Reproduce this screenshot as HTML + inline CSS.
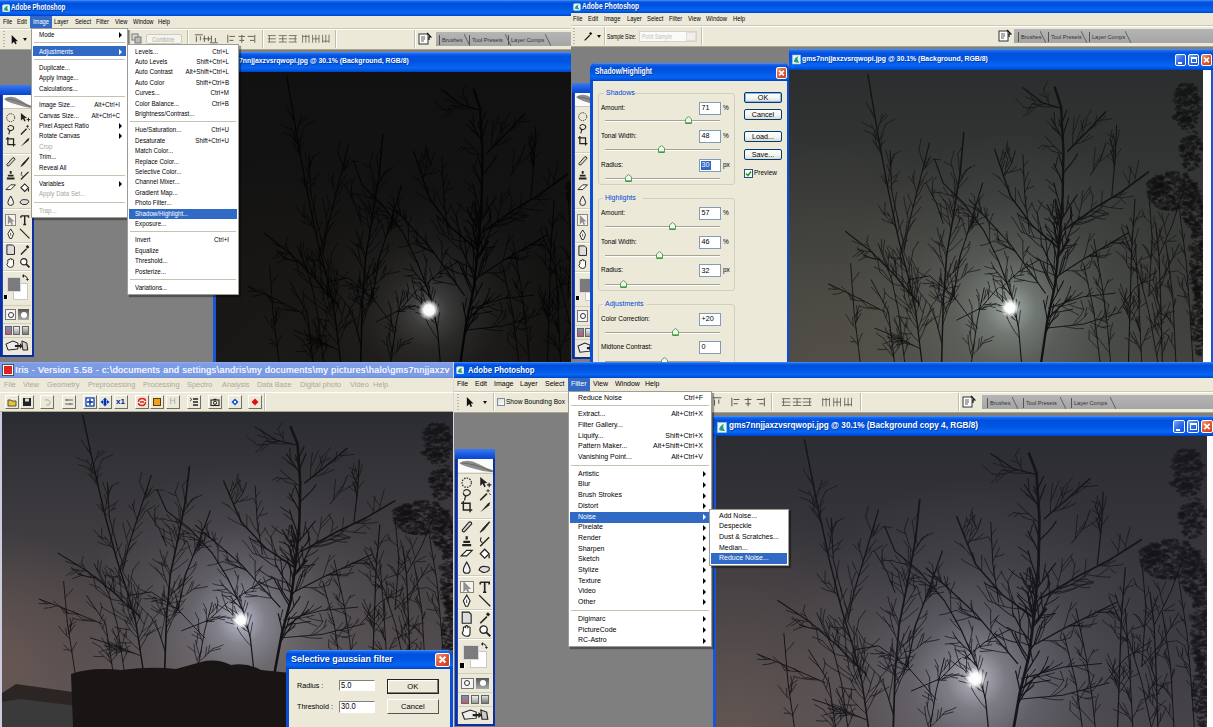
<!DOCTYPE html><html><head><meta charset="utf-8"><style>
html,body{margin:0;padding:0;width:1213px;height:727px;overflow:hidden;background:#7f7f7f}
body{position:relative;font-family:"Liberation Sans",sans-serif}
div{position:absolute;box-sizing:border-box}
.t{white-space:nowrap;line-height:1.15;font-size:7px;color:#000}
svg{position:absolute}
</style></head><body>
<svg width="0" height="0" style="position:absolute;left:0;top:0"><defs><g id="tree"><g fill="none" stroke-linecap="round"><path d="M35.0 69.9 38.7 48.1 44.4 15.2 53.9 -23.0 59.6 -68.7 63.3 -114.4 64.2 -160.0 61.3 -205.7 53.9 -225.0" stroke-width="2.75"/><path d="M53.4 -33.4 49.8 -34.8 46.3 -36.4M59.7 -94.9 55.8 -97.6 52.0 -100.4M58.3 -98.9 55.1 -101.4 51.8 -103.6 48.4 -105.9M55.7 -85.8 52.9 -89.6 50.1 -93.5 47.8 -97.6M54.7 -89.8 56.9 -94.3 59.2 -98.6 61.3 -103.0 63.1 -107.5M61.4 -184.4 59.6 -186.1 57.7 -187.9M56.4 -115.6 53.1 -118.4 49.7 -121.2 46.5 -124.1M54.0 -123.9 50.3 -126.5 46.7 -129.1 43.1 -131.9M57.4 -16.5 56.7 -21.3 55.8 -25.9 55.2 -30.7 55.0 -35.5M53.0 -40.2 53.0 -44.7 53.4 -49.3 53.7 -53.8 53.7 -58.4 53.5 -63.0M50.3 -43.4 45.6 -45.1 40.9 -46.8 36.3 -48.9 32.1 -51.5M45.5 -50.3 44.9 -54.8 44.2 -59.4 43.9 -63.9 43.2 -68.5 42.2 -72.9M43.6 -54.0 45.4 -58.6 47.6 -63.1 49.7 -67.6M39.7 -61.4 35.6 -63.5 31.8 -66.0 28.3 -68.9 24.8 -71.8 21.2 -74.7M37.6 -65.1 37.2 -69.4 37.1 -73.9 36.9 -78.3 36.7 -82.7M64.4 -94.4 64.0 -99.3 63.9 -104.2 63.4 -109.1 62.7 -114.0M67.3 -97.8 68.1 -102.0 69.0 -106.2 69.6 -110.5 70.2 -114.8M72.4 -91.2 72.9 -95.3 73.3 -99.4 73.5 -103.6M74.7 -94.7 73.3 -99.4 71.7 -104.2 69.9 -108.8M52.7 -83.3 54.0 -88.2 55.3 -93.1M51.6 -87.3 46.7 -89.6 41.7 -91.6M41.9 -36.1 38.0 -37.0 34.0 -38.0 30.2 -39.4 26.5 -41.2 23.0 -43.2 19.4 -45.2M36.3 -48.1 32.7 -49.8 29.2 -51.7 26.0 -54.1 22.6 -56.4 19.6 -59.0M63.6 -61.5 63.3 -65.7 62.8 -69.8 62.3 -74.0 61.4 -78.1 60.3 -82.2M68.0 -68.9 67.0 -73.2 66.5 -77.6 66.1 -82.0 65.9 -86.4M69.5 -72.9 73.0 -75.1 76.6 -77.1 80.1 -79.3 83.3 -81.8M73.0 -80.7 75.9 -83.7 78.5 -86.9 81.2 -90.0 83.5 -93.5M74.8 -84.6 74.3 -88.8 73.6 -92.9 73.3 -97.1 73.2 -101.3M52.7 4.4 57.3 4.1 61.8 3.6 66.3 2.8 70.8 2.1 75.3 1.3M63.3 -3.6 65.8 -7.0 68.0 -10.6 70.1 -14.2 71.7 -18.1 72.9 -22.1M66.8 -6.4 71.1 -7.9 75.3 -9.6 79.4 -11.6 83.4 -13.6 87.2 -16.1M58.5 -136.8 54.4 -140.3 50.6 -144.1M54.5 -143.8 55.9 -148.8 57.2 -153.8M56.1 -66.4 54.8 -70.9 53.9 -75.6 53.1 -80.2M53.1 -69.7 48.4 -72.6 43.6 -75.6M51.4 -67.1 47.8 -69.5 44.2 -72.0 40.6 -74.6 37.5 -77.7M63.6 -60.2 68.6 -61.4 73.6 -62.6M66.3 -63.4 71.0 -63.8 75.7 -64.2 80.4 -65.3M44.5 -34.6 44.8 -39.6 44.9 -44.7 44.6 -49.7M42.3 0.8 43.5 -3.6 44.3 -8.0 45.4 -12.4M60.1 -87.5 63.0 -91.3 65.7 -95.2M59.5 -91.5 61.6 -95.7 63.3 -100.0M59.1 -95.5 61.7 -98.5 64.3 -101.4M58.0 -85.4 58.1 -89.6 57.9 -93.8 57.6 -97.9 57.3 -102.1M50.7 -95.0 51.1 -100.2 51.9 -105.3 52.5 -110.5M48.7 -98.5 44.6 -100.9 40.7 -103.5 37.0 -106.5 33.7 -109.8M61.3 -175.7 57.7 -178.6 54.1 -181.6 50.5 -184.4M58.9 -179.3 55.4 -182.0 51.7 -184.5 48.3 -187.2 44.9 -190.1M54.1 -186.5 53.6 -191.1 53.1 -195.6 52.9 -200.2M49.7 14.0 52.8 10.9 56.1 8.0 59.0 4.8M59.1 -34.4 59.9 -38.3 60.9 -42.2 62.0 -46.1 63.3 -49.8 64.9 -53.6M65.2 -49.4 68.3 -52.2 71.2 -55.1 74.0 -58.2 76.5 -61.6 78.7 -65.0M67.3 -57.3 71.2 -59.8 74.7 -62.7 77.8 -66.0 80.8 -69.4 83.8 -72.9M57.7 -62.7 54.5 -65.0 51.3 -67.4 48.0 -69.8M55.9 -70.7 58.3 -74.8 60.5 -78.9 62.9 -83.0M55.0 -74.7 51.4 -77.1 48.0 -79.7 44.9 -82.6 42.1 -85.9M54.4 -78.8 56.1 -83.6 58.0 -88.3M53.7 -82.8 49.9 -87.3 46.7 -92.3M45.5 17.5 48.8 14.8 52.1 12.3 55.5 9.8 58.7 7.1M48.9 9.1 53.2 5.4 57.3 1.5M51.4 0.4 54.3 -2.8 57.4 -6.0 60.2 -9.3M63.5 -58.6 63.3 -62.7 63.1 -66.8 62.6 -70.8M63.3 -156.3 50.2 -167.8 42.4 -175.2M46.1 0.0 88.0 -11.5 126.3 -15.2M43.2 20.6 88.0 16.5 133.7 4.1M15.6 -156.3 17.7 -114.4 23.4 -76.5M96.7 -135.7 109.0 -152.2 115.2 -168.7M-6.2 -135.7 2.1 -148.1 6.2 -160.4M35.0 -49.4 10.3 -37.0 -10.3 -20.6M-144.0 -160.4 -141.9 -119.3 -133.7 -86.4M-191.3 -45.2 -187.2 4.1 -178.9 61.7M-218.0 -24.7 -187.2 -12.3 -150.1 4.1M-158.4 -65.8 -141.9 -28.8 -133.7 4.1 -125.5 61.7M-121.3 -28.8 -96.7 -32.9 -67.9 -12.3 -39.1 20.6M-63.8 12.3 -35.0 0.0 -14.4 -20.6M-162.5 20.6 -137.8 28.8 -109.0 41.1M-100.8 -127.5 -88.4 -107.0 -80.2 -86.4M178.9 -53.5 195.4 -86.4 207.7 -119.3M133.7 -82.3 154.3 -37.0 166.6 4.1 178.9 61.7M203.6 -98.7 211.8 -45.2 216.0 4.1 220.1 61.7M100.8 -69.9 111.1 -20.6 117.2 20.6 121.3 61.7M166.6 -119.3 170.7 -69.9 166.6 -12.3M158.4 61.7 154.3 -12.3 150.1 -69.9M199.5 61.7 195.4 -12.3 187.2 -65.8M109.0 61.7 100.8 4.1 88.4 -45.2M166.6 -12.3 187.2 -37.0 203.6 -65.8M129.6 4.1 150.1 -20.6 174.8 -37.0M-137.8 61.7 -146.0 4.1 -166.6 -28.8M-47.3 61.7 -39.1 12.3 -30.9 -20.6" stroke-width="1.00"/><path d="M54.7 -29.4 53.4 -33.4 52.0 -37.3 50.4 -41.2 49.1 -45.2M61.5 -91.0 59.7 -94.9 58.3 -98.9 57.1 -103.1 55.9 -107.2 54.6 -111.3M63.8 -141.4 62.5 -145.5 61.3 -149.5 59.8 -153.4 58.1 -157.3M63.3 -174.6 64.5 -178.6 65.9 -182.6 67.4 -186.5 68.9 -190.4 70.5 -194.3M59.2 -65.0 58.5 -69.2 58.1 -73.4 57.6 -77.6 56.8 -81.7 55.7 -85.8 54.7 -89.8 53.7 -93.9M62.9 -180.5 61.4 -184.4 60.1 -188.4 59.0 -192.4M62.1 -99.2 60.6 -103.3 59.2 -107.4 57.8 -111.5 56.4 -115.6 55.1 -119.7 54.0 -123.9 52.6 -128.0M62.3 -188.9 64.3 -193.4 66.3 -197.8 68.4 -202.2M48.6 -1.7 50.7 -5.5 53.0 -9.2 55.3 -12.8 57.4 -16.5 59.7 -20.2 62.1 -23.8 64.1 -27.6M55.6 -36.9 53.0 -40.2 50.3 -43.4 47.8 -46.8 45.5 -50.3 43.6 -54.0 41.8 -57.8 39.7 -61.4 37.6 -65.1M61.5 -91.1 64.4 -94.4 67.3 -97.8 69.9 -101.4 72.5 -105.0 75.1 -108.6 77.8 -112.1 80.5 -115.6M60.1 -74.1 62.4 -77.6 64.8 -81.1 67.3 -84.4 69.8 -87.8 72.4 -91.2 74.7 -94.7M59.0 -63.5 57.9 -67.5 56.5 -71.5 55.3 -75.4 53.8 -79.3 52.7 -83.3 51.6 -87.3M63.8 -137.8 66.8 -140.9 70.0 -144.0 73.0 -147.1 75.9 -150.3 78.6 -153.8 80.9 -157.5M52.3 -16.5 50.3 -20.5 48.1 -24.3 46.0 -28.2 44.0 -32.2 41.9 -36.1 40.0 -40.0 37.9 -44.0 36.3 -48.1M57.9 -55.1 60.9 -58.2 63.6 -61.5 65.9 -65.1 68.0 -68.9 69.5 -72.9 71.4 -76.8 73.0 -80.7 74.8 -84.6M45.7 9.9 49.3 7.2 52.7 4.4 56.2 1.7 59.8 -1.0 63.3 -3.6 66.8 -6.4 70.2 -9.2 73.3 -12.4M63.6 -125.9 62.0 -129.6 60.3 -133.2 58.5 -136.8 56.6 -140.4 54.5 -143.8 52.7 -147.4M58.9 -63.1 56.1 -66.4 53.1 -69.7 50.3 -73.0 47.6 -76.5 44.8 -79.8 42.2 -83.3M56.8 -46.1 56.0 -50.3 55.0 -54.6 53.9 -58.8 52.5 -62.9 51.4 -67.1 50.4 -71.4M57.8 -54.1 60.7 -57.1 63.6 -60.2 66.3 -63.4 69.0 -66.6 71.7 -69.8M53.3 -20.5 50.9 -24.0 48.6 -27.4 46.5 -31.0 44.5 -34.6 42.8 -38.4 41.1 -42.2 39.8 -46.1M44.9 13.5 44.1 9.2 43.3 5.0 42.3 0.8 41.4 -3.5 40.4 -7.7M60.4 -78.2 59.3 -82.1 58.2 -86.0 57.4 -90.0 56.4 -93.9 55.6 -97.9 55.2 -102.0 54.5 -106.0 54.2 -110.0M59.0 -63.6 60.9 -67.4 62.8 -71.1 64.8 -74.8 66.8 -78.4M60.8 -83.5 60.1 -87.5 59.5 -91.5 59.1 -95.5 58.5 -99.6M60.8 -82.4 58.0 -85.4 55.4 -88.4 53.0 -91.7 50.7 -95.0 48.7 -98.5 46.8 -102.0 44.7 -105.5M63.4 -171.9 61.3 -175.7 58.9 -179.3 56.6 -183.0 54.1 -186.5 51.7 -190.2 49.3 -193.7M42.6 25.7 44.9 21.8 47.3 17.9 49.7 14.0 52.2 10.2 54.4 6.2 56.8 2.3 59.0 -1.7M54.5 -27.7 56.7 -31.1 59.1 -34.4 61.1 -37.9 62.7 -41.7 64.1 -45.5 65.2 -49.4 66.3 -53.4 67.3 -57.3M58.4 -58.6 57.7 -62.7 56.9 -66.7 55.9 -70.7 55.0 -74.7 54.4 -78.8 53.7 -82.8M43.3 21.4 45.5 17.5 47.4 13.4 48.9 9.1 50.4 4.8 51.4 0.4 52.4 -4.0M57.5 -51.4 60.6 -54.9 63.5 -58.6 65.9 -62.6 68.3 -66.7 70.3 -70.9M61.3 -204.0 38.7 -209.8 15.6 -225.0M122.2 -114.4 126.3 -152.6 127.9 -186.8M42.4 -15.2 0.4 -65.0 -49.0 -110.7M53.9 -30.9 88.0 -49.8 141.5 -76.5M-96.7 -168.7 -109.0 -127.5 -121.3 -86.4 -127.5 -57.6M-197.4 -78.2 -166.6 -57.6 -137.8 -32.9 -109.0 -4.1M-90.5 -152.2 -80.2 -127.5 -55.5 -107.0 -30.9 -78.2 -14.4 -49.4 2.1 -12.3 10.3 20.6 14.4 61.7M-32.9 -127.5 -47.3 -86.4 -59.6 -53.5 -67.9 -12.3M150.1 -111.1 146.0 -57.6 144.0 4.1 141.9 61.7M183.1 61.7 181.0 -4.1 178.9 -53.5 174.8 -86.4" stroke-width="1.25"/><path d="M26.5 -208.4 23.7 -205.0 20.5 -201.9M42.7 -208.8 38.6 -208.5 34.6 -208.1 30.5 -208.3 26.5 -208.4M29.7 -205.1 25.9 -201.0 21.7 -197.2M25.4 -204.6 22.5 -201.5 19.4 -198.5 16.0 -195.9M16.8 -204.7 13.5 -207.9 10.0 -210.9 6.7 -214.2M42.0 -208.9 37.9 -207.6 33.9 -206.2 29.7 -205.1 25.4 -204.6 21.1 -204.6 16.8 -204.7M38.1 -210.2 34.0 -210.8 30.1 -212.0 26.1 -213.0 22.2 -214.1 18.3 -215.5M31.7 -207.5 28.8 -211.1 26.2 -214.8 23.9 -218.8 21.5 -222.7M55.7 -205.4 51.7 -205.5 47.6 -205.5 43.6 -205.6 39.5 -205.6 35.5 -206.3 31.7 -207.5 27.9 -209.1M45.5 -211.5 45.6 -215.6 45.6 -219.7M43.5 -215.2 39.6 -216.8 35.8 -218.5M40.3 -223.2 42.5 -227.2 44.8 -231.2M47.4 -207.6 45.5 -211.5 43.5 -215.2 41.7 -219.1 40.3 -223.2M105.6 -192.0 109.9 -191.9 114.1 -192.2 118.4 -192.8 122.6 -193.3M85.9 -183.6 89.7 -185.5 93.6 -187.3 97.2 -189.6M88.5 -191.2 91.6 -194.5 94.6 -197.9 97.2 -201.6M79.4 -168.8 80.7 -172.6 82.3 -176.3 84.0 -180.0 85.9 -183.6 87.4 -187.3 88.5 -191.2M87.0 -169.8 91.1 -173.2 94.8 -177.0M77.8 -167.4 82.5 -168.3 87.0 -169.8 91.6 -171.2 96.0 -173.3 100.3 -175.2M101.8 -185.6 102.9 -191.0 104.2 -196.4M94.2 -181.6 98.0 -183.4 101.8 -185.6 105.3 -188.1 108.6 -190.8 111.9 -193.5 115.2 -196.3M75.5 -178.1 77.3 -182.0 79.1 -185.8 80.5 -189.7 82.1 -193.6 84.0 -197.4M75.2 -165.2 75.2 -169.5 75.2 -173.8 75.5 -178.1 76.1 -182.4 76.3 -186.7 76.7 -191.0 77.4 -195.3M87.7 -180.7 86.5 -186.3 85.3 -191.8M83.8 -172.5 85.6 -176.7 87.7 -180.7 89.4 -184.9 91.2 -189.1 93.0 -193.3M43.8 -165.4 41.0 -163.4 38.4 -161.4M38.9 -166.2 36.3 -164.5 33.7 -163.0M53.7 -164.8 48.7 -165.1 43.8 -165.4 38.9 -166.2M48.9 -161.1 46.8 -163.0 44.6 -164.8M60.9 -158.4 56.8 -158.8 52.8 -159.7 48.9 -161.1M143.1 -127.9 140.9 -131.3 138.6 -134.6 136.3 -138.0M142.3 -123.9 143.1 -127.9 143.8 -132.0 144.0 -136.1 144.6 -140.1 145.2 -144.1M98.0 -103.8 101.4 -106.5 105.0 -109.0M99.6 -114.1 97.4 -118.5 95.3 -122.9M96.5 -98.8 98.0 -103.8 98.9 -108.9 99.6 -114.1M83.5 -98.1 80.7 -102.1 78.3 -106.3 76.3 -110.8M85.8 -106.7 88.5 -109.7 91.3 -112.6 93.8 -115.8 96.4 -118.9M86.4 -111.1 89.0 -114.6 91.8 -118.0 94.6 -121.4 97.5 -124.7M81.1 -89.6 82.3 -93.9 83.5 -98.1 84.6 -102.4 85.8 -106.7 86.4 -111.1 86.7 -115.5 87.2 -120.0M76.1 -86.6 80.5 -86.7 84.8 -87.2 89.1 -87.8 93.3 -88.9 97.4 -90.1 101.5 -91.5 105.6 -93.0 109.6 -94.5 113.7 -96.0M131.5 -114.7 134.4 -117.6 137.1 -120.7M122.4 -112.7 127.0 -113.6 131.5 -114.7 135.9 -116.1 140.1 -118.1M111.1 -99.7 114.6 -97.9 118.1 -95.9M95.9 -98.5 101.0 -98.3 106.1 -98.8 111.1 -99.7M121.6 -102.5 125.5 -104.7 129.2 -107.4 132.7 -110.3M108.1 -105.3 112.5 -104.1 117.0 -103.1 121.6 -102.5 126.1 -102.0 130.7 -101.6 135.3 -101.6M132.1 -112.8 135.8 -109.1 139.9 -105.8M124.0 -113.5 128.0 -113.0 132.1 -112.8 136.2 -112.8 140.2 -113.2 144.3 -113.6 148.3 -114.5M79.3 -85.4 82.8 -87.9 86.5 -90.2 90.0 -92.8 93.1 -95.9M74.7 -85.8 79.3 -85.4 83.9 -85.5 88.4 -86.4 92.9 -87.6 97.2 -89.1 101.3 -91.1M150.3 -133.3 147.6 -137.1 145.0 -141.0 142.3 -144.9M149.6 -128.5 150.3 -133.3 151.3 -137.9 152.5 -142.5 153.8 -147.1 154.9 -151.8M95.3 -94.2 99.7 -93.8 104.1 -93.8 108.5 -93.9 112.8 -94.6 117.2 -95.2M102.3 -98.3 106.3 -97.5 110.3 -96.7 114.4 -96.6 118.5 -97.1M109.2 -102.8 109.6 -107.0 110.3 -111.2 110.6 -115.4 110.9 -119.6M83.5 -91.0 87.5 -91.6 91.5 -92.7 95.3 -94.2 98.9 -96.1 102.3 -98.3 105.9 -100.4 109.2 -102.8 112.4 -105.4 115.6 -108.0M96.7 -94.1 101.2 -92.8 105.6 -91.7 110.1 -91.0 114.7 -91.0M80.7 -89.3 84.8 -90.1 88.9 -91.2 92.9 -92.4 96.7 -94.1 100.5 -95.9 104.1 -98.1 107.6 -100.4 111.0 -103.0M124.2 -149.8 119.8 -152.8 115.9 -156.5M122.2 -160.0 124.4 -163.3 126.4 -166.7M125.4 -144.7 124.2 -149.8 123.0 -154.9 122.2 -160.0M123.9 -152.2 124.4 -157.0 124.9 -161.8M125.7 -147.6 123.9 -152.2 122.0 -156.8 120.6 -161.5M126.9 -166.0 128.4 -169.9 129.5 -173.9 130.4 -177.9 131.2 -182.0M125.3 -143.2 124.8 -147.6 124.5 -152.0 124.5 -156.4M123.1 -164.2 120.1 -166.7 117.0 -169.1M121.6 -168.5 122.8 -172.6 123.9 -176.8M126.4 -155.8 124.9 -160.0 123.1 -164.2 121.6 -168.5 120.1 -172.7M119.9 -171.7 121.4 -177.0 122.5 -182.4M126.5 -157.2 124.3 -162.0 122.1 -166.9 119.9 -171.7M125.0 -173.8 120.9 -175.8 116.7 -177.8M126.9 -164.7 125.9 -169.2 125.0 -173.8 124.0 -178.3M126.3 -153.0 129.8 -157.9 133.3 -162.7M-11.6 -131.6 -16.0 -134.7 -20.6 -137.5M-2.4 -121.5 -5.7 -124.7 -8.5 -128.2 -11.6 -131.6 -14.6 -135.0M33.9 -85.7 31.4 -88.9 28.9 -92.1 26.5 -95.3M32.7 -97.9 35.0 -101.3 37.0 -105.0 39.2 -108.6M35.4 -77.8 34.6 -81.7 33.9 -85.7 33.4 -89.8 33.1 -93.8 32.7 -97.9M5.3 -108.8 1.2 -110.6 -2.6 -112.9 -6.5 -114.9 -10.3 -117.1 -13.9 -119.7M29.1 -72.1 26.7 -76.7 24.8 -81.5 22.8 -86.2M21.1 -74.8 18.8 -78.7 16.6 -82.6 14.6 -86.6M17.2 -76.3 15.4 -80.4 13.6 -84.6 12.0 -88.8 10.5 -93.0 8.8 -97.2M13.3 -77.8 10.5 -81.7 7.8 -85.7 4.9 -89.5 1.9 -93.2M45.7 -70.1 41.5 -70.0 37.3 -70.4 33.2 -71.2 29.1 -72.1 25.1 -73.3 21.1 -74.8 17.2 -76.3 13.3 -77.8M-11.1 -151.2 -8.5 -152.9 -6.1 -155.0M-12.7 -147.3 -11.1 -151.2 -10.1 -155.3 -8.8 -159.3M6.5 -107.5 6.5 -112.7 6.6 -117.9 6.4 -123.1M22.1 -89.7 17.9 -91.0 13.9 -92.7 10.1 -94.9M-4.8 -143.2 -2.4 -146.5 -0.2 -149.9 1.9 -153.3M-2.8 -152.3 -4.6 -155.7 -6.1 -159.2M-7.5 -134.4 -6.0 -138.8 -4.8 -143.2 -4.0 -147.8 -2.8 -152.3M1.0 -113.7 -0.3 -117.7 -1.4 -121.8 -2.4 -125.9M33.0 -95.2 30.5 -98.8 28.3 -102.6 26.4 -106.5M40.5 -74.0 38.6 -78.1 36.8 -82.2 35.4 -86.5 34.1 -90.8 33.0 -95.2M-6.6 -154.8 -7.9 -158.3 -8.8 -161.8M-5.2 -158.6 -2.4 -161.0 0.3 -163.3M-11.2 -143.5 -9.8 -147.3 -8.2 -151.1 -6.6 -154.8 -5.2 -158.6M22.4 -89.3 18.0 -91.5 13.6 -93.5 9.3 -95.9M-9.9 -140.4 -7.9 -145.0 -6.1 -149.7M25.0 -84.2 21.4 -88.5 18.0 -93.0M29.4 -82.3 25.0 -84.2 20.8 -86.4 16.8 -89.0 12.9 -91.7M31.4 -30.5 26.3 -33.1 21.1 -35.6M28.9 -38.5 23.9 -41.5 19.3 -45.0M32.8 -26.6 31.4 -30.5 30.2 -34.6 28.9 -38.5 27.6 -42.5 26.0 -46.4 24.4 -50.2M-28.5 -94.2 -27.8 -98.0 -27.5 -101.8M-26.8 -90.1 -28.5 -94.2 -30.0 -98.4 -31.1 -102.8M-32.0 -95.0 -35.6 -96.9 -39.1 -98.9 -42.6 -101.0 -46.2 -103.0M-34.5 -100.5 -36.2 -101.3 -37.9 -102.2M-33.7 -96.6 -34.5 -100.5 -35.5 -104.4M17.3 -28.2 13.2 -27.7 9.0 -27.4 4.9 -27.2M5.4 -30.8 3.6 -34.7 2.3 -38.7 0.9 -42.8M33.5 -25.7 29.4 -26.0 25.4 -26.7 21.3 -27.4 17.3 -28.2 13.3 -28.9 9.3 -29.6 5.4 -30.8M6.9 -57.4 2.9 -59.3 -1.1 -61.3 -5.0 -63.5 -8.7 -66.1 -12.0 -69.0 -15.5 -71.8M-36.7 -104.8 -36.4 -108.5 -36.2 -112.3M-34.0 -96.8 -35.4 -100.8 -36.7 -104.8 -38.0 -108.8M0.5 -61.1 -1.5 -65.7 -3.0 -70.4 -5.0 -75.0M-3.6 -62.1 -7.7 -60.7 -11.8 -59.3 -16.1 -58.4 -20.3 -57.3M-19.3 -68.4 -23.3 -66.9 -27.3 -65.4 -31.5 -64.4 -35.7 -63.8M4.6 -60.0 0.5 -61.1 -3.6 -62.1 -7.6 -63.4 -11.5 -65.0 -15.4 -66.7 -19.3 -68.4M15.8 -51.0 18.0 -54.5 20.1 -58.1 22.0 -61.9M15.5 -55.4 19.7 -59.2 23.6 -63.5M15.6 -68.7 12.2 -72.3 9.1 -76.2M15.9 -46.6 15.8 -51.0 15.5 -55.4 15.5 -59.8 15.4 -64.3 15.6 -68.7M-13.2 -67.4 -14.2 -71.9 -15.0 -76.4 -15.5 -80.9M5.5 -58.9 1.6 -60.2 -2.2 -61.7 -5.9 -63.5 -9.5 -65.5 -13.2 -67.4 -16.7 -69.5M-14.6 -78.9 -19.8 -80.3 -25.0 -81.6M-36.7 -99.4 -40.6 -100.7 -44.3 -102.3 -48.0 -103.9 -51.7 -105.7M-2.7 -67.9 -3.3 -73.0 -4.0 -78.2M-13.1 -69.6 -15.7 -73.0 -18.6 -76.2M-1.3 -66.6 -5.3 -67.4 -9.2 -68.4 -13.1 -69.6 -17.0 -70.8M95.4 -53.4 99.8 -53.1 104.2 -52.9 108.6 -53.0 113.0 -53.6 117.3 -54.2 121.6 -55.5M93.9 -67.5 97.9 -71.7 101.6 -76.2M88.5 -50.0 89.9 -54.4 91.3 -58.8 92.5 -63.2 93.9 -67.5 95.3 -71.9 96.5 -76.3M100.8 -53.0 104.4 -54.6 107.7 -56.7M114.8 -51.8 117.5 -56.0 119.6 -60.4M96.2 -53.8 100.8 -53.0 105.5 -52.3 110.1 -51.7 114.8 -51.8M69.0 -51.2 69.1 -56.4 69.2 -61.7M62.8 -35.8 64.5 -39.6 66.2 -43.4 67.7 -47.2 69.0 -51.2 70.1 -55.2 71.4 -59.1M112.8 -60.9 114.7 -64.8 116.2 -68.9M116.9 -61.8 118.9 -64.9 120.8 -68.1M121.1 -62.9 123.6 -65.5 125.8 -68.5M108.6 -60.1 112.8 -60.9 116.9 -61.8 121.1 -62.9M132.0 -66.0 135.4 -63.0 139.0 -60.2M137.2 -65.7 140.5 -67.2 143.4 -69.1M121.5 -66.5 126.7 -66.3 132.0 -66.0 137.2 -65.7M132.1 -66.5 134.8 -68.4 137.3 -70.4M122.6 -67.0 127.3 -66.6 132.1 -66.5M93.2 -52.4 98.9 -52.7 104.5 -53.8M75.4 -37.9 79.3 -35.7 83.1 -33.4 87.1 -31.5 91.0 -29.5M79.5 -37.9 83.1 -34.5 86.7 -31.3 90.5 -28.2 94.2 -24.9M87.7 -38.7 90.5 -41.7 93.3 -44.7 96.1 -47.6M95.4 -41.5 97.0 -45.7 98.3 -50.1 99.8 -54.4 100.9 -58.8M67.2 -38.2 71.3 -38.1 75.4 -37.9 79.5 -37.9 83.6 -38.2 87.7 -38.7 91.6 -39.9 95.4 -41.5M124.8 -68.2 128.9 -69.0 132.9 -69.8 136.9 -70.9 140.8 -72.3M92.3 -11.9 95.2 -16.2 98.1 -20.4M62.6 -2.0 65.8 -6.2 68.6 -10.7M70.9 -3.8 75.0 -2.0 79.2 -0.7 83.4 0.3 87.8 1.1M54.0 -2.2 58.3 -1.8 62.6 -2.0 66.8 -2.7 70.9 -3.8 75.1 -4.7 79.3 -5.8M59.5 -3.7 63.2 -1.7 66.8 0.4 70.7 2.0 74.5 3.6 78.4 5.3 82.2 7.0M91.4 -11.8 95.5 -14.1 99.6 -16.3M113.7 -7.3 116.2 -4.9 118.8 -2.7M99.4 -12.6 104.2 -10.8 108.9 -8.9 113.7 -7.3M68.8 -6.3 72.5 -9.9 75.7 -13.9 78.7 -18.0M102.0 12.7 105.0 9.6 107.7 6.3 110.1 2.7M88.5 1.8 86.9 -3.0 85.2 -7.9M75.1 17.6 78.0 14.7 80.8 11.6 83.7 8.6 86.2 5.3 88.5 1.8M124.1 3.8 125.4 1.1 126.6 -1.5M120.3 7.7 124.1 3.8 127.9 -0.1M108.8 12.1 112.9 13.7 117.1 15.0M117.5 12.1 119.2 10.0 120.7 7.8M104.4 12.0 108.8 12.1 113.1 12.4 117.5 12.1M89.7 8.9 91.2 4.0 92.2 -0.9M77.6 17.4 81.9 14.9 85.9 12.0 89.7 8.9 93.1 5.3M110.2 19.7 115.4 19.2 120.5 18.0M96.5 14.2 100.9 16.4 105.5 18.2 110.2 19.7 115.0 20.5M64.6 18.6 69.2 19.6 73.9 20.3 78.6 20.9 83.3 21.1 88.0 21.0M16.7 -135.5 15.0 -138.7 13.5 -142.0M19.9 -121.9 24.4 -122.9 28.7 -124.4M17.5 -117.4 19.9 -121.9 22.4 -126.5 24.5 -131.2M16.3 -143.7 18.6 -146.8 20.9 -149.9M20.3 -97.0 22.4 -100.6 24.7 -104.2 26.6 -107.9M17.7 -103.6 18.8 -108.8 20.1 -114.0M20.0 -99.4 17.7 -103.6 15.2 -107.6 13.0 -111.7 11.0 -116.0 9.3 -120.4M17.1 -126.1 18.5 -130.5 20.2 -134.8 22.2 -139.0M123.4 -160.4 124.1 -164.7 125.0 -169.0M106.9 -149.4 111.4 -151.6 115.6 -154.3 119.7 -157.1 123.4 -160.4M100.6 -145.0 103.9 -148.6 106.9 -152.4 109.6 -156.4M100.1 -140.3 100.6 -145.0 101.0 -149.7 101.4 -154.4 101.9 -159.1 102.3 -163.8M-0.1 -153.2 -0.9 -158.4 -1.3 -163.6M-2.4 -157.7 -2.7 -161.9 -2.8 -166.2M-4.7 -162.1 -3.8 -166.6 -2.5 -170.9M2.3 -148.9 -0.1 -153.2 -2.4 -157.7 -4.7 -162.1M-0.4 -138.7 3.9 -141.7 8.0 -144.8M-4.8 -137.9 -0.4 -138.7 3.9 -139.6 8.3 -140.5 12.5 -141.9M20.9 -37.6 23.1 -36.1 25.2 -34.6M10.5 -37.1 15.7 -37.0 20.9 -37.6M12.3 -33.4 14.0 -35.9 15.3 -38.5M3.7 -31.7 8.0 -32.7 12.3 -33.4 16.7 -34.0M12.7 -38.2 13.7 -42.1 15.0 -45.9M15.0 -39.4 18.1 -43.6 21.4 -47.6M-116.4 -59.1 -113.0 -63.6 -109.7 -68.1M-123.5 -35.9 -121.8 -39.6 -120.2 -43.3 -119.0 -47.2 -118.0 -51.1 -117.1 -55.1 -116.4 -59.1M-129.5 -64.3 -125.8 -66.9 -122.2 -69.6M-128.0 -68.8 -129.6 -72.5 -131.0 -76.3M-130.6 -59.7 -129.5 -64.3 -128.0 -68.8 -126.2 -73.2 -124.3 -77.5M-168.4 -179.2 -172.0 -180.0 -175.5 -181.2M-157.0 -170.6 -161.0 -173.2 -164.8 -176.1 -168.4 -179.2M-164.6 -183.9 -168.8 -185.5 -173.1 -187.3 -177.1 -189.5M-156.8 -169.6 -158.7 -173.1 -160.9 -176.6 -162.6 -180.3 -164.6 -183.9 -166.3 -187.5M-146.3 -129.1 -142.7 -131.7 -139.1 -134.2 -135.4 -136.6 -132.0 -139.5M-143.8 -145.8 -145.9 -150.8 -147.5 -155.8 -149.1 -160.9M-147.3 -125.0 -146.3 -129.1 -145.5 -133.3 -144.9 -137.5 -144.2 -141.6 -143.8 -145.8 -143.4 -150.0M-140.0 -95.4 -139.0 -99.9 -138.4 -104.4 -137.7 -109.0 -136.9 -113.5 -136.2 -118.1M-121.1 -44.8 -123.3 -48.7 -125.3 -52.8 -127.3 -56.8M-121.3 -28.8 -121.0 -32.8 -120.8 -36.8 -120.8 -40.8 -121.1 -44.8 -121.3 -48.8 -121.2 -52.8M-162.5 -175.3 -161.9 -179.1 -161.1 -182.9M-156.4 -167.6 -159.6 -171.3 -162.5 -175.3 -165.6 -179.2M-101.7 19.0 -98.8 16.2 -96.0 13.1 -93.5 9.9M-108.9 33.6 -107.2 29.9 -105.2 26.4 -103.3 22.8 -101.7 19.0 -100.0 15.4 -98.0 11.8M-133.0 -81.2 -133.8 -86.2 -134.4 -91.2M-135.4 -76.8 -133.0 -81.2 -130.5 -85.6 -128.2 -90.1M-117.5 -13.4 -117.2 -17.9 -117.3 -22.4 -117.1 -26.9 -117.3 -31.4 -117.8 -35.8 -118.2 -40.3 -118.4 -44.7M-127.7 -66.4 -128.8 -70.9 -130.2 -75.3 -131.3 -79.7 -132.4 -84.2M-124.8 -79.4 -121.5 -82.2 -118.4 -85.4 -115.5 -88.6 -112.7 -91.9M-130.1 -57.8 -129.1 -62.2 -127.7 -66.4 -126.3 -70.7 -125.3 -75.0 -124.8 -79.4 -124.2 -83.8 -123.7 -88.3M-161.4 -192.0 -164.6 -197.1 -167.4 -202.3M-115.0 -9.6 -112.8 -13.6 -110.8 -17.6 -109.0 -21.7 -107.5 -25.9M-113.1 -25.6 -109.3 -28.2 -105.5 -31.0 -102.1 -34.0 -98.8 -37.3 -95.3 -40.3M-110.8 -37.4 -113.4 -41.7 -116.0 -45.9 -118.4 -50.3M-115.6 -5.7 -115.0 -9.6 -114.6 -13.6 -114.0 -17.6 -113.5 -21.6 -113.1 -25.6 -112.6 -29.6 -111.7 -33.5 -110.8 -37.4 -109.9 -41.3M-162.1 -195.5 -165.0 -198.8 -167.7 -202.2 -170.1 -205.9 -172.1 -209.8M-106.9 13.5 -103.6 11.1 -100.5 8.4 -97.5 5.7 -94.5 2.8 -91.4 0.1M-104.3 4.9 -106.9 0.8 -109.2 -3.7 -111.3 -8.1M-110.6 21.7 -108.7 17.6 -106.9 13.5 -105.5 9.3 -104.3 4.9 -103.1 0.6 -101.6 -3.6 -100.5 -8.0M-154.7 -165.9 -152.5 -168.4 -150.2 -171.0M-154.4 -174.1 -152.5 -176.1 -150.9 -178.3M-155.2 -161.9 -154.7 -165.9 -154.5 -170.0 -154.4 -174.1M-109.9 -2.1 -109.8 -7.0 -109.9 -11.9M-112.9 5.5 -111.3 1.7 -109.9 -2.1 -108.6 -6.0 -107.5 -9.9 -106.5 -13.9M-140.7 -87.5 -140.5 -91.7 -140.0 -95.8M-144.9 -94.4 -149.4 -95.8 -153.6 -97.6M-136.4 -80.6 -138.5 -84.1 -140.7 -87.5 -142.8 -91.0 -144.9 -94.4 -147.1 -97.9M-132.0 -53.7 -130.2 -57.9 -128.0 -62.0 -126.3 -66.3M-125.3 -41.9 -127.9 -45.5 -130.1 -49.5 -132.0 -53.7 -134.1 -57.7 -136.4 -61.6M-118.1 26.3 -123.0 26.5 -127.9 26.3 -132.7 25.5M-123.7 19.9 -123.7 14.5 -123.8 9.2M-108.7 35.0 -112.0 32.3 -115.2 29.5 -118.1 26.3 -121.0 23.2 -123.7 19.9 -126.1 16.4M-156.6 -161.9 -156.5 -164.6 -156.3 -167.3M-154.4 -158.2 -156.6 -161.9 -159.0 -165.5 -160.9 -169.3M-130.7 -41.5 -131.0 -46.1 -131.5 -50.6 -131.6 -55.1 -131.9 -59.6M-140.8 -49.8 -143.1 -53.9 -145.5 -58.0 -148.0 -62.0M-123.7 -36.5 -127.2 -39.1 -130.7 -41.5 -134.2 -44.2 -137.4 -47.1 -140.8 -49.8 -143.8 -52.9 -146.7 -56.2M-119.1 -15.5 -123.4 -16.4 -127.6 -17.8 -131.6 -19.6M-121.3 -18.9 -120.5 -23.3 -119.6 -27.7 -118.6 -32.1M-125.3 -25.8 -129.7 -27.9 -133.7 -30.5 -137.4 -33.4M-127.6 -29.1 -131.8 -32.2 -136.0 -35.2 -140.1 -38.4M-117.2 -12.0 -119.1 -15.5 -121.3 -18.9 -123.2 -22.4 -125.3 -25.8 -127.6 -29.1 -129.8 -32.5M-111.3 -16.7 -113.0 -21.4 -114.8 -26.1 -116.5 -30.8M-110.7 -25.2 -112.2 -29.1 -113.6 -33.2 -114.6 -37.3 -115.8 -41.4M-114.2 -0.1 -113.5 -4.3 -112.5 -8.4 -112.0 -12.6 -111.3 -16.7 -111.1 -20.9 -110.7 -25.2 -110.4 -29.4 -110.0 -33.6M-118.1 5.3 -121.9 2.8 -125.7 0.4 -129.5 -2.1 -133.2 -4.7 -137.0 -7.3M-119.9 1.6 -118.6 -2.3 -117.2 -6.2 -116.2 -10.1 -115.4 -14.2 -114.8 -18.2M-121.9 -2.1 -125.4 -4.1 -128.7 -6.5 -132.0 -8.8 -135.1 -11.3 -138.0 -14.2M-126.1 -9.2 -126.7 -14.5 -127.5 -19.7 -128.7 -24.8M-111.5 15.8 -113.8 12.4 -116.1 8.9 -118.1 5.3 -119.9 1.6 -121.9 -2.1 -123.9 -5.7 -126.1 -9.2 -128.4 -12.7M-132.5 -50.3 -137.1 -51.0 -141.6 -51.5 -146.2 -52.0M-137.8 -56.6 -142.3 -59.9 -146.3 -63.7M-124.9 -40.6 -127.4 -43.9 -129.9 -47.1 -132.5 -50.3 -135.3 -53.3 -137.8 -56.6 -140.3 -59.9M-117.8 -0.2 -115.5 -5.6 -113.1 -11.0M-121.6 -11.8 -118.4 -16.7 -115.7 -21.8M-122.4 -15.8 -119.9 -19.3 -117.4 -22.9 -114.8 -26.5M-112.2 10.6 -114.2 7.1 -115.9 3.4 -117.8 -0.2 -119.4 -4.0 -120.7 -7.8 -121.6 -11.8 -122.4 -15.8M-119.6 11.1 -123.9 10.7 -128.0 9.9 -132.2 9.0 -136.4 8.2M-123.8 3.2 -122.0 -0.6 -120.1 -4.3 -118.3 -8.0 -116.6 -11.8M-110.7 21.0 -114.0 18.0 -116.9 14.7 -119.6 11.1 -121.9 7.2 -123.8 3.2 -125.4 -0.9M-149.3 -187.6 -145.7 -189.4 -142.1 -191.2 -138.4 -192.8M-157.2 -171.2 -155.0 -175.2 -153.2 -179.4 -151.3 -183.5 -149.3 -187.6M-104.8 17.7 -100.8 16.3 -96.9 14.6 -93.2 12.4 -89.6 10.2 -85.9 8.1M-94.3 -2.2 -90.8 -5.9 -87.6 -9.8 -84.3 -13.8M-110.1 25.1 -107.4 21.5 -104.8 17.7 -102.2 14.1 -99.7 10.3 -97.5 6.3 -95.9 2.0 -94.3 -2.2M-162.4 -167.8 -161.0 -173.3 -159.7 -178.9M-153.9 -155.9 -156.7 -159.9 -159.5 -163.9 -162.4 -167.8 -165.2 -171.8M-140.8 -86.2 -145.4 -87.4 -149.9 -89.0 -154.2 -91.0M-150.2 -95.0 -150.2 -99.3 -150.3 -103.5 -149.9 -107.8M-137.2 -83.8 -140.8 -86.2 -144.2 -88.9 -147.3 -91.8 -150.2 -95.0 -153.1 -98.2 -155.8 -101.6 -158.3 -105.1M-156.3 -189.1 -151.4 -192.6 -146.6 -196.1M-154.6 -193.6 -151.4 -195.6 -148.4 -198.0M-159.0 -180.0 -157.8 -184.6 -156.3 -189.1 -154.6 -193.6 -153.3 -198.2M-103.4 -126.8 -99.8 -129.0 -96.2 -131.1 -92.7 -133.5M-113.7 -111.9 -110.6 -115.3 -107.8 -118.9 -105.5 -122.8 -103.4 -126.8M-101.6 -143.1 -99.3 -147.9 -97.4 -152.8M-92.3 -152.0 -87.7 -151.7 -83.1 -151.4M-105.1 -140.7 -101.6 -143.1 -98.4 -146.0 -95.5 -149.0 -92.3 -152.0M-116.5 -102.6 -112.8 -106.2 -109.6 -110.1 -106.4 -114.0M-116.3 -103.1 -118.7 -107.6 -120.9 -112.1 -122.8 -116.7M-119.9 -91.4 -116.2 -93.7 -112.8 -96.5 -109.8 -99.8 -106.9 -103.0M-111.2 -120.2 -108.8 -123.6 -106.3 -127.0 -104.1 -130.4M-123.4 -76.7 -120.5 -80.8 -118.1 -85.2 -115.5 -89.5M-102.0 -144.4 -101.5 -149.1 -100.6 -153.7M-104.9 -141.2 -102.0 -144.4 -99.5 -147.8 -97.4 -151.5 -95.4 -155.3M-109.5 -126.0 -106.7 -129.1 -104.0 -132.1 -101.6 -135.3 -99.1 -138.5M-109.4 -161.8 -108.0 -167.1 -106.9 -172.5M-103.3 -146.4 -104.8 -150.3 -106.5 -154.0 -107.9 -157.9 -109.4 -161.8M-114.8 -126.5 -118.3 -130.3 -121.7 -134.3M-116.0 -131.1 -115.2 -135.5 -114.7 -139.9M-112.1 -117.3 -113.4 -121.9 -114.8 -126.5 -116.0 -131.1 -117.3 -135.7M-123.5 -95.3 -121.6 -100.9 -119.6 -106.3M-121.4 -86.3 -122.4 -90.8 -123.5 -95.3 -124.6 -99.9 -125.6 -104.4 -126.7 -108.9 -127.4 -113.5M-143.4 -149.1 -140.9 -152.7 -138.6 -156.5M-142.0 -148.5 -143.0 -152.8 -143.6 -157.1M-139.3 -156.8 -135.2 -158.7 -131.2 -160.7M-143.2 -144.2 -142.0 -148.5 -140.7 -152.7 -139.3 -156.8M-142.7 -134.6 -144.5 -138.3 -146.0 -142.2 -147.5 -146.1M-139.7 -128.6 -137.3 -129.4 -134.9 -130.3M-142.2 -125.3 -139.7 -128.6 -137.3 -132.0 -135.2 -135.5M-149.2 -127.2 -150.3 -131.6 -151.7 -135.8M-142.0 -120.6 -145.5 -123.9 -149.2 -127.2 -152.4 -130.9 -155.1 -134.9M-146.7 -43.0 -150.3 -45.8 -154.0 -48.4 -157.4 -51.4M-152.4 -56.0 -151.9 -60.4 -151.3 -64.8 -150.3 -69.2M-154.6 -60.1 -154.2 -65.2 -154.1 -70.3M-144.6 -38.7 -146.7 -43.0 -148.5 -47.4 -150.5 -51.6 -152.4 -56.0 -154.6 -60.1M-128.6 -23.7 -129.2 -28.3 -129.5 -32.8 -129.6 -37.3 -130.0 -41.9 -130.1 -46.4 -130.0 -51.0M-176.7 -64.3 -180.9 -65.4 -185.0 -67.0 -189.1 -68.4M-170.7 -57.5 -173.2 -54.8 -175.6 -52.2M-175.0 -58.2 -179.4 -55.5 -183.8 -52.8M-179.3 -58.9 -184.0 -55.5 -188.6 -51.9M-166.3 -57.3 -170.7 -57.5 -175.0 -58.2 -179.3 -58.9 -183.6 -59.9M-136.7 -31.8 -136.3 -37.2 -135.5 -42.5M-170.8 -52.0 -174.8 -55.8 -178.5 -59.8M-157.5 -49.8 -162.0 -50.2 -166.4 -51.1 -170.8 -52.0 -175.0 -53.5M-122.2 -25.4 -120.6 -29.4 -119.1 -33.4M-121.2 -16.3 -121.9 -20.8 -122.2 -25.4 -122.0 -30.0M-119.6 -13.4 -121.2 -17.5 -122.5 -21.8 -123.5 -26.1M-128.7 -22.2 -133.1 -23.0 -137.5 -23.8 -141.8 -25.3M-116.0 -11.1 -119.6 -13.4 -122.9 -16.0 -125.9 -19.0 -128.7 -22.2 -131.4 -25.5 -134.1 -28.8M-138.4 -33.4 -140.1 -37.5 -141.6 -41.6 -142.9 -45.8M-169.5 -62.6 -172.0 -64.0 -174.6 -65.3M-171.9 -67.7 -171.1 -70.8 -170.2 -73.8M-166.7 -57.6 -169.5 -62.6 -171.9 -67.7M-137.0 -36.0 -140.7 -40.0 -144.4 -44.0M-137.4 -45.7 -138.9 -49.5 -140.1 -53.4 -141.3 -57.3M-136.1 -31.2 -137.0 -36.0 -137.4 -40.8 -137.4 -45.7 -137.7 -50.6M-161.6 -49.9 -163.4 -53.6 -165.0 -57.4M-170.8 -52.5 -176.4 -50.6 -181.8 -48.5M-175.4 -53.9 -179.3 -57.7 -182.9 -61.8M-156.8 -49.2 -161.6 -49.9 -166.3 -50.9 -170.8 -52.5 -175.4 -53.9M-75.5 -56.5 -71.5 -58.9 -67.6 -61.6 -64.1 -64.7 -60.4 -67.7 -57.0 -70.9M-71.2 -7.3 -70.2 -11.6 -69.1 -15.9 -68.3 -20.3M-68.8 -11.1 -68.7 -15.5 -68.9 -19.9 -69.4 -24.3M-80.4 2.3 -77.2 -0.7 -74.0 -3.8 -71.2 -7.3 -68.8 -11.1 -66.9 -15.1M-75.9 4.6 -77.5 0.9 -78.8 -3.0 -80.4 -6.7 -81.7 -10.5M-72.2 -3.6 -68.7 -6.9 -65.4 -10.5 -62.3 -14.2M-68.9 -12.0 -65.5 -16.0 -62.5 -20.2 -59.9 -24.7M-67.5 -16.3 -68.5 -21.0 -69.6 -25.6 -71.0 -30.2 -72.3 -34.8M-80.9 17.1 -79.0 13.0 -77.4 8.8 -75.9 4.6 -74.1 0.4 -72.2 -3.6 -70.5 -7.8 -68.9 -12.0 -67.5 -16.3M-81.5 -62.6 -85.1 -64.5 -88.6 -66.6 -92.0 -68.8 -95.1 -71.4M-82.9 -66.5 -81.6 -71.0 -80.1 -75.5 -79.0 -80.1M-76.3 -51.4 -77.9 -55.2 -79.7 -58.9 -81.5 -62.6 -82.9 -66.5 -84.1 -70.4 -85.4 -74.3 -86.5 -78.3 -87.3 -82.3M-71.7 -98.1 -69.6 -103.2 -67.3 -108.3M-73.2 -102.0 -71.8 -105.3 -70.8 -108.8M-74.7 -106.0 -78.0 -108.6 -81.3 -111.1M-68.8 -90.1 -70.3 -94.0 -71.7 -98.1 -73.2 -102.0 -74.7 -106.0M-86.4 20.6 -85.5 16.2 -84.9 11.9 -83.9 7.6 -83.2 3.3 -82.5 -1.1 -82.0 -5.4 -81.5 -9.8M-96.8 -3.6 -100.3 -6.7 -103.3 -10.2 -106.3 -13.6 -109.4 -17.1 -112.2 -20.8M-81.5 37.4 -82.9 33.3 -84.1 29.1 -85.3 24.8 -86.4 20.6 -87.7 16.4 -89.3 12.3 -91.1 8.3 -93.1 4.3 -94.9 0.3 -96.8 -3.6M-71.3 -11.0 -73.6 -14.6 -75.6 -18.4 -77.7 -22.1 -80.0 -25.7 -82.4 -29.2M-80.6 9.8 -78.9 5.6 -77.0 1.5 -74.8 -2.6 -73.0 -6.7 -71.3 -11.0 -69.9 -15.2 -68.3 -19.5M-65.1 -81.3 -61.3 -82.7 -57.7 -84.5 -54.3 -86.7M-60.7 -89.0 -61.4 -93.8 -61.7 -98.6 -62.5 -103.3M-72.7 -70.3 -70.2 -74.0 -67.4 -77.5 -65.1 -81.3 -62.9 -85.1 -60.7 -89.0 -58.7 -93.0M-67.9 -94.3 -69.1 -98.8 -70.5 -103.2 -71.8 -107.6 -73.3 -111.9M-78.1 -29.6 -75.8 -33.4 -73.6 -37.2 -71.8 -41.2 -69.7 -45.1 -67.7 -49.0 -65.8 -53.0M-74.3 -62.7 -71.1 -65.9 -68.3 -69.6 -65.9 -73.5 -63.4 -77.2 -60.6 -80.9M-71.9 -84.2 -75.4 -87.5 -78.7 -91.0 -82.2 -94.5 -85.7 -97.7M-74.0 -92.4 -77.7 -94.4 -81.4 -96.3 -85.1 -98.2M-75.6 -100.7 -79.3 -102.5 -82.9 -104.5 -86.4 -106.6 -89.8 -108.8 -93.2 -111.1M-77.7 -108.9 -80.7 -111.7 -83.4 -114.9 -86.1 -118.0M-70.8 -80.1 -71.9 -84.2 -72.9 -88.3 -74.0 -92.4 -74.7 -96.6 -75.6 -100.7 -76.5 -104.8 -77.7 -108.9M-57.3 -132.8 -58.7 -137.6 -60.5 -142.4M-55.0 -137.0 -51.2 -140.9 -47.3 -144.8M-62.4 -124.7 -59.8 -128.7 -57.3 -132.8 -55.0 -137.0 -52.7 -141.2M-82.8 -5.6 -86.5 -7.5 -90.2 -9.4 -93.8 -11.4 -97.3 -13.6M-85.1 -8.9 -89.0 -11.3 -92.6 -14.1 -96.1 -17.0M-87.1 -12.4 -85.7 -16.9 -84.8 -21.5 -83.9 -26.1 -83.3 -30.7M-80.3 -2.6 -82.8 -5.6 -85.1 -8.9 -87.1 -12.4 -88.8 -16.0 -90.3 -19.7 -91.8 -23.4 -93.3 -27.1M-74.5 -32.0 -70.4 -35.0 -66.8 -38.4 -63.2 -41.9M-79.0 -18.9 -77.5 -23.3 -75.8 -27.6 -74.5 -32.0 -73.1 -36.4 -72.1 -40.9 -71.2 -45.5M-63.0 -121.7 -59.7 -124.5 -56.3 -127.3 -53.3 -130.4 -50.3 -133.6M-81.4 35.1 -82.9 31.3 -84.1 27.4 -85.3 23.5 -86.7 19.7 -87.8 15.8 -89.3 12.0 -90.5 8.1 -91.6 4.2 -92.3 0.2M-80.2 -44.0 -82.8 -47.5 -85.1 -51.2 -87.4 -54.9 -89.8 -58.6 -92.3 -62.2M-82.4 -51.7 -86.1 -54.0 -89.4 -56.8 -92.6 -59.7 -95.5 -62.9 -98.6 -65.9M-77.5 -36.4 -78.7 -40.2 -80.2 -44.0 -81.3 -47.8 -82.4 -51.7 -83.5 -55.5 -84.4 -59.4 -85.1 -63.4 -85.6 -67.4M-63.7 -100.7 -61.3 -102.7 -58.8 -104.6M-68.9 -89.3 -67.1 -93.1 -65.2 -96.8 -63.7 -100.7M-76.5 -19.7 -71.8 -20.7 -67.2 -21.5 -62.5 -22.3M-73.8 -23.4 -74.5 -28.1 -75.1 -32.9 -75.8 -37.7M-70.9 -26.9 -66.3 -27.6 -61.8 -28.9M-79.2 -16.2 -76.5 -19.7 -73.8 -23.4 -70.9 -26.9 -68.4 -30.6 -65.7 -34.2M-69.6 -145.0 -74.3 -146.9 -78.8 -149.3M-71.0 -148.9 -69.6 -152.7 -68.4 -156.6 -67.1 -160.5M-62.2 -125.7 -64.0 -129.4 -65.7 -133.2 -67.1 -137.1 -68.2 -141.1 -69.6 -145.0 -71.0 -148.9M-51.9 -141.5 -46.8 -143.5 -41.9 -146.0M-61.7 -128.3 -59.1 -131.5 -56.7 -134.8 -54.4 -138.2 -51.9 -141.5M-68.1 -36.2 -67.0 -40.4 -65.7 -44.5 -64.3 -48.6M-65.1 -39.2 -63.5 -43.0 -62.1 -46.8 -60.9 -50.6 -59.6 -54.4 -58.0 -58.2M-78.2 -27.9 -74.8 -30.6 -71.4 -33.3 -68.1 -36.2 -65.1 -39.2 -62.3 -42.6 -59.8 -46.2 -57.6 -49.9M-79.1 -62.8 -84.1 -65.5 -89.0 -68.1M-75.9 -54.6 -77.4 -58.7 -79.1 -62.8 -81.1 -66.8 -82.6 -70.9 -83.7 -75.2M-63.0 -157.2 -60.2 -160.8 -57.5 -164.5M-60.2 -137.0 -60.7 -141.1 -61.1 -145.1 -61.7 -149.1 -62.2 -153.2 -63.0 -157.2M-82.5 -10.7 -80.8 -14.5 -78.8 -18.3 -76.7 -22.0M-85.0 -18.6 -90.3 -21.1 -95.6 -23.8M-86.5 -22.4 -85.2 -26.5 -84.2 -30.6 -83.0 -34.7M-80.3 -2.7 -81.5 -6.7 -82.5 -10.7 -83.8 -14.6 -85.0 -18.6 -86.5 -22.4M-3.9 -30.3 -5.8 -32.8 -7.8 -35.2M-3.8 -25.6 -3.9 -30.3 -3.6 -35.1 -3.2 -39.9M-0.6 -14.3 -0.8 -19.2 -1.1 -24.0 -1.5 -28.9M-6.3 -20.5 -10.2 -22.7 -14.0 -25.1 -17.6 -27.9M-11.3 -27.4 -16.0 -28.0 -20.5 -29.2M2.3 -11.2 -0.6 -14.3 -3.5 -17.4 -6.3 -20.5 -8.9 -23.9 -11.3 -27.4M-55.6 -101.6 -60.0 -100.7 -64.5 -99.8 -68.9 -99.2M-66.6 -107.8 -67.8 -111.7 -69.1 -115.6 -70.5 -119.5M-47.9 -98.1 -51.7 -99.9 -55.6 -101.6 -59.5 -103.2 -63.2 -105.3 -66.6 -107.8M-3.0 -48.4 -4.8 -53.2 -6.7 -58.0M-6.3 -31.2 -5.4 -35.5 -4.6 -39.8 -3.6 -44.1 -3.0 -48.4 -2.2 -52.7M-74.0 -115.4 -77.1 -119.2 -79.8 -123.3M-83.1 -118.2 -87.0 -118.0 -91.0 -118.3M-64.6 -114.5 -69.3 -114.8 -74.0 -115.4 -78.7 -116.4 -83.1 -118.2M7.5 9.5 8.1 5.5 9.1 1.6 10.3 -2.3 11.4 -6.2M0.7 -4.7 -4.1 -3.5 -9.0 -2.6 -14.0 -2.2M4.5 -2.8 0.7 -4.7 -2.8 -7.0 -6.1 -9.6 -9.6 -12.0 -13.2 -14.3 -16.6 -16.8M4.4 11.2 1.7 7.3 -0.4 3.2 -2.3 -1.1M8.5 13.5 4.4 11.2 0.6 8.4 -3.2 5.5 -6.9 2.6 -10.5 -0.5M-13.6 -47.7 -16.9 -50.3 -19.9 -53.3 -22.6 -56.5 -25.0 -59.9M-43.6 -93.1 -43.4 -97.6 -42.9 -102.0 -41.9 -106.4M-63.7 -111.8 -67.9 -113.1 -71.9 -115.0M-52.7 -103.7 -56.6 -106.0 -60.4 -108.7 -63.7 -111.8 -67.0 -114.9M3.3 -7.3 5.1 -11.6 6.5 -16.0 7.6 -20.5M-66.8 -131.8 -69.3 -134.9 -71.5 -138.2M-66.0 -115.7 -66.5 -119.7 -66.8 -123.7 -67.0 -127.8 -66.8 -131.8M-51.8 -96.1 -55.8 -96.8 -59.7 -97.4 -63.7 -98.0M-41.0 -90.0 -44.6 -92.0 -48.2 -94.1 -51.8 -96.1 -55.2 -98.5 -58.2 -101.4M-43.7 -93.1 -47.8 -93.5 -51.9 -93.9 -56.1 -94.3M-3.6 9.4 -3.2 4.6 -3.0 -0.2 -2.9 -4.9M11.2 30.2 8.3 27.1 5.5 23.8 3.1 20.3 0.6 16.9 -1.6 13.2 -3.6 9.4M9.8 18.8 10.6 14.8 11.4 10.8 11.9 6.7 12.7 2.7M5.2 7.1 6.3 3.2 7.1 -0.7 7.5 -4.7 7.7 -8.7M7.8 10.7 5.2 7.1 2.5 3.5 0.1 -0.1 -2.0 -4.1 -4.0 -8.0 -5.9 -12.1 -7.3 -16.3M-10.5 -31.2 -15.6 -32.1 -20.6 -33.5 -25.4 -35.5M-18.5 -40.2 -22.5 -40.5 -26.4 -41.3 -30.2 -42.5M-4.1 -26.3 -7.3 -28.8 -10.5 -31.2 -13.5 -33.9 -16.1 -36.9 -18.5 -40.2 -20.7 -43.5 -22.7 -47.0M3.2 5.2 -1.8 4.9 -6.7 4.6 -11.5 3.5 -16.3 2.2M-0.4 2.9 -3.1 -1.0 -5.8 -4.7 -8.5 -8.5 -11.0 -12.4M-9.1 -6.4 -8.7 -11.5 -8.6 -16.5 -8.9 -21.5M-11.8 -9.7 -15.4 -11.7 -18.8 -14.0 -22.2 -16.3 -25.4 -18.8M-14.7 -12.9 -16.2 -16.6 -17.4 -20.4 -18.6 -24.3 -19.6 -28.2 -20.2 -32.2M6.9 7.1 3.2 5.2 -0.4 2.9 -3.7 0.1 -6.5 -3.1 -9.1 -6.4 -11.8 -9.7 -14.7 -12.9M-24.6 -83.7 -26.5 -87.8 -28.3 -92.0 -30.4 -96.0M-24.4 -88.0 -22.2 -92.3 -20.3 -96.7M-24.2 -66.4 -24.5 -70.7 -24.6 -75.0 -24.7 -79.4 -24.6 -83.7 -24.4 -88.0M-64.5 -114.4 -64.8 -119.4 -64.9 -124.4 -64.6 -129.5M-4.6 -19.2 -8.7 -20.0 -12.6 -21.3M-8.0 -22.3 -9.4 -25.7 -10.8 -29.0M1.9 -12.7 -1.4 -15.9 -4.6 -19.2 -8.0 -22.3M-14.6 -36.3 -19.7 -35.4 -24.9 -34.9 -30.0 -34.7M-4.4 -27.0 -8.0 -29.9 -11.3 -33.2 -14.6 -36.3 -18.0 -39.4 -21.3 -42.6M0.5 -22.7 -3.0 -25.0 -6.1 -27.8M-0.4 -27.0 0.9 -30.8 2.2 -34.5M1.3 -14.0 1.1 -18.3 0.5 -22.7 -0.4 -27.0M2.3 -11.2 3.1 -15.2 4.2 -19.0 4.9 -23.0M-43.6 -87.6 -45.8 -89.1 -47.8 -90.7M-38.4 -87.0 -43.6 -87.6 -48.7 -88.8M-189.7 -26.7 -186.7 -29.7 -183.9 -33.0 -181.3 -36.4M-188.1 18.1 -188.5 13.8 -189.0 9.5M-184.7 21.3 -188.1 18.1 -191.3 14.5 -194.0 10.7 -196.9 6.9M-184.4 5.9 -181.1 3.8 -177.9 1.5M-186.4 9.6 -184.4 5.9 -182.6 2.1 -181.0 -1.8M-188.3 -9.5 -191.7 -12.7 -195.1 -16.0 -198.7 -19.0 -202.2 -22.1M-183.4 12.3 -183.8 9.2 -184.1 6.1M-185.5 15.9 -183.4 12.3 -181.2 8.8 -179.0 5.4M-182.9 4.8 -183.7 1.2 -184.5 -2.4M-185.5 15.7 -184.1 10.3 -182.9 4.8M-182.5 36.8 -181.0 33.0 -179.3 29.3 -177.3 25.8M-185.5 34.6 -188.3 34.6 -191.1 34.3M-182.4 37.3 -185.5 34.6 -188.3 31.7 -191.2 28.8M-209.1 -19.2 -212.7 -21.5 -216.2 -23.9M-204.8 -19.4 -209.1 -19.2 -213.5 -19.1 -217.8 -19.6M-169.0 0.3 -172.2 -2.1 -175.1 -4.9 -178.0 -7.7 -180.9 -10.4M-156.4 1.3 -160.6 1.1 -164.8 0.8 -169.0 0.3 -173.2 -0.1 -177.4 -1.1 -181.4 -2.3M-198.8 -17.0 -203.2 -15.4 -207.7 -14.4 -212.4 -14.0M-159.2 0.1 -164.2 -0.2 -169.1 -1.2M-185.6 -7.9 -188.5 -10.5 -191.2 -13.2M-190.7 -8.6 -192.6 -12.0 -194.3 -15.6M-175.4 -7.1 -180.5 -7.3 -185.6 -7.9 -190.7 -8.6M-133.2 29.1 -137.5 27.3 -141.9 25.5M-129.0 36.8 -131.2 32.9 -133.2 29.1 -135.0 25.1 -136.4 21.0M-153.0 -38.2 -158.0 -39.9 -162.9 -41.9M-141.0 -25.2 -144.0 -28.5 -147.2 -31.6 -150.0 -35.0 -153.0 -38.2M-125.8 19.4 -128.8 14.3 -132.0 9.3M-129.5 33.2 -127.9 28.7 -126.8 24.1 -125.8 19.4 -124.7 14.8M-136.3 -6.3 -139.9 -8.5 -143.6 -10.6 -147.0 -13.1 -150.4 -15.7M-134.0 21.1 -132.2 16.0 -130.1 11.1M-129.6 32.6 -131.4 28.9 -132.9 25.1 -134.0 21.1 -135.5 17.3 -137.2 13.6 -138.7 9.7M-156.1 -36.6 -157.2 -40.6 -158.0 -44.7 -158.8 -48.8M-141.1 -25.3 -145.0 -27.9 -148.9 -30.6 -152.5 -33.6 -156.1 -36.6M-138.3 -47.6 -134.6 -50.1 -131.0 -52.8M-142.7 -30.5 -141.5 -34.8 -140.1 -39.0 -139.0 -43.2 -138.3 -47.6M-123.8 39.7 -124.0 36.6 -124.4 33.4M-127.4 48.4 -125.7 44.0 -123.8 39.7 -121.7 35.6M-130.7 25.1 -133.7 20.9 -136.5 16.6 -139.4 12.3M-146.0 -49.2 -147.9 -53.9 -149.5 -58.7M-146.4 -38.9 -146.3 -44.0 -146.0 -49.2 -145.4 -54.3M-42.1 -92.0 -40.1 -93.2 -38.2 -94.3M-48.2 -84.1 -44.9 -87.9 -42.1 -92.0M-62.4 -39.8 -58.8 -43.2 -55.7 -47.0 -52.4 -50.8M-42.8 -113.5 -44.7 -115.3 -46.6 -117.0M-41.2 -103.8 -42.2 -108.6 -42.8 -113.5M-46.4 -84.4 -45.6 -88.0 -44.5 -91.6M-43.9 -87.6 -43.4 -91.9 -42.7 -96.2M-41.4 -90.7 -41.7 -94.2 -42.1 -97.7M-39.0 -94.0 -38.3 -97.3 -37.7 -100.5M-49.2 -81.4 -46.4 -84.4 -43.9 -87.6 -41.4 -90.7 -39.0 -94.0M-39.9 -107.6 -35.9 -111.9 -31.9 -116.2M-45.3 -81.9 -44.7 -87.8 -44.2 -93.7M-42.4 -84.8 -36.9 -85.4 -31.6 -86.6M-39.6 -87.9 -39.2 -92.4 -38.7 -96.9M-36.8 -90.9 -32.8 -92.1 -28.9 -93.4 -25.2 -95.1M-51.2 -76.1 -48.1 -78.8 -45.3 -81.9 -42.4 -84.8 -39.6 -87.9 -36.8 -90.9M-48.1 -81.3 -45.6 -82.6 -43.3 -84.1M-45.3 -85.4 -43.0 -87.3 -40.9 -89.5M-50.7 -77.2 -48.1 -81.3 -45.3 -85.4M-50.5 -62.9 -49.3 -65.4 -48.1 -67.9M-57.6 -58.9 -54.0 -60.8 -50.5 -62.9 -47.2 -65.2M-57.6 -91.2 -61.4 -93.0 -65.0 -95.0 -68.6 -97.1M-52.1 -73.5 -53.5 -78.0 -55.0 -82.3 -56.4 -86.8 -57.6 -91.2M-58.3 -30.6 -56.4 -35.3 -54.4 -39.9 -52.7 -44.5M-54.7 -33.4 -53.1 -37.3 -52.0 -41.4 -51.1 -45.5M-51.2 -36.3 -46.1 -37.3 -41.0 -38.2 -35.9 -39.3M-65.3 -25.0 -61.8 -27.8 -58.3 -30.6 -54.7 -33.4 -51.2 -36.3 -47.6 -39.0 -44.0 -41.8M-65.9 -40.7 -65.0 -44.2 -64.2 -47.8M-64.9 -27.3 -65.4 -31.8 -65.7 -36.3 -65.9 -40.7M-49.3 -80.9 -49.5 -86.2 -49.8 -91.5 -50.3 -96.7M-61.3 -45.2 -58.5 -48.4 -55.8 -51.7 -53.0 -54.9 -50.5 -58.3 -48.5 -62.0M-45.6 -1.0 -47.4 -4.9 -49.2 -8.8M-45.4 13.3 -45.4 8.5 -45.6 3.8 -45.6 -1.0M-100.5 -32.3 -105.6 -34.3 -110.5 -36.9M-66.6 -10.9 -66.9 -16.9 -66.8 -22.9M-70.6 -14.3 -75.2 -15.7 -79.6 -17.6 -83.9 -19.5 -88.2 -21.6M-69.5 -9.2 -73.3 -7.3 -77.0 -5.3 -80.8 -3.6M-83.1 -13.8 -87.0 -11.8 -91.1 -9.9M-64.8 -8.8 -69.5 -9.2 -74.2 -10.3 -78.6 -12.1 -83.1 -13.8M-86.6 -23.8 -91.6 -22.8 -96.7 -21.6M-91.2 -25.5 -95.7 -25.2 -100.3 -24.9 -104.9 -25.1M-81.9 -22.3 -86.6 -23.8 -91.2 -25.5 -95.9 -27.0 -100.3 -29.1M-76.3 -18.4 -79.2 -22.7 -82.1 -27.0 -84.9 -31.3M-81.7 -22.2 -82.2 -26.7 -82.4 -31.2 -82.9 -35.7 -83.1 -40.2M-31.6 -3.3 -26.4 -3.5 -21.2 -3.8 -16.0 -4.8M-25.6 -13.2 -26.8 -16.3 -27.7 -19.4M-24.7 -21.9 -25.5 -24.5 -26.6 -27.1M-26.1 -8.9 -25.6 -13.2 -25.2 -17.6 -24.7 -21.9M-33.4 1.6 -31.8 0.2 -30.2 -1.3M-38.0 1.3 -33.4 1.6 -28.9 1.5M-32.6 0.1 -27.7 -2.6 -22.7 -5.2M-24.3 -2.1 -20.9 -1.1 -17.5 -0.5M-20.2 -3.5 -16.5 -3.3 -12.7 -3.4M-36.9 0.8 -32.6 0.1 -28.4 -0.8 -24.3 -2.1 -20.2 -3.5M-141.6 29.1 -143.3 25.7 -144.7 22.2M-146.4 27.0 -148.3 23.7 -150.0 20.2M-131.5 31.5 -136.6 30.6 -141.6 29.1 -146.4 27.0M-135.1 34.8 -138.5 31.4 -142.0 28.1M-143.2 34.3 -144.9 31.5 -146.4 28.6M-127.2 33.3 -131.1 34.4 -135.1 34.8 -139.2 34.8 -143.2 34.3M-120.6 37.2 -122.5 33.6 -124.0 29.7 -125.2 25.8M-125.3 35.8 -130.8 36.7 -136.2 37.5M-129.9 33.9 -131.2 30.1 -132.4 26.3M-134.1 31.3 -139.7 30.7 -145.2 30.2M-115.7 38.3 -120.6 37.2 -125.3 35.8 -129.9 33.9 -134.1 31.3M-131.3 33.5 -135.4 37.4 -139.6 41.1M-135.5 33.1 -139.1 36.5 -143.0 39.5M-139.6 32.2 -143.3 34.0 -147.3 35.2 -151.3 36.2M-127.1 33.4 -131.3 33.5 -135.5 33.1 -139.6 32.2 -143.6 30.8 -147.5 29.4M-92.3 -117.6 -90.7 -119.3 -89.1 -121.0M-91.9 -112.8 -92.3 -117.6 -93.0 -122.5M-92.8 -129.5 -90.6 -131.7 -88.3 -134.0M-93.5 -115.4 -93.4 -120.1 -93.0 -124.8 -92.8 -129.5M-82.8 -92.9 -82.8 -97.5 -82.9 -102.0 -83.4 -106.5M153.4 -0.4 157.1 -2.0 160.8 -3.7 164.3 -5.6M155.6 -4.2 155.6 -9.3 155.4 -14.3 155.0 -19.4M143.6 14.4 146.5 11.0 148.9 7.3 151.1 3.4 153.4 -0.4 155.6 -4.2 157.4 -8.3M146.1 -58.4 143.0 -63.2 140.4 -68.3M144.1 0.4 141.8 -2.8 139.3 -6.0 136.7 -9.1 134.5 -12.5 132.6 -16.1 130.9 -19.7M140.0 -46.0 139.8 -50.2 139.9 -54.3 139.9 -58.5M137.6 -50.2 134.0 -52.9 130.5 -55.6 127.1 -58.5M145.4 -38.1 142.4 -41.9 140.0 -46.0 137.6 -50.2 135.4 -54.5M148.0 -82.8 150.0 -86.8 152.0 -90.9M151.5 -91.4 154.9 -92.4 158.4 -93.4M148.4 -87.9 151.5 -91.4 154.1 -95.3 156.6 -99.2M145.1 -69.0 146.5 -74.1 147.4 -79.3M146.6 -64.6 145.1 -69.0 143.4 -73.4 141.9 -77.8 140.8 -82.4M142.4 2.0 139.7 -0.4 137.1 -2.9M139.2 -6.2 135.6 -10.5 132.6 -15.1M137.8 -10.4 139.2 -13.9 140.5 -17.3M143.9 6.1 142.4 2.0 140.9 -2.2 139.2 -6.2 137.8 -10.4M141.1 6.3 140.5 2.6 140.1 -1.0M143.8 10.0 141.1 6.3 138.7 2.3 136.3 -1.6M148.5 -0.1 148.5 -4.4 148.6 -8.6 148.7 -12.9M155.3 -10.3 155.0 -14.8 155.0 -19.3 155.1 -23.9M143.9 6.6 146.1 3.2 148.5 -0.1 150.9 -3.4 153.2 -6.8 155.3 -10.3M143.9 7.5 141.3 3.2 138.7 -1.0 136.2 -5.3 133.7 -9.5M142.0 -3.7 143.9 -9.3 145.3 -15.2M144.1 0.4 142.0 -3.7 139.8 -7.7 137.6 -11.7 135.9 -16.0 134.1 -20.2 132.6 -24.5M143.7 12.6 142.4 8.7 141.1 4.9 139.9 1.0 138.7 -2.9M146.5 -88.3 145.1 -89.6 143.8 -91.0M148.1 -84.0 146.5 -88.3 145.0 -92.5M141.2 -81.0 137.6 -83.0 133.9 -85.0M146.7 -65.7 145.3 -69.5 144.0 -73.4 142.6 -77.2 141.2 -81.0 140.0 -84.9M146.3 -4.2 149.2 -6.7 151.9 -9.5M148.1 -8.0 146.6 -11.4 145.0 -14.7M144.1 -0.6 146.3 -4.2 148.1 -8.0 149.7 -11.8M156.3 -49.5 161.2 -50.6 165.9 -52.4 170.7 -54.0M145.2 -32.7 147.2 -36.2 149.5 -39.5 151.9 -42.8 154.0 -46.2 156.3 -49.5 158.2 -53.0M145.8 -52.2 148.0 -56.8 149.8 -61.6M146.5 -63.5 149.1 -67.6 151.1 -71.9 152.7 -76.5 154.4 -81.0M171.1 -71.4 170.8 -73.9 170.3 -76.3M177.4 -65.7 174.2 -68.5 171.1 -71.4M185.0 42.2 185.2 38.3 185.5 34.5M182.6 46.4 185.0 42.2 187.0 37.9 188.9 33.5 190.6 29.1M175.9 -18.9 175.6 -23.0 175.6 -27.2 175.6 -31.4M171.8 -27.9 172.7 -32.2 173.5 -36.5 174.7 -40.8M180.7 -10.2 178.3 -14.5 175.9 -18.9 174.0 -23.4 171.8 -27.9M180.2 20.5 176.4 16.3 173.0 11.8M176.7 8.5 178.5 5.2 180.3 1.9M181.9 24.3 180.2 20.5 178.8 16.5 177.6 12.5 176.7 8.5M179.3 -45.6 175.9 -49.0 172.6 -52.5 169.7 -56.3M177.4 25.7 177.5 20.7 177.7 15.6M175.2 22.4 174.8 18.2 174.1 14.1 173.5 9.9 172.9 5.8M171.0 15.5 167.1 12.3 163.6 8.7M182.1 32.2 179.7 29.0 177.4 25.7 175.2 22.4 173.1 18.9 171.0 15.5 169.1 11.9M178.4 -57.9 174.2 -61.4 170.3 -65.2M175.3 -16.1 177.7 -19.9 180.3 -23.7 182.8 -27.4M181.2 3.9 179.8 -0.1 178.3 -4.0 177.1 -7.9 176.2 -12.0 175.3 -16.1 174.2 -20.1M176.9 -8.3 176.9 -12.8 177.1 -17.3 177.3 -21.8M181.1 -0.1 179.0 -4.2 176.9 -8.3 175.3 -12.7 173.5 -16.9 171.3 -21.0M173.6 -65.2 170.9 -66.3 168.4 -67.7M178.0 -61.2 173.6 -65.2 169.5 -69.4M180.3 -19.7 182.1 -23.5 183.6 -27.4 185.1 -31.4 186.7 -35.2 188.1 -39.2M184.8 10.1 189.2 7.8 193.3 5.1M181.6 13.6 184.8 10.1 188.3 6.6 191.4 2.9M177.1 -68.5 178.7 -72.9 180.7 -77.2 182.4 -81.6M179.5 -38.9 177.9 -42.7 176.3 -46.6 174.7 -50.4M187.6 5.9 192.6 4.4 197.6 3.0M181.6 16.6 183.7 13.0 185.7 9.5 187.6 5.9 189.2 2.1 190.8 -1.7 192.2 -5.5M173.4 -10.7 171.0 -14.3 168.8 -18.1 166.6 -21.9M181.5 13.6 179.6 9.8 178.0 5.8 176.7 1.7 175.6 -2.4 174.5 -6.5 173.4 -10.7M185.2 -84.3 186.9 -88.4 188.7 -92.5 190.6 -96.5M184.3 -88.3 181.9 -91.6 179.8 -95.0 177.9 -98.6M188.4 -72.5 187.3 -76.4 186.2 -80.3 185.2 -84.3 184.3 -88.3 183.2 -92.2 182.3 -96.2M181.4 -72.5 178.3 -74.9 175.0 -77.2M179.9 -76.6 181.3 -80.1 182.9 -83.5M184.3 -64.2 182.9 -68.4 181.4 -72.5 179.9 -76.6 178.8 -80.9M197.5 -107.7 195.3 -111.5 193.4 -115.4M200.0 -98.6 198.5 -103.1 197.5 -107.7 196.9 -112.4M188.9 -68.1 194.3 -68.1 199.6 -68.6M185.3 -66.1 188.9 -68.1 192.4 -70.3 196.0 -72.5 199.6 -74.6M201.9 -103.7 204.8 -106.7 207.7 -109.7M157.7 -40.7 156.5 -44.4 155.5 -48.2M157.2 -27.4 157.3 -31.8 157.5 -36.2 157.7 -40.7 158.1 -45.1M144.7 -58.1 141.6 -61.4 138.5 -64.7 135.3 -68.0M148.3 -50.0 149.8 -55.0 150.9 -59.9 152.1 -64.9M145.0 -57.4 141.2 -60.7 137.6 -64.3 134.1 -68.1M180.0 37.1 182.5 33.2 184.9 29.4M182.1 29.0 186.6 25.2 190.9 21.3M176.2 49.0 177.4 45.0 178.7 41.0 180.0 37.1 181.1 33.0 182.1 29.0M148.8 -49.0 145.2 -50.4 141.5 -51.7M137.9 -65.5 136.8 -66.8 135.9 -68.1M141.9 -64.2 137.9 -65.5 134.2 -67.2M151.5 -38.4 151.6 -41.6 151.8 -44.8M154.7 -35.6 151.5 -38.4 148.1 -41.1 145.1 -44.2M172.2 18.6 176.3 17.1 180.5 15.9 184.7 14.7M175.1 10.6 173.7 6.8 172.4 2.9 171.3 -1.1 170.6 -5.1M177.0 6.8 180.2 3.8 183.2 0.5 186.1 -2.8M170.5 22.5 172.2 18.6 173.6 14.6 175.1 10.6 177.0 6.8 178.4 2.8 179.8 -1.1M177.4 37.0 180.2 34.4 182.6 31.6M174.5 41.2 177.4 37.0 179.8 32.5 182.1 27.9M159.4 -24.4 156.2 -28.7 153.1 -33.1M159.3 -28.6 162.5 -31.4 165.5 -34.4M159.3 -20.1 159.4 -24.4 159.3 -28.6 159.3 -32.9 159.5 -37.1M210.1 -56.5 207.3 -58.9 204.4 -61.2M212.6 -11.1 206.8 -11.9 201.0 -13.0M206.9 -22.2 207.3 -26.5 207.5 -30.8M215.0 -7.7 212.6 -11.1 210.4 -14.7 208.4 -18.3 206.9 -22.2 205.2 -26.0M207.9 -70.9 205.8 -74.8 203.7 -78.6M203.7 -23.0 202.4 -27.6 201.0 -32.2M214.6 -12.3 210.8 -15.7 207.1 -19.2 203.7 -23.0M222.2 24.1 225.4 21.8 228.6 19.5M218.0 32.3 220.2 28.3 222.2 24.1 223.9 19.8 225.5 15.5M223.6 7.4 227.5 5.9 231.3 4.0 234.8 1.6M217.0 18.3 219.2 14.7 221.3 11.0 223.6 7.4 225.7 3.7 227.9 0.1 230.0 -3.6M212.3 -23.2 213.3 -28.4 214.4 -33.7M209.4 -33.1 205.2 -35.7 201.0 -38.2M214.1 -18.3 212.3 -23.2 210.7 -28.1 209.4 -33.1M212.5 -36.9 209.5 -40.1 206.6 -43.4 203.7 -46.7 201.3 -50.4M208.2 -69.1 209.1 -72.5 210.1 -75.8M217.7 9.5 214.5 5.7 211.4 2.0M216.7 14.4 217.7 9.5 218.3 4.4 219.1 -0.6M210.7 -53.0 207.9 -58.1 205.4 -63.3M215.4 -2.1 213.1 -6.2 210.9 -10.2 209.0 -14.5M104.3 -52.9 101.9 -56.6 99.5 -60.4 96.9 -64.0M120.0 32.4 122.7 29.2 125.2 25.7M120.9 21.9 122.2 18.8 123.3 15.6M118.9 37.5 120.0 32.4 120.5 27.1 120.9 21.9M119.8 45.9 116.6 43.0 113.8 39.7 110.9 36.5 108.1 33.2 105.2 30.0M105.6 -23.6 106.6 -29.2 107.7 -34.8M111.8 -15.8 108.7 -19.7 105.6 -23.6 102.8 -27.7 99.8 -31.6M104.8 -40.8 102.0 -44.1 99.1 -47.3M108.6 -32.6 106.5 -36.6 104.8 -40.8 102.8 -44.9 100.7 -48.9M115.2 7.2 117.0 1.8 118.7 -3.6M104.5 -23.4 103.9 -26.3 103.4 -29.2M111.5 -17.7 107.8 -20.3 104.5 -23.4 101.4 -26.7M116.8 -25.7 120.0 -27.7 123.2 -29.6M112.0 -14.5 113.4 -18.4 115.0 -22.1 116.8 -25.7 118.7 -29.3M105.4 -47.6 106.5 -51.3 107.5 -55.0M108.3 -16.2 106.3 -18.2 104.4 -20.2M113.4 -5.0 111.5 -8.7 109.8 -12.4 108.3 -16.2M173.5 -87.4 173.2 -90.1 172.6 -92.8M169.8 -80.3 171.7 -83.8 173.5 -87.4M169.5 -52.6 172.3 -55.8 174.9 -59.2 177.7 -62.6M161.8 -92.6 160.1 -96.6 158.4 -100.7M169.3 -86.8 165.5 -89.6 161.8 -92.6 158.4 -95.9M167.7 -105.6 170.1 -108.7 172.7 -111.7M164.4 -61.0 161.3 -63.0 158.1 -65.0M169.4 -51.5 166.9 -56.2 164.4 -61.0M169.3 -49.9 167.1 -53.5 164.8 -57.1 162.6 -60.6 160.4 -64.3M165.3 -36.9 164.8 -40.4 164.4 -44.0M162.8 -40.4 160.1 -41.4 157.6 -42.6M168.1 -33.7 165.3 -36.9 162.8 -40.4 160.7 -44.1M174.5 -65.3 177.8 -67.7 181.2 -70.0 184.5 -72.5M169.8 -56.6 172.0 -61.0 174.5 -65.3 177.1 -69.5 179.7 -73.7M147.5 4.9 143.1 3.1 138.9 1.1 134.8 -1.1M156.3 24.2 154.5 20.4 152.9 16.4 151.3 12.5 149.5 8.6 147.5 4.9M161.2 32.7 165.2 31.1 168.9 29.0M162.9 28.9 165.6 25.9 168.5 22.9M166.0 21.4 170.1 19.9 174.0 18.2M157.2 39.8 159.3 36.3 161.2 32.7 162.9 28.9 164.3 25.1 166.0 21.4M153.8 16.5 154.4 12.4 154.7 8.3M156.3 24.1 155.0 20.3 153.8 16.5 153.0 12.6 152.4 8.6M151.9 36.5 147.2 34.6 142.6 32.5 138.0 30.5M157.4 44.3 154.7 40.4 151.9 36.5 149.3 32.4 146.6 28.5 144.0 24.5M149.2 -39.7 145.7 -40.8 142.1 -41.8M152.5 -36.9 149.2 -39.7 146.0 -42.6 143.0 -45.6M150.1 -38.4 147.7 -38.7 145.2 -38.9M152.6 -35.6 150.1 -38.4 148.0 -41.5M152.8 14.9 149.2 12.5 145.6 10.2M156.2 23.3 154.3 19.2 152.8 14.9 151.1 10.7M153.3 35.5 148.9 32.1 144.8 28.3M157.3 42.8 155.3 39.1 153.3 35.5 151.5 31.7 149.8 27.9 147.8 24.2M154.4 -10.2 151.8 -13.2 149.5 -16.3M155.1 1.9 152.4 -3.0 149.7 -7.9M196.1 0.3 197.8 -4.2 199.3 -8.7M190.4 -20.7 185.8 -22.7 181.2 -24.8M188.6 -24.7 190.9 -29.1 193.0 -33.6M195.6 -8.6 193.9 -12.7 192.2 -16.7 190.4 -20.7 188.6 -24.7M196.0 -1.6 197.4 -5.6 198.5 -9.7M194.0 35.3 194.6 30.3 194.6 25.3M189.8 28.0 186.5 26.4 183.3 24.8M198.4 42.6 196.3 38.9 194.0 35.3 191.8 31.7 189.8 28.0M183.3 -47.1 184.0 -50.3 184.5 -53.6M192.0 -34.4 189.2 -38.7 186.2 -42.9 183.3 -47.1M191.0 10.8 185.7 7.9 180.9 4.4M188.0 7.3 182.2 6.3 176.5 5.3M197.0 17.4 194.0 14.1 191.0 10.8 188.0 7.3 185.2 3.8M192.5 13.9 192.5 10.7 192.4 7.4M197.2 20.8 194.9 17.3 192.5 13.9 189.9 10.6M195.2 -13.8 193.5 -17.6 191.6 -21.4 189.9 -25.2M194.7 -16.6 193.0 -20.3 191.1 -23.9 189.6 -27.7M94.9 31.7 94.9 27.1 95.1 22.6M106.2 42.0 102.5 38.5 98.6 35.2 94.9 31.7M101.8 25.9 102.3 21.8 102.4 17.7M104.5 30.0 101.8 25.9 99.2 21.8 96.7 17.6M104.6 30.7 100.6 27.8 96.9 24.5M100.0 1.0 96.5 -3.6 93.6 -8.5M111.4 9.3 115.9 6.9 120.2 4.2M114.0 5.0 113.8 0.5 113.7 -4.0M103.3 21.6 106.2 17.7 108.8 13.5 111.4 9.3 114.0 5.0M85.0 -40.9 85.9 -44.3 86.9 -47.6M91.7 -32.3 88.2 -36.5 85.0 -40.9M101.0 5.8 97.7 3.1 94.4 0.4M101.1 6.6 98.2 1.6 95.3 -3.4M196.0 -52.4 195.4 -57.0 194.6 -61.6M185.9 -35.6 186.7 -39.8 187.1 -44.0 187.8 -48.2M192.1 -45.6 190.4 -50.8 189.1 -56.1M202.4 -56.6 205.3 -57.8 208.1 -58.9M194.6 -50.0 198.4 -53.4 202.4 -56.6M191.4 -37.0 195.6 -37.1 199.8 -37.9M180.0 -28.4 183.9 -31.0 187.8 -33.8 191.4 -37.0M136.3 -3.9 137.4 -8.0 138.2 -12.1 139.2 -16.1 140.1 -20.2M158.2 -25.9 161.4 -26.9 164.6 -27.9M162.7 -26.6 166.8 -24.1 171.1 -22.0M172.0 -29.2 174.0 -33.8 176.3 -38.2M158.0 -25.8 162.7 -26.6 167.5 -27.6 172.0 -29.2M162.0 -28.5 162.6 -32.0 163.1 -35.6M-151.7 31.0 -156.0 28.5 -160.3 25.9M-140.4 43.4 -143.5 40.6 -146.5 37.6 -149.2 34.4 -151.7 31.0M-134.6 41.1 -134.4 36.9 -134.5 32.7 -134.4 28.6M-132.2 37.6 -127.8 35.4 -123.8 32.6 -119.8 29.8M-139.8 47.9 -137.2 44.5 -134.6 41.1 -132.2 37.6 -129.9 34.0 -127.6 30.5M-147.9 42.1 -153.5 42.4 -159.0 42.0M-139.4 50.6 -142.2 47.7 -145.1 45.0 -147.9 42.1 -150.8 39.2 -153.7 36.5M-149.1 9.7 -147.4 4.2 -146.3 -1.5M-152.5 2.5 -150.3 -2.0 -148.4 -6.5M-143.7 20.5 -145.3 16.9 -147.2 13.3 -149.1 9.7 -150.8 6.1 -152.5 2.5M-156.1 -12.0 -159.7 -15.1 -163.3 -18.2 -166.6 -21.6M-150.1 -15.0 -150.8 -17.7 -151.5 -20.3M-152.3 -5.9 -151.2 -10.5 -150.1 -15.0M-143.2 41.4 -141.0 37.6 -139.0 33.7M-139.3 51.2 -141.4 46.4 -143.2 41.4 -144.9 36.4M-38.5 42.3 -37.5 36.8 -36.8 31.1M-35.6 39.3 -34.5 34.3 -33.5 29.2M-32.9 36.1 -27.4 34.6 -21.9 33.2M-30.1 33.0 -24.5 31.2 -19.1 28.8M-45.0 47.7 -41.6 45.2 -38.5 42.3 -35.6 39.3 -32.9 36.1 -30.1 33.0M-47.3 46.4 -44.6 41.1 -42.4 35.6M-49.5 37.1 -53.4 33.7 -57.2 30.3M-45.5 50.8 -47.3 46.4 -48.6 41.8 -49.5 37.1 -50.2 32.4 -50.5 27.6M-47.9 27.4 -47.2 23.2 -46.8 18.9 -46.3 14.7M-44.2 43.0 -45.1 39.1 -46.3 35.3 -47.3 31.4 -47.9 27.4 -48.8 23.5M-37.3 -7.6 -38.5 -10.4 -39.9 -13.1M-37.2 -12.6 -38.7 -15.9 -40.4 -19.2M-36.5 2.2 -37.2 -2.7 -37.3 -7.6 -37.2 -12.6M-42.6 21.9 -47.7 19.3 -52.8 16.7M-43.9 18.1 -47.1 15.5 -50.3 13.0M-41.3 25.7 -42.6 21.9 -43.9 18.1 -44.8 14.2 -45.8 10.3 -46.8 6.4M-31.1 -9.2 -29.8 -13.7 -29.0 -18.3M-34.5 -5.8 -31.1 -9.2 -28.2 -13.1 -25.4 -17.0" stroke-width="0.75"/><path d="M69.1 -160.0 91.7 -179.4 114.8 -200.3M57.6 -61.3 27.1 -83.9 0.4 -114.4 -18.5 -162.1M-170.7 -238.6 -158.4 -176.9 -146.0 -119.3 -133.7 -69.9 -121.3 -28.8 -113.1 4.1 -104.9 61.7" stroke-width="1.50"/><path d="M65.4 -80.2 103.2 -102.8 133.7 -118.5 166.2 -139.0M-55.5 -178.9 -59.6 -139.9 -67.9 -94.6 -76.1 -53.5 -80.2 -4.1 -82.3 61.7" stroke-width="1.75"/></g><g fill-opacity=".5" stroke="none"><ellipse cx="212.8" cy="-187.5" rx="2.4" ry="1.1" transform="rotate(6 212.8 -187.5)"/><ellipse cx="208.9" cy="-210.2" rx="1.5" ry="0.7" transform="rotate(20 208.9 -210.2)"/><ellipse cx="211.4" cy="-193.7" rx="3.9" ry="1.8" transform="rotate(-2 211.4 -193.7)"/><ellipse cx="217.7" cy="-220.3" rx="3.1" ry="1.4" transform="rotate(-21 217.7 -220.3)"/><ellipse cx="201.7" cy="-222.9" rx="2.8" ry="1.2" transform="rotate(14 201.7 -222.9)"/><ellipse cx="209.9" cy="-211.2" rx="3.4" ry="1.5" transform="rotate(5 209.9 -211.2)"/><ellipse cx="210.9" cy="-201.6" rx="3.6" ry="1.6" transform="rotate(-2 210.9 -201.6)"/><ellipse cx="208.8" cy="-228.4" rx="3.2" ry="1.4" transform="rotate(25 208.8 -228.4)"/><ellipse cx="200.2" cy="-192.1" rx="2.6" ry="1.1" transform="rotate(26 200.2 -192.1)"/><ellipse cx="215.6" cy="-211.0" rx="1.8" ry="0.8" transform="rotate(-17 215.6 -211.0)"/><ellipse cx="222.5" cy="-209.2" rx="3.0" ry="1.3" transform="rotate(-12 222.5 -209.2)"/><ellipse cx="201.6" cy="-206.4" rx="2.3" ry="1.0" transform="rotate(5 201.6 -206.4)"/><ellipse cx="198.3" cy="-217.5" rx="3.2" ry="1.4" transform="rotate(26 198.3 -217.5)"/><ellipse cx="222.0" cy="-225.0" rx="3.1" ry="1.4" transform="rotate(-20 222.0 -225.0)"/><ellipse cx="222.2" cy="-224.3" rx="3.7" ry="1.7" transform="rotate(4 222.2 -224.3)"/><ellipse cx="210.1" cy="-216.7" rx="3.5" ry="1.6" transform="rotate(4 210.1 -216.7)"/><ellipse cx="210.9" cy="-199.6" rx="3.6" ry="1.6" transform="rotate(29 210.9 -199.6)"/><ellipse cx="224.4" cy="-194.0" rx="2.5" ry="1.1" transform="rotate(-21 224.4 -194.0)"/><ellipse cx="207.9" cy="-184.9" rx="3.6" ry="1.6" transform="rotate(-27 207.9 -184.9)"/><ellipse cx="209.2" cy="-209.1" rx="3.3" ry="1.4" transform="rotate(-10 209.2 -209.1)"/><ellipse cx="223.8" cy="-222.3" rx="2.7" ry="1.2" transform="rotate(30 223.8 -222.3)"/><ellipse cx="210.2" cy="-199.3" rx="3.0" ry="1.3" transform="rotate(-28 210.2 -199.3)"/><ellipse cx="215.3" cy="-190.8" rx="3.0" ry="1.3" transform="rotate(-21 215.3 -190.8)"/><ellipse cx="226.6" cy="-199.6" rx="2.2" ry="1.0" transform="rotate(28 226.6 -199.6)"/><ellipse cx="219.9" cy="-214.8" rx="2.6" ry="1.2" transform="rotate(1 219.9 -214.8)"/><ellipse cx="204.0" cy="-220.6" rx="2.8" ry="1.3" transform="rotate(7 204.0 -220.6)"/><ellipse cx="222.8" cy="-212.1" rx="2.5" ry="1.1" transform="rotate(13 222.8 -212.1)"/><ellipse cx="212.5" cy="-192.2" rx="3.9" ry="1.7" transform="rotate(1 212.5 -192.2)"/><ellipse cx="210.2" cy="-206.5" rx="2.5" ry="1.1" transform="rotate(5 210.2 -206.5)"/><ellipse cx="224.7" cy="-203.2" rx="3.0" ry="1.3" transform="rotate(-26 224.7 -203.2)"/><ellipse cx="204.0" cy="-217.8" rx="3.2" ry="1.4" transform="rotate(-9 204.0 -217.8)"/><ellipse cx="208.1" cy="-226.1" rx="1.5" ry="0.7" transform="rotate(-26 208.1 -226.1)"/><ellipse cx="204.6" cy="-227.3" rx="2.1" ry="0.9" transform="rotate(-3 204.6 -227.3)"/><ellipse cx="204.1" cy="-213.4" rx="2.4" ry="1.0" transform="rotate(-11 204.1 -213.4)"/><ellipse cx="203.2" cy="-191.7" rx="2.2" ry="1.0" transform="rotate(-7 203.2 -191.7)"/><ellipse cx="212.2" cy="-209.7" rx="2.9" ry="1.3" transform="rotate(14 212.2 -209.7)"/><ellipse cx="209.0" cy="-194.9" rx="3.5" ry="1.5" transform="rotate(-16 209.0 -194.9)"/><ellipse cx="216.0" cy="-190.6" rx="3.2" ry="1.4" transform="rotate(-24 216.0 -190.6)"/><ellipse cx="207.7" cy="-192.9" rx="3.5" ry="1.6" transform="rotate(-4 207.7 -192.9)"/><ellipse cx="216.0" cy="-213.7" rx="2.3" ry="1.0" transform="rotate(9 216.0 -213.7)"/><ellipse cx="220.1" cy="-216.6" rx="2.0" ry="0.9" transform="rotate(-23 220.1 -216.6)"/><ellipse cx="204.8" cy="-207.7" rx="3.5" ry="1.5" transform="rotate(20 204.8 -207.7)"/><ellipse cx="215.4" cy="-193.8" rx="3.5" ry="1.5" transform="rotate(9 215.4 -193.8)"/><ellipse cx="215.2" cy="-219.3" rx="1.8" ry="0.8" transform="rotate(-12 215.2 -219.3)"/><ellipse cx="214.2" cy="-218.0" rx="2.3" ry="1.0" transform="rotate(-5 214.2 -218.0)"/><ellipse cx="202.6" cy="-198.0" rx="3.8" ry="1.7" transform="rotate(-21 202.6 -198.0)"/><ellipse cx="227.8" cy="-205.0" rx="3.7" ry="1.6" transform="rotate(29 227.8 -205.0)"/><ellipse cx="197.2" cy="-196.0" rx="3.8" ry="1.7" transform="rotate(-17 197.2 -196.0)"/><ellipse cx="211.4" cy="-228.2" rx="3.1" ry="1.4" transform="rotate(1 211.4 -228.2)"/><ellipse cx="209.5" cy="-191.7" rx="2.0" ry="0.9" transform="rotate(-26 209.5 -191.7)"/><ellipse cx="204.4" cy="-212.7" rx="3.5" ry="1.5" transform="rotate(-27 204.4 -212.7)"/><ellipse cx="223.1" cy="-217.4" rx="3.8" ry="1.7" transform="rotate(24 223.1 -217.4)"/><ellipse cx="221.9" cy="-216.7" rx="1.5" ry="0.7" transform="rotate(15 221.9 -216.7)"/><ellipse cx="216.1" cy="-193.8" rx="3.1" ry="1.4" transform="rotate(1 216.1 -193.8)"/><ellipse cx="198.2" cy="-193.3" rx="3.0" ry="1.3" transform="rotate(-10 198.2 -193.3)"/><ellipse cx="211.6" cy="-182.8" rx="2.6" ry="1.2" transform="rotate(17 211.6 -182.8)"/><ellipse cx="207.5" cy="-196.9" rx="2.8" ry="1.2" transform="rotate(19 207.5 -196.9)"/><ellipse cx="218.8" cy="-186.3" rx="3.8" ry="1.7" transform="rotate(18 218.8 -186.3)"/><ellipse cx="212.5" cy="-207.6" rx="3.0" ry="1.3" transform="rotate(22 212.5 -207.6)"/><ellipse cx="220.0" cy="-201.7" rx="2.1" ry="0.9" transform="rotate(2 220.0 -201.7)"/><ellipse cx="201.8" cy="-197.8" rx="3.4" ry="1.5" transform="rotate(-30 201.8 -197.8)"/><ellipse cx="217.4" cy="-202.7" rx="1.8" ry="0.8" transform="rotate(-26 217.4 -202.7)"/><ellipse cx="226.9" cy="-209.3" rx="1.7" ry="0.7" transform="rotate(0 226.9 -209.3)"/><ellipse cx="208.1" cy="-193.0" rx="2.3" ry="1.0" transform="rotate(9 208.1 -193.0)"/><ellipse cx="203.4" cy="-213.4" rx="1.9" ry="0.9" transform="rotate(-10 203.4 -213.4)"/><ellipse cx="220.6" cy="-192.8" rx="3.2" ry="1.4" transform="rotate(-7 220.6 -192.8)"/><ellipse cx="217.9" cy="-200.7" rx="2.4" ry="1.1" transform="rotate(6 217.9 -200.7)"/><ellipse cx="213.9" cy="-220.6" rx="3.5" ry="1.5" transform="rotate(7 213.9 -220.6)"/><ellipse cx="202.7" cy="-199.4" rx="2.7" ry="1.2" transform="rotate(12 202.7 -199.4)"/><ellipse cx="199.8" cy="-195.8" rx="2.6" ry="1.2" transform="rotate(-15 199.8 -195.8)"/><ellipse cx="198.5" cy="-210.3" rx="1.6" ry="0.7" transform="rotate(-5 198.5 -210.3)"/><ellipse cx="198.1" cy="-195.3" rx="3.8" ry="1.7" transform="rotate(-8 198.1 -195.3)"/><ellipse cx="223.6" cy="-218.8" rx="2.1" ry="0.9" transform="rotate(-2 223.6 -218.8)"/><ellipse cx="222.5" cy="-190.1" rx="3.1" ry="1.4" transform="rotate(23 222.5 -190.1)"/><ellipse cx="215.4" cy="-225.1" rx="3.3" ry="1.5" transform="rotate(4 215.4 -225.1)"/><ellipse cx="221.9" cy="-194.3" rx="1.5" ry="0.6" transform="rotate(-21 221.9 -194.3)"/><ellipse cx="212.4" cy="-210.8" rx="1.7" ry="0.7" transform="rotate(-24 212.4 -210.8)"/><ellipse cx="216.9" cy="-212.8" rx="1.5" ry="0.7" transform="rotate(20 216.9 -212.8)"/><ellipse cx="222.8" cy="-190.0" rx="3.1" ry="1.4" transform="rotate(20 222.8 -190.0)"/><ellipse cx="223.8" cy="-211.2" rx="3.5" ry="1.5" transform="rotate(-28 223.8 -211.2)"/><ellipse cx="213.1" cy="-223.2" rx="3.2" ry="1.4" transform="rotate(-24 213.1 -223.2)"/><ellipse cx="211.7" cy="-229.5" rx="1.6" ry="0.7" transform="rotate(-11 211.7 -229.5)"/><ellipse cx="198.1" cy="-214.5" rx="2.1" ry="0.9" transform="rotate(-19 198.1 -214.5)"/><ellipse cx="211.8" cy="-186.3" rx="3.3" ry="1.5" transform="rotate(-6 211.8 -186.3)"/><ellipse cx="204.9" cy="-194.2" rx="2.3" ry="1.0" transform="rotate(-5 204.9 -194.2)"/><ellipse cx="221.9" cy="-197.0" rx="3.9" ry="1.7" transform="rotate(-5 221.9 -197.0)"/><ellipse cx="211.7" cy="-215.6" rx="3.2" ry="1.4" transform="rotate(15 211.7 -215.6)"/><ellipse cx="206.4" cy="-221.4" rx="2.7" ry="1.2" transform="rotate(9 206.4 -221.4)"/><ellipse cx="216.9" cy="-211.4" rx="1.7" ry="0.7" transform="rotate(15 216.9 -211.4)"/><ellipse cx="222.1" cy="-214.6" rx="2.6" ry="1.1" transform="rotate(13 222.1 -214.6)"/><ellipse cx="215.2" cy="-193.9" rx="1.9" ry="0.9" transform="rotate(5 215.2 -193.9)"/><ellipse cx="208.7" cy="-194.8" rx="3.2" ry="1.4" transform="rotate(27 208.7 -194.8)"/><ellipse cx="207.9" cy="-185.8" rx="2.5" ry="1.1" transform="rotate(21 207.9 -185.8)"/><ellipse cx="204.5" cy="-212.1" rx="2.0" ry="0.9" transform="rotate(-29 204.5 -212.1)"/><ellipse cx="201.8" cy="-203.7" rx="1.9" ry="0.8" transform="rotate(-8 201.8 -203.7)"/><ellipse cx="205.5" cy="-186.1" rx="1.8" ry="0.8" transform="rotate(29 205.5 -186.1)"/><ellipse cx="199.2" cy="-203.2" rx="2.6" ry="1.2" transform="rotate(20 199.2 -203.2)"/><ellipse cx="217.2" cy="-222.3" rx="2.7" ry="1.2" transform="rotate(13 217.2 -222.3)"/><ellipse cx="218.3" cy="-217.9" rx="3.3" ry="1.5" transform="rotate(28 218.3 -217.9)"/><ellipse cx="204.1" cy="-203.3" rx="2.0" ry="0.9" transform="rotate(13 204.1 -203.3)"/><ellipse cx="204.6" cy="-227.2" rx="3.6" ry="1.6" transform="rotate(-15 204.6 -227.2)"/><ellipse cx="214.9" cy="-194.0" rx="1.9" ry="0.8" transform="rotate(12 214.9 -194.0)"/><ellipse cx="221.7" cy="-223.8" rx="2.1" ry="0.9" transform="rotate(22 221.7 -223.8)"/><ellipse cx="207.7" cy="-190.9" rx="3.3" ry="1.5" transform="rotate(-25 207.7 -190.9)"/><ellipse cx="224.4" cy="-193.3" rx="2.2" ry="1.0" transform="rotate(-9 224.4 -193.3)"/><ellipse cx="200.0" cy="-215.5" rx="1.5" ry="0.6" transform="rotate(-10 200.0 -215.5)"/><ellipse cx="201.3" cy="-199.0" rx="2.0" ry="0.9" transform="rotate(5 201.3 -199.0)"/><ellipse cx="221.7" cy="-210.0" rx="2.8" ry="1.2" transform="rotate(-23 221.7 -210.0)"/><ellipse cx="209.8" cy="-185.8" rx="1.7" ry="0.8" transform="rotate(23 209.8 -185.8)"/><ellipse cx="216.2" cy="-209.8" rx="3.8" ry="1.7" transform="rotate(-8 216.2 -209.8)"/><ellipse cx="213.9" cy="-226.9" rx="2.2" ry="1.0" transform="rotate(11 213.9 -226.9)"/><ellipse cx="203.5" cy="-223.9" rx="2.1" ry="0.9" transform="rotate(15 203.5 -223.9)"/><ellipse cx="224.9" cy="-210.5" rx="2.8" ry="1.2" transform="rotate(-23 224.9 -210.5)"/><ellipse cx="202.1" cy="-205.1" rx="3.2" ry="1.4" transform="rotate(11 202.1 -205.1)"/><ellipse cx="205.4" cy="-209.9" rx="3.1" ry="1.4" transform="rotate(8 205.4 -209.9)"/><ellipse cx="218.5" cy="-184.7" rx="3.1" ry="1.4" transform="rotate(-23 218.5 -184.7)"/><ellipse cx="217.5" cy="-209.5" rx="2.3" ry="1.0" transform="rotate(13 217.5 -209.5)"/><ellipse cx="201.8" cy="-216.2" rx="3.1" ry="1.4" transform="rotate(-3 201.8 -216.2)"/><ellipse cx="209.2" cy="-196.1" rx="1.6" ry="0.7" transform="rotate(13 209.2 -196.1)"/><ellipse cx="212.2" cy="-223.9" rx="3.3" ry="1.5" transform="rotate(-8 212.2 -223.9)"/><ellipse cx="210.8" cy="-190.5" rx="3.6" ry="1.6" transform="rotate(-27 210.8 -190.5)"/><ellipse cx="203.7" cy="-206.0" rx="3.4" ry="1.5" transform="rotate(-9 203.7 -206.0)"/><ellipse cx="206.6" cy="-192.1" rx="2.8" ry="1.2" transform="rotate(16 206.6 -192.1)"/><ellipse cx="202.7" cy="-187.5" rx="1.7" ry="0.8" transform="rotate(-14 202.7 -187.5)"/><ellipse cx="216.3" cy="-200.8" rx="3.4" ry="1.5" transform="rotate(14 216.3 -200.8)"/><ellipse cx="214.7" cy="-195.8" rx="2.5" ry="1.1" transform="rotate(15 214.7 -195.8)"/><ellipse cx="217.6" cy="-225.2" rx="2.9" ry="1.3" transform="rotate(-21 217.6 -225.2)"/><ellipse cx="206.0" cy="-199.2" rx="2.8" ry="1.2" transform="rotate(4 206.0 -199.2)"/><ellipse cx="214.3" cy="-193.9" rx="3.4" ry="1.5" transform="rotate(-28 214.3 -193.9)"/><ellipse cx="216.9" cy="-227.7" rx="3.8" ry="1.7" transform="rotate(-7 216.9 -227.7)"/><ellipse cx="200.0" cy="-211.8" rx="3.0" ry="1.3" transform="rotate(29 200.0 -211.8)"/><ellipse cx="208.4" cy="-218.1" rx="3.6" ry="1.6" transform="rotate(-1 208.4 -218.1)"/><ellipse cx="200.6" cy="-218.2" rx="1.4" ry="0.6" transform="rotate(16 200.6 -218.2)"/><ellipse cx="205.8" cy="-220.4" rx="2.8" ry="1.2" transform="rotate(-2 205.8 -220.4)"/><ellipse cx="216.0" cy="-188.8" rx="1.5" ry="0.7" transform="rotate(0 216.0 -188.8)"/><ellipse cx="205.2" cy="-218.7" rx="2.9" ry="1.3" transform="rotate(28 205.2 -218.7)"/><ellipse cx="216.6" cy="-211.4" rx="3.4" ry="1.5" transform="rotate(7 216.6 -211.4)"/><ellipse cx="221.2" cy="-201.0" rx="2.0" ry="0.9" transform="rotate(-25 221.2 -201.0)"/><ellipse cx="196.5" cy="-211.4" rx="2.3" ry="1.0" transform="rotate(22 196.5 -211.4)"/><ellipse cx="209.8" cy="-214.2" rx="3.6" ry="1.6" transform="rotate(6 209.8 -214.2)"/><ellipse cx="224.3" cy="-214.9" rx="3.3" ry="1.5" transform="rotate(-9 224.3 -214.9)"/><ellipse cx="217.4" cy="-228.0" rx="3.6" ry="1.6" transform="rotate(-4 217.4 -228.0)"/><ellipse cx="212.3" cy="-222.8" rx="1.7" ry="0.8" transform="rotate(-27 212.3 -222.8)"/><ellipse cx="218.3" cy="-200.5" rx="1.8" ry="0.8" transform="rotate(-0 218.3 -200.5)"/><ellipse cx="208.1" cy="-222.9" rx="2.5" ry="1.1" transform="rotate(9 208.1 -222.9)"/><ellipse cx="208.1" cy="-189.8" rx="3.3" ry="1.5" transform="rotate(-6 208.1 -189.8)"/><ellipse cx="218.4" cy="-184.5" rx="3.3" ry="1.4" transform="rotate(-8 218.4 -184.5)"/><ellipse cx="203.6" cy="-192.7" rx="2.9" ry="1.3" transform="rotate(-17 203.6 -192.7)"/><ellipse cx="219.4" cy="-205.5" rx="3.4" ry="1.5" transform="rotate(-21 219.4 -205.5)"/><ellipse cx="204.8" cy="-203.0" rx="2.0" ry="0.9" transform="rotate(-20 204.8 -203.0)"/><ellipse cx="206.3" cy="-199.9" rx="1.5" ry="0.7" transform="rotate(-23 206.3 -199.9)"/><ellipse cx="217.5" cy="-190.6" rx="1.6" ry="0.7" transform="rotate(-29 217.5 -190.6)"/><ellipse cx="201.9" cy="-200.6" rx="3.2" ry="1.4" transform="rotate(-27 201.9 -200.6)"/><ellipse cx="203.3" cy="-196.8" rx="1.5" ry="0.7" transform="rotate(28 203.3 -196.8)"/><ellipse cx="212.8" cy="-198.2" rx="2.6" ry="1.2" transform="rotate(-20 212.8 -198.2)"/><ellipse cx="204.9" cy="-215.8" rx="1.8" ry="0.8" transform="rotate(-27 204.9 -215.8)"/><ellipse cx="210.6" cy="-218.5" rx="3.4" ry="1.5" transform="rotate(-2 210.6 -218.5)"/><ellipse cx="220.1" cy="-211.2" rx="2.1" ry="0.9" transform="rotate(-14 220.1 -211.2)"/><ellipse cx="217.0" cy="-223.7" rx="2.3" ry="1.0" transform="rotate(-24 217.0 -223.7)"/><ellipse cx="205.2" cy="-227.8" rx="2.9" ry="1.3" transform="rotate(-30 205.2 -227.8)"/><ellipse cx="216.7" cy="-204.3" rx="1.9" ry="0.8" transform="rotate(-28 216.7 -204.3)"/><ellipse cx="224.4" cy="-199.0" rx="3.7" ry="1.6" transform="rotate(-18 224.4 -199.0)"/><ellipse cx="223.1" cy="-208.5" rx="3.5" ry="1.5" transform="rotate(25 223.1 -208.5)"/><ellipse cx="214.7" cy="-207.4" rx="2.2" ry="1.0" transform="rotate(6 214.7 -207.4)"/><ellipse cx="216.4" cy="-208.1" rx="2.2" ry="1.0" transform="rotate(21 216.4 -208.1)"/><ellipse cx="219.6" cy="-195.5" rx="2.3" ry="1.0" transform="rotate(11 219.6 -195.5)"/><ellipse cx="218.0" cy="-210.2" rx="3.3" ry="1.5" transform="rotate(14 218.0 -210.2)"/><ellipse cx="218.1" cy="-221.4" rx="3.8" ry="1.7" transform="rotate(-8 218.1 -221.4)"/><ellipse cx="205.1" cy="-199.6" rx="3.4" ry="1.5" transform="rotate(-1 205.1 -199.6)"/><ellipse cx="211.0" cy="-195.6" rx="3.3" ry="1.4" transform="rotate(6 211.0 -195.6)"/><ellipse cx="209.3" cy="-220.6" rx="2.7" ry="1.2" transform="rotate(-21 209.3 -220.6)"/><ellipse cx="211.2" cy="-209.3" rx="2.6" ry="1.2" transform="rotate(16 211.2 -209.3)"/><ellipse cx="209.6" cy="-212.6" rx="2.0" ry="0.9" transform="rotate(21 209.6 -212.6)"/><ellipse cx="202.2" cy="-223.7" rx="3.6" ry="1.6" transform="rotate(-3 202.2 -223.7)"/><ellipse cx="223.1" cy="-218.4" rx="2.3" ry="1.0" transform="rotate(-8 223.1 -218.4)"/><ellipse cx="221.2" cy="-198.9" rx="3.8" ry="1.7" transform="rotate(-24 221.2 -198.9)"/><ellipse cx="206.9" cy="-209.1" rx="1.6" ry="0.7" transform="rotate(9 206.9 -209.1)"/><ellipse cx="212.1" cy="-200.2" rx="1.8" ry="0.8" transform="rotate(9 212.1 -200.2)"/><ellipse cx="210.3" cy="-207.0" rx="2.0" ry="0.9" transform="rotate(28 210.3 -207.0)"/><ellipse cx="214.2" cy="-187.5" rx="2.5" ry="1.1" transform="rotate(17 214.2 -187.5)"/><ellipse cx="200.3" cy="-219.0" rx="2.8" ry="1.2" transform="rotate(-19 200.3 -219.0)"/><ellipse cx="213.9" cy="-199.4" rx="3.5" ry="1.6" transform="rotate(-23 213.9 -199.4)"/><ellipse cx="227.8" cy="-202.0" rx="1.9" ry="0.9" transform="rotate(24 227.8 -202.0)"/><ellipse cx="221.5" cy="-197.0" rx="2.0" ry="0.9" transform="rotate(20 221.5 -197.0)"/><ellipse cx="202.0" cy="-218.8" rx="3.4" ry="1.5" transform="rotate(22 202.0 -218.8)"/><ellipse cx="204.6" cy="-189.9" rx="2.6" ry="1.1" transform="rotate(-23 204.6 -189.9)"/><ellipse cx="218.3" cy="-222.0" rx="3.5" ry="1.6" transform="rotate(-18 218.3 -222.0)"/><ellipse cx="201.0" cy="-209.8" rx="3.3" ry="1.5" transform="rotate(-25 201.0 -209.8)"/><ellipse cx="205.3" cy="-191.5" rx="1.6" ry="0.7" transform="rotate(3 205.3 -191.5)"/><ellipse cx="210.9" cy="-221.7" rx="3.1" ry="1.4" transform="rotate(6 210.9 -221.7)"/><ellipse cx="214.0" cy="-191.4" rx="3.9" ry="1.8" transform="rotate(-10 214.0 -191.4)"/><ellipse cx="207.5" cy="-202.7" rx="2.0" ry="0.9" transform="rotate(-20 207.5 -202.7)"/><ellipse cx="224.6" cy="-214.5" rx="3.6" ry="1.6" transform="rotate(29 224.6 -214.5)"/><ellipse cx="199.7" cy="-221.1" rx="2.8" ry="1.2" transform="rotate(-5 199.7 -221.1)"/><ellipse cx="226.7" cy="-213.2" rx="3.8" ry="1.7" transform="rotate(-1 226.7 -213.2)"/><ellipse cx="213.4" cy="-221.3" rx="4.0" ry="1.8" transform="rotate(25 213.4 -221.3)"/><ellipse cx="207.7" cy="-182.6" rx="1.9" ry="0.8" transform="rotate(-24 207.7 -182.6)"/><ellipse cx="210.3" cy="-218.9" rx="2.7" ry="1.2" transform="rotate(8 210.3 -218.9)"/><ellipse cx="225.6" cy="-200.3" rx="2.1" ry="0.9" transform="rotate(-4 225.6 -200.3)"/><ellipse cx="203.9" cy="-188.1" rx="3.3" ry="1.5" transform="rotate(-13 203.9 -188.1)"/><ellipse cx="223.8" cy="-153.6" rx="2.5" ry="1.1" transform="rotate(-25 223.8 -153.6)"/><ellipse cx="224.6" cy="-145.7" rx="3.2" ry="1.4" transform="rotate(29 224.6 -145.7)"/><ellipse cx="230.2" cy="-162.9" rx="2.4" ry="1.1" transform="rotate(-20 230.2 -162.9)"/><ellipse cx="214.6" cy="-147.5" rx="2.8" ry="1.2" transform="rotate(3 214.6 -147.5)"/><ellipse cx="210.3" cy="-145.8" rx="2.2" ry="1.0" transform="rotate(-2 210.3 -145.8)"/><ellipse cx="227.0" cy="-172.5" rx="2.2" ry="1.0" transform="rotate(-15 227.0 -172.5)"/><ellipse cx="218.5" cy="-162.4" rx="1.8" ry="0.8" transform="rotate(2 218.5 -162.4)"/><ellipse cx="212.8" cy="-162.3" rx="1.6" ry="0.7" transform="rotate(-18 212.8 -162.3)"/><ellipse cx="219.1" cy="-174.4" rx="3.9" ry="1.7" transform="rotate(17 219.1 -174.4)"/><ellipse cx="220.5" cy="-160.9" rx="1.9" ry="0.8" transform="rotate(-29 220.5 -160.9)"/><ellipse cx="211.0" cy="-155.5" rx="1.6" ry="0.7" transform="rotate(3 211.0 -155.5)"/><ellipse cx="224.1" cy="-154.0" rx="2.1" ry="0.9" transform="rotate(18 224.1 -154.0)"/><ellipse cx="212.2" cy="-155.3" rx="1.6" ry="0.7" transform="rotate(-4 212.2 -155.3)"/><ellipse cx="210.5" cy="-172.6" rx="3.7" ry="1.7" transform="rotate(19 210.5 -172.6)"/><ellipse cx="218.1" cy="-152.9" rx="3.4" ry="1.5" transform="rotate(17 218.1 -152.9)"/><ellipse cx="206.0" cy="-161.5" rx="2.8" ry="1.3" transform="rotate(-13 206.0 -161.5)"/><ellipse cx="218.9" cy="-158.1" rx="3.1" ry="1.4" transform="rotate(24 218.9 -158.1)"/><ellipse cx="225.5" cy="-168.2" rx="3.1" ry="1.4" transform="rotate(26 225.5 -168.2)"/><ellipse cx="222.0" cy="-175.1" rx="2.5" ry="1.1" transform="rotate(1 222.0 -175.1)"/><ellipse cx="220.7" cy="-152.7" rx="3.2" ry="1.4" transform="rotate(30 220.7 -152.7)"/><ellipse cx="210.0" cy="-164.3" rx="2.3" ry="1.0" transform="rotate(-3 210.0 -164.3)"/><ellipse cx="220.9" cy="-173.5" rx="3.9" ry="1.7" transform="rotate(-21 220.9 -173.5)"/><ellipse cx="214.2" cy="-146.8" rx="2.5" ry="1.1" transform="rotate(21 214.2 -146.8)"/><ellipse cx="224.0" cy="-178.0" rx="3.0" ry="1.3" transform="rotate(-28 224.0 -178.0)"/><ellipse cx="209.3" cy="-167.3" rx="2.7" ry="1.2" transform="rotate(-13 209.3 -167.3)"/><ellipse cx="214.8" cy="-179.4" rx="1.7" ry="0.8" transform="rotate(10 214.8 -179.4)"/><ellipse cx="211.5" cy="-149.8" rx="3.7" ry="1.6" transform="rotate(28 211.5 -149.8)"/><ellipse cx="214.4" cy="-167.6" rx="3.8" ry="1.7" transform="rotate(-19 214.4 -167.6)"/><ellipse cx="209.1" cy="-147.9" rx="2.2" ry="1.0" transform="rotate(-14 209.1 -147.9)"/><ellipse cx="230.2" cy="-166.6" rx="2.2" ry="1.0" transform="rotate(-6 230.2 -166.6)"/><ellipse cx="217.1" cy="-153.1" rx="2.1" ry="0.9" transform="rotate(29 217.1 -153.1)"/><ellipse cx="223.6" cy="-155.7" rx="1.9" ry="0.9" transform="rotate(-25 223.6 -155.7)"/><ellipse cx="206.8" cy="-163.3" rx="3.6" ry="1.6" transform="rotate(8 206.8 -163.3)"/><ellipse cx="218.4" cy="-161.8" rx="2.2" ry="1.0" transform="rotate(28 218.4 -161.8)"/><ellipse cx="224.2" cy="-155.9" rx="2.7" ry="1.2" transform="rotate(-14 224.2 -155.9)"/><ellipse cx="215.3" cy="-161.7" rx="2.0" ry="0.9" transform="rotate(27 215.3 -161.7)"/><ellipse cx="225.7" cy="-145.0" rx="1.9" ry="0.8" transform="rotate(30 225.7 -145.0)"/><ellipse cx="213.2" cy="-175.1" rx="1.8" ry="0.8" transform="rotate(-27 213.2 -175.1)"/><ellipse cx="218.3" cy="-169.0" rx="1.9" ry="0.9" transform="rotate(19 218.3 -169.0)"/><ellipse cx="220.1" cy="-163.6" rx="3.9" ry="1.7" transform="rotate(2 220.1 -163.6)"/><ellipse cx="214.8" cy="-155.9" rx="2.4" ry="1.1" transform="rotate(29 214.8 -155.9)"/><ellipse cx="217.1" cy="-153.1" rx="1.8" ry="0.8" transform="rotate(-22 217.1 -153.1)"/><ellipse cx="210.5" cy="-144.7" rx="1.6" ry="0.7" transform="rotate(-18 210.5 -144.7)"/><ellipse cx="230.2" cy="-168.1" rx="3.9" ry="1.7" transform="rotate(-15 230.2 -168.1)"/><ellipse cx="210.2" cy="-144.5" rx="2.7" ry="1.2" transform="rotate(12 210.2 -144.5)"/><ellipse cx="217.3" cy="-157.7" rx="2.3" ry="1.0" transform="rotate(15 217.3 -157.7)"/><ellipse cx="220.0" cy="-175.6" rx="2.6" ry="1.2" transform="rotate(2 220.0 -175.6)"/><ellipse cx="209.0" cy="-155.1" rx="3.5" ry="1.6" transform="rotate(-18 209.0 -155.1)"/><ellipse cx="207.5" cy="-171.5" rx="3.6" ry="1.6" transform="rotate(-19 207.5 -171.5)"/><ellipse cx="229.8" cy="-164.7" rx="1.9" ry="0.8" transform="rotate(-14 229.8 -164.7)"/><ellipse cx="218.9" cy="-155.9" rx="3.9" ry="1.7" transform="rotate(-5 218.9 -155.9)"/><ellipse cx="221.1" cy="-165.4" rx="1.5" ry="0.7" transform="rotate(22 221.1 -165.4)"/><ellipse cx="221.6" cy="-180.1" rx="3.2" ry="1.4" transform="rotate(2 221.6 -180.1)"/><ellipse cx="218.4" cy="-166.7" rx="2.8" ry="1.2" transform="rotate(-4 218.4 -166.7)"/><ellipse cx="224.2" cy="-147.8" rx="2.3" ry="1.0" transform="rotate(0 224.2 -147.8)"/><ellipse cx="212.8" cy="-152.1" rx="2.3" ry="1.0" transform="rotate(6 212.8 -152.1)"/><ellipse cx="230.7" cy="-162.9" rx="3.6" ry="1.6" transform="rotate(20 230.7 -162.9)"/><ellipse cx="215.0" cy="-140.6" rx="2.1" ry="0.9" transform="rotate(-23 215.0 -140.6)"/><ellipse cx="206.8" cy="-160.5" rx="2.3" ry="1.0" transform="rotate(9 206.8 -160.5)"/><ellipse cx="215.4" cy="-140.6" rx="2.6" ry="1.1" transform="rotate(-1 215.4 -140.6)"/><ellipse cx="205.9" cy="-164.2" rx="3.9" ry="1.7" transform="rotate(2 205.9 -164.2)"/><ellipse cx="208.4" cy="-154.6" rx="1.6" ry="0.7" transform="rotate(-4 208.4 -154.6)"/><ellipse cx="224.7" cy="-175.3" rx="1.6" ry="0.7" transform="rotate(21 224.7 -175.3)"/><ellipse cx="208.3" cy="-146.9" rx="2.4" ry="1.1" transform="rotate(-17 208.3 -146.9)"/><ellipse cx="206.2" cy="-166.3" rx="2.5" ry="1.1" transform="rotate(22 206.2 -166.3)"/><ellipse cx="216.1" cy="-172.4" rx="2.2" ry="1.0" transform="rotate(0 216.1 -172.4)"/><ellipse cx="211.5" cy="-153.0" rx="3.1" ry="1.4" transform="rotate(23 211.5 -153.0)"/><ellipse cx="213.7" cy="-164.4" rx="2.0" ry="0.9" transform="rotate(-8 213.7 -164.4)"/><ellipse cx="214.3" cy="-165.5" rx="1.6" ry="0.7" transform="rotate(-11 214.3 -165.5)"/><ellipse cx="217.6" cy="-157.0" rx="2.8" ry="1.2" transform="rotate(25 217.6 -157.0)"/><ellipse cx="207.0" cy="-164.2" rx="3.5" ry="1.6" transform="rotate(20 207.0 -164.2)"/><ellipse cx="225.5" cy="-167.5" rx="3.2" ry="1.4" transform="rotate(-23 225.5 -167.5)"/><ellipse cx="223.9" cy="-169.1" rx="2.6" ry="1.2" transform="rotate(23 223.9 -169.1)"/><ellipse cx="216.7" cy="-151.7" rx="3.5" ry="1.6" transform="rotate(6 216.7 -151.7)"/><ellipse cx="219.9" cy="-158.7" rx="2.3" ry="1.0" transform="rotate(-30 219.9 -158.7)"/><ellipse cx="220.8" cy="-168.1" rx="2.1" ry="0.9" transform="rotate(-7 220.8 -168.1)"/><ellipse cx="209.4" cy="-161.4" rx="3.0" ry="1.3" transform="rotate(10 209.4 -161.4)"/><ellipse cx="214.2" cy="-157.9" rx="3.9" ry="1.7" transform="rotate(11 214.2 -157.9)"/><ellipse cx="225.6" cy="-153.6" rx="3.3" ry="1.5" transform="rotate(30 225.6 -153.6)"/><ellipse cx="219.2" cy="-159.6" rx="2.6" ry="1.2" transform="rotate(-5 219.2 -159.6)"/><ellipse cx="227.4" cy="-171.9" rx="2.3" ry="1.0" transform="rotate(-5 227.4 -171.9)"/><ellipse cx="207.3" cy="-170.0" rx="1.9" ry="0.9" transform="rotate(-6 207.3 -170.0)"/><ellipse cx="227.0" cy="-151.7" rx="1.5" ry="0.7" transform="rotate(26 227.0 -151.7)"/><ellipse cx="208.2" cy="-162.7" rx="1.7" ry="0.7" transform="rotate(-16 208.2 -162.7)"/><ellipse cx="206.1" cy="-156.7" rx="2.8" ry="1.2" transform="rotate(-13 206.1 -156.7)"/><ellipse cx="228.7" cy="-162.3" rx="2.8" ry="1.2" transform="rotate(-18 228.7 -162.3)"/><ellipse cx="214.3" cy="-141.8" rx="1.8" ry="0.8" transform="rotate(2 214.3 -141.8)"/><ellipse cx="212.3" cy="-168.8" rx="3.4" ry="1.5" transform="rotate(25 212.3 -168.8)"/><ellipse cx="225.1" cy="-174.2" rx="2.0" ry="0.9" transform="rotate(-26 225.1 -174.2)"/><ellipse cx="211.3" cy="-155.7" rx="1.9" ry="0.9" transform="rotate(22 211.3 -155.7)"/><ellipse cx="220.5" cy="-142.2" rx="3.8" ry="1.7" transform="rotate(-23 220.5 -142.2)"/><ellipse cx="225.1" cy="-167.1" rx="2.0" ry="0.9" transform="rotate(-19 225.1 -167.1)"/><ellipse cx="227.1" cy="-157.0" rx="2.4" ry="1.1" transform="rotate(21 227.1 -157.0)"/><ellipse cx="219.6" cy="-164.7" rx="2.5" ry="1.1" transform="rotate(-7 219.6 -164.7)"/><ellipse cx="220.9" cy="-151.2" rx="2.1" ry="0.9" transform="rotate(12 220.9 -151.2)"/><ellipse cx="215.7" cy="-154.6" rx="2.0" ry="0.9" transform="rotate(-3 215.7 -154.6)"/><ellipse cx="212.0" cy="-164.5" rx="3.2" ry="1.4" transform="rotate(-17 212.0 -164.5)"/><ellipse cx="213.1" cy="-174.5" rx="1.9" ry="0.8" transform="rotate(15 213.1 -174.5)"/><ellipse cx="210.4" cy="-151.1" rx="2.9" ry="1.3" transform="rotate(8 210.4 -151.1)"/><ellipse cx="215.1" cy="-158.7" rx="3.4" ry="1.5" transform="rotate(22 215.1 -158.7)"/><ellipse cx="208.0" cy="-159.5" rx="2.1" ry="0.9" transform="rotate(24 208.0 -159.5)"/><ellipse cx="215.6" cy="-169.3" rx="3.5" ry="1.6" transform="rotate(29 215.6 -169.3)"/><ellipse cx="210.6" cy="-143.5" rx="2.7" ry="1.2" transform="rotate(-19 210.6 -143.5)"/><ellipse cx="216.4" cy="-172.1" rx="3.3" ry="1.5" transform="rotate(5 216.4 -172.1)"/><ellipse cx="225.5" cy="-151.1" rx="3.6" ry="1.6" transform="rotate(-1 225.5 -151.1)"/><ellipse cx="206.2" cy="-165.1" rx="2.6" ry="1.1" transform="rotate(-0 206.2 -165.1)"/><ellipse cx="207.7" cy="-169.7" rx="2.0" ry="0.9" transform="rotate(-24 207.7 -169.7)"/><ellipse cx="218.7" cy="-175.7" rx="2.2" ry="1.0" transform="rotate(24 218.7 -175.7)"/><ellipse cx="225.3" cy="-170.5" rx="3.9" ry="1.7" transform="rotate(20 225.3 -170.5)"/><ellipse cx="217.9" cy="-171.5" rx="1.5" ry="0.7" transform="rotate(11 217.9 -171.5)"/><ellipse cx="217.3" cy="-172.6" rx="2.6" ry="1.2" transform="rotate(4 217.3 -172.6)"/><ellipse cx="218.0" cy="-143.2" rx="2.9" ry="1.3" transform="rotate(-7 218.0 -143.2)"/><ellipse cx="225.6" cy="-150.7" rx="2.2" ry="1.0" transform="rotate(13 225.6 -150.7)"/><ellipse cx="221.9" cy="-149.0" rx="1.9" ry="0.9" transform="rotate(-6 221.9 -149.0)"/><ellipse cx="214.2" cy="-163.5" rx="1.6" ry="0.7" transform="rotate(-1 214.2 -163.5)"/><ellipse cx="220.8" cy="-146.5" rx="1.9" ry="0.8" transform="rotate(-24 220.8 -146.5)"/><ellipse cx="205.7" cy="-165.0" rx="3.6" ry="1.6" transform="rotate(1 205.7 -165.0)"/><ellipse cx="215.3" cy="-157.2" rx="2.1" ry="0.9" transform="rotate(-11 215.3 -157.2)"/><ellipse cx="222.2" cy="-163.0" rx="3.8" ry="1.7" transform="rotate(-1 222.2 -163.0)"/><ellipse cx="211.8" cy="-156.2" rx="3.9" ry="1.7" transform="rotate(-19 211.8 -156.2)"/><ellipse cx="209.5" cy="-166.8" rx="1.9" ry="0.9" transform="rotate(-17 209.5 -166.8)"/><ellipse cx="229.7" cy="-162.1" rx="3.3" ry="1.5" transform="rotate(24 229.7 -162.1)"/><ellipse cx="227.0" cy="-150.4" rx="3.3" ry="1.5" transform="rotate(-16 227.0 -150.4)"/><ellipse cx="205.5" cy="-155.0" rx="2.3" ry="1.0" transform="rotate(16 205.5 -155.0)"/><ellipse cx="223.5" cy="-146.0" rx="2.1" ry="0.9" transform="rotate(1 223.5 -146.0)"/><ellipse cx="209.5" cy="-146.6" rx="3.3" ry="1.5" transform="rotate(0 209.5 -146.6)"/><ellipse cx="214.7" cy="-172.8" rx="3.5" ry="1.5" transform="rotate(-15 214.7 -172.8)"/><ellipse cx="208.3" cy="-164.7" rx="2.4" ry="1.1" transform="rotate(-27 208.3 -164.7)"/><ellipse cx="223.1" cy="-146.0" rx="2.0" ry="0.9" transform="rotate(15 223.1 -146.0)"/><ellipse cx="205.2" cy="-161.0" rx="3.6" ry="1.6" transform="rotate(14 205.2 -161.0)"/><ellipse cx="216.1" cy="-157.3" rx="2.8" ry="1.3" transform="rotate(15 216.1 -157.3)"/><ellipse cx="223.2" cy="-164.8" rx="1.8" ry="0.8" transform="rotate(29 223.2 -164.8)"/><ellipse cx="217.4" cy="-174.7" rx="3.3" ry="1.5" transform="rotate(-21 217.4 -174.7)"/><ellipse cx="172.7" cy="-123.9" rx="3.0" ry="1.3" transform="rotate(-20 172.7 -123.9)"/><ellipse cx="210.3" cy="-107.0" rx="3.7" ry="1.6" transform="rotate(-22 210.3 -107.0)"/><ellipse cx="203.7" cy="-119.0" rx="3.4" ry="1.5" transform="rotate(-7 203.7 -119.0)"/><ellipse cx="167.8" cy="-113.7" rx="3.0" ry="1.3" transform="rotate(-14 167.8 -113.7)"/><ellipse cx="195.0" cy="-120.2" rx="2.1" ry="1.0" transform="rotate(12 195.0 -120.2)"/><ellipse cx="197.9" cy="-116.0" rx="2.7" ry="1.2" transform="rotate(-10 197.9 -116.0)"/><ellipse cx="204.4" cy="-120.5" rx="3.5" ry="1.5" transform="rotate(-7 204.4 -120.5)"/><ellipse cx="201.9" cy="-132.2" rx="3.1" ry="1.4" transform="rotate(-10 201.9 -132.2)"/><ellipse cx="198.5" cy="-105.6" rx="3.5" ry="1.5" transform="rotate(-9 198.5 -105.6)"/><ellipse cx="197.7" cy="-106.1" rx="1.7" ry="0.7" transform="rotate(-11 197.7 -106.1)"/><ellipse cx="176.3" cy="-126.0" rx="2.9" ry="1.3" transform="rotate(-13 176.3 -126.0)"/><ellipse cx="200.0" cy="-118.8" rx="2.3" ry="1.0" transform="rotate(-18 200.0 -118.8)"/><ellipse cx="181.9" cy="-123.7" rx="3.4" ry="1.5" transform="rotate(6 181.9 -123.7)"/><ellipse cx="182.5" cy="-134.3" rx="2.8" ry="1.2" transform="rotate(-4 182.5 -134.3)"/><ellipse cx="192.8" cy="-114.5" rx="3.4" ry="1.5" transform="rotate(0 192.8 -114.5)"/><ellipse cx="217.8" cy="-107.7" rx="2.9" ry="1.3" transform="rotate(7 217.8 -107.7)"/><ellipse cx="185.9" cy="-116.5" rx="4.0" ry="1.8" transform="rotate(-20 185.9 -116.5)"/><ellipse cx="176.2" cy="-104.0" rx="1.7" ry="0.8" transform="rotate(-0 176.2 -104.0)"/><ellipse cx="181.2" cy="-118.0" rx="3.8" ry="1.7" transform="rotate(-5 181.2 -118.0)"/><ellipse cx="215.2" cy="-118.3" rx="1.5" ry="0.6" transform="rotate(13 215.2 -118.3)"/><ellipse cx="214.0" cy="-133.6" rx="1.6" ry="0.7" transform="rotate(11 214.0 -133.6)"/><ellipse cx="188.7" cy="-106.0" rx="2.2" ry="1.0" transform="rotate(-12 188.7 -106.0)"/><ellipse cx="210.7" cy="-107.2" rx="1.7" ry="0.7" transform="rotate(28 210.7 -107.2)"/><ellipse cx="222.6" cy="-113.8" rx="1.9" ry="0.9" transform="rotate(-25 222.6 -113.8)"/><ellipse cx="194.7" cy="-134.3" rx="3.4" ry="1.5" transform="rotate(1 194.7 -134.3)"/><ellipse cx="189.7" cy="-123.6" rx="3.1" ry="1.4" transform="rotate(1 189.7 -123.6)"/><ellipse cx="197.6" cy="-119.7" rx="1.6" ry="0.7" transform="rotate(11 197.6 -119.7)"/><ellipse cx="212.1" cy="-125.3" rx="3.2" ry="1.4" transform="rotate(4 212.1 -125.3)"/><ellipse cx="180.2" cy="-110.4" rx="3.0" ry="1.3" transform="rotate(-28 180.2 -110.4)"/><ellipse cx="186.9" cy="-102.7" rx="2.1" ry="0.9" transform="rotate(-2 186.9 -102.7)"/><ellipse cx="194.7" cy="-107.0" rx="3.1" ry="1.4" transform="rotate(15 194.7 -107.0)"/><ellipse cx="214.5" cy="-123.1" rx="2.0" ry="0.9" transform="rotate(-10 214.5 -123.1)"/><ellipse cx="208.5" cy="-115.7" rx="2.9" ry="1.3" transform="rotate(7 208.5 -115.7)"/><ellipse cx="196.0" cy="-110.5" rx="1.7" ry="0.7" transform="rotate(-19 196.0 -110.5)"/><ellipse cx="180.8" cy="-119.4" rx="3.7" ry="1.6" transform="rotate(4 180.8 -119.4)"/><ellipse cx="185.2" cy="-107.9" rx="1.5" ry="0.7" transform="rotate(14 185.2 -107.9)"/><ellipse cx="195.5" cy="-131.7" rx="3.3" ry="1.5" transform="rotate(-14 195.5 -131.7)"/><ellipse cx="198.0" cy="-109.6" rx="1.9" ry="0.9" transform="rotate(6 198.0 -109.6)"/><ellipse cx="180.0" cy="-133.0" rx="1.7" ry="0.8" transform="rotate(16 180.0 -133.0)"/><ellipse cx="177.8" cy="-117.6" rx="2.7" ry="1.2" transform="rotate(-4 177.8 -117.6)"/><ellipse cx="201.0" cy="-107.0" rx="3.1" ry="1.4" transform="rotate(13 201.0 -107.0)"/><ellipse cx="206.3" cy="-123.9" rx="3.7" ry="1.6" transform="rotate(18 206.3 -123.9)"/><ellipse cx="188.8" cy="-139.1" rx="1.8" ry="0.8" transform="rotate(17 188.8 -139.1)"/><ellipse cx="203.5" cy="-123.5" rx="2.9" ry="1.3" transform="rotate(27 203.5 -123.5)"/><ellipse cx="188.3" cy="-101.0" rx="3.7" ry="1.7" transform="rotate(-4 188.3 -101.0)"/><ellipse cx="203.6" cy="-111.7" rx="3.5" ry="1.6" transform="rotate(-5 203.6 -111.7)"/><ellipse cx="187.7" cy="-106.8" rx="3.8" ry="1.7" transform="rotate(-15 187.7 -106.8)"/><ellipse cx="223.3" cy="-117.0" rx="2.2" ry="1.0" transform="rotate(-7 223.3 -117.0)"/><ellipse cx="210.5" cy="-120.9" rx="1.7" ry="0.7" transform="rotate(23 210.5 -120.9)"/><ellipse cx="195.9" cy="-109.6" rx="3.8" ry="1.7" transform="rotate(-16 195.9 -109.6)"/><ellipse cx="208.9" cy="-126.2" rx="2.2" ry="1.0" transform="rotate(-17 208.9 -126.2)"/><ellipse cx="174.6" cy="-123.3" rx="2.4" ry="1.1" transform="rotate(0 174.6 -123.3)"/><ellipse cx="187.5" cy="-101.3" rx="3.8" ry="1.7" transform="rotate(15 187.5 -101.3)"/><ellipse cx="198.6" cy="-124.2" rx="2.1" ry="0.9" transform="rotate(-18 198.6 -124.2)"/><ellipse cx="211.3" cy="-102.6" rx="3.7" ry="1.7" transform="rotate(25 211.3 -102.6)"/><ellipse cx="186.2" cy="-121.8" rx="2.5" ry="1.1" transform="rotate(-27 186.2 -121.8)"/><ellipse cx="207.6" cy="-125.3" rx="2.2" ry="1.0" transform="rotate(27 207.6 -125.3)"/><ellipse cx="203.9" cy="-100.5" rx="2.2" ry="1.0" transform="rotate(10 203.9 -100.5)"/><ellipse cx="216.8" cy="-107.2" rx="2.4" ry="1.1" transform="rotate(-9 216.8 -107.2)"/><ellipse cx="182.9" cy="-132.4" rx="2.1" ry="0.9" transform="rotate(-23 182.9 -132.4)"/><ellipse cx="191.4" cy="-120.8" rx="3.6" ry="1.6" transform="rotate(-9 191.4 -120.8)"/><ellipse cx="203.4" cy="-109.0" rx="1.7" ry="0.8" transform="rotate(-11 203.4 -109.0)"/><ellipse cx="177.7" cy="-122.8" rx="2.3" ry="1.0" transform="rotate(-13 177.7 -122.8)"/><ellipse cx="170.1" cy="-117.8" rx="2.5" ry="1.1" transform="rotate(16 170.1 -117.8)"/><ellipse cx="185.5" cy="-118.5" rx="1.9" ry="0.8" transform="rotate(21 185.5 -118.5)"/><ellipse cx="177.7" cy="-117.6" rx="2.7" ry="1.2" transform="rotate(21 177.7 -117.6)"/><ellipse cx="183.1" cy="-110.6" rx="2.4" ry="1.0" transform="rotate(-29 183.1 -110.6)"/><ellipse cx="176.2" cy="-123.3" rx="2.7" ry="1.2" transform="rotate(-3 176.2 -123.3)"/><ellipse cx="171.4" cy="-116.3" rx="1.9" ry="0.8" transform="rotate(29 171.4 -116.3)"/><ellipse cx="215.5" cy="-106.7" rx="1.9" ry="0.8" transform="rotate(18 215.5 -106.7)"/><ellipse cx="194.9" cy="-113.6" rx="2.8" ry="1.2" transform="rotate(20 194.9 -113.6)"/><ellipse cx="210.6" cy="-135.2" rx="3.9" ry="1.7" transform="rotate(-27 210.6 -135.2)"/><ellipse cx="188.6" cy="-114.7" rx="3.3" ry="1.5" transform="rotate(-3 188.6 -114.7)"/><ellipse cx="194.4" cy="-137.6" rx="4.0" ry="1.8" transform="rotate(11 194.4 -137.6)"/><ellipse cx="210.5" cy="-130.0" rx="1.6" ry="0.7" transform="rotate(23 210.5 -130.0)"/><ellipse cx="202.5" cy="-116.0" rx="3.5" ry="1.6" transform="rotate(-13 202.5 -116.0)"/><ellipse cx="192.8" cy="-122.3" rx="2.0" ry="0.9" transform="rotate(13 192.8 -122.3)"/><ellipse cx="215.4" cy="-115.8" rx="3.8" ry="1.7" transform="rotate(-17 215.4 -115.8)"/><ellipse cx="188.4" cy="-136.3" rx="3.0" ry="1.3" transform="rotate(16 188.4 -136.3)"/><ellipse cx="194.3" cy="-121.6" rx="1.9" ry="0.9" transform="rotate(2 194.3 -121.6)"/><ellipse cx="208.6" cy="-121.1" rx="2.9" ry="1.3" transform="rotate(-22 208.6 -121.1)"/><ellipse cx="206.4" cy="-130.6" rx="2.8" ry="1.2" transform="rotate(10 206.4 -130.6)"/><ellipse cx="211.5" cy="-106.0" rx="3.5" ry="1.5" transform="rotate(22 211.5 -106.0)"/><ellipse cx="192.7" cy="-109.5" rx="1.9" ry="0.8" transform="rotate(24 192.7 -109.5)"/><ellipse cx="178.8" cy="-114.4" rx="2.8" ry="1.2" transform="rotate(12 178.8 -114.4)"/><ellipse cx="188.5" cy="-108.4" rx="3.4" ry="1.5" transform="rotate(17 188.5 -108.4)"/><ellipse cx="193.2" cy="-113.9" rx="3.8" ry="1.7" transform="rotate(14 193.2 -113.9)"/><ellipse cx="180.2" cy="-126.6" rx="3.9" ry="1.7" transform="rotate(-4 180.2 -126.6)"/><ellipse cx="197.3" cy="-112.9" rx="2.3" ry="1.0" transform="rotate(6 197.3 -112.9)"/><ellipse cx="176.9" cy="-104.2" rx="3.1" ry="1.4" transform="rotate(-3 176.9 -104.2)"/><ellipse cx="183.5" cy="-132.8" rx="3.0" ry="1.3" transform="rotate(-0 183.5 -132.8)"/><ellipse cx="175.4" cy="-121.4" rx="3.5" ry="1.6" transform="rotate(-18 175.4 -121.4)"/><ellipse cx="198.9" cy="-130.2" rx="3.6" ry="1.6" transform="rotate(-26 198.9 -130.2)"/><ellipse cx="176.3" cy="-118.0" rx="3.2" ry="1.4" transform="rotate(-18 176.3 -118.0)"/><ellipse cx="194.6" cy="-111.8" rx="2.9" ry="1.3" transform="rotate(5 194.6 -111.8)"/><ellipse cx="207.5" cy="-119.3" rx="1.9" ry="0.9" transform="rotate(27 207.5 -119.3)"/><ellipse cx="174.6" cy="-115.0" rx="2.2" ry="1.0" transform="rotate(10 174.6 -115.0)"/><ellipse cx="204.5" cy="-134.8" rx="1.4" ry="0.6" transform="rotate(-4 204.5 -134.8)"/><ellipse cx="189.3" cy="-119.0" rx="3.4" ry="1.5" transform="rotate(-11 189.3 -119.0)"/><ellipse cx="189.3" cy="-103.6" rx="2.9" ry="1.3" transform="rotate(-0 189.3 -103.6)"/><ellipse cx="208.5" cy="-130.7" rx="2.3" ry="1.0" transform="rotate(-26 208.5 -130.7)"/><ellipse cx="179.0" cy="-123.3" rx="2.8" ry="1.2" transform="rotate(-9 179.0 -123.3)"/><ellipse cx="201.0" cy="-119.1" rx="1.8" ry="0.8" transform="rotate(-24 201.0 -119.1)"/><ellipse cx="208.4" cy="-131.9" rx="2.0" ry="0.9" transform="rotate(13 208.4 -131.9)"/><ellipse cx="190.6" cy="-123.1" rx="3.3" ry="1.5" transform="rotate(-16 190.6 -123.1)"/><ellipse cx="206.2" cy="-119.4" rx="2.2" ry="1.0" transform="rotate(-15 206.2 -119.4)"/><ellipse cx="212.3" cy="-133.5" rx="2.9" ry="1.3" transform="rotate(-21 212.3 -133.5)"/><ellipse cx="173.7" cy="-111.8" rx="1.6" ry="0.7" transform="rotate(25 173.7 -111.8)"/><ellipse cx="210.5" cy="-136.0" rx="3.2" ry="1.4" transform="rotate(7 210.5 -136.0)"/><ellipse cx="210.1" cy="-121.0" rx="2.2" ry="1.0" transform="rotate(-23 210.1 -121.0)"/><ellipse cx="206.3" cy="-102.6" rx="1.7" ry="0.7" transform="rotate(15 206.3 -102.6)"/><ellipse cx="173.9" cy="-107.6" rx="3.4" ry="1.5" transform="rotate(11 173.9 -107.6)"/><ellipse cx="198.7" cy="-122.8" rx="2.1" ry="0.9" transform="rotate(-8 198.7 -122.8)"/><ellipse cx="174.1" cy="-112.1" rx="3.7" ry="1.6" transform="rotate(14 174.1 -112.1)"/><ellipse cx="217.0" cy="-126.7" rx="2.3" ry="1.0" transform="rotate(0 217.0 -126.7)"/><ellipse cx="195.2" cy="-137.9" rx="2.4" ry="1.1" transform="rotate(-9 195.2 -137.9)"/><ellipse cx="185.0" cy="-125.8" rx="3.7" ry="1.6" transform="rotate(-30 185.0 -125.8)"/><ellipse cx="183.5" cy="-130.8" rx="1.9" ry="0.9" transform="rotate(4 183.5 -130.8)"/><ellipse cx="167.5" cy="-116.0" rx="3.7" ry="1.6" transform="rotate(5 167.5 -116.0)"/><ellipse cx="214.1" cy="-133.3" rx="1.9" ry="0.8" transform="rotate(20 214.1 -133.3)"/><ellipse cx="209.7" cy="-137.0" rx="3.4" ry="1.5" transform="rotate(-6 209.7 -137.0)"/><ellipse cx="201.7" cy="-103.3" rx="2.0" ry="0.9" transform="rotate(15 201.7 -103.3)"/><ellipse cx="172.0" cy="-127.7" rx="2.3" ry="1.0" transform="rotate(-12 172.0 -127.7)"/><ellipse cx="214.7" cy="-128.8" rx="2.4" ry="1.1" transform="rotate(4 214.7 -128.8)"/><ellipse cx="174.2" cy="-112.8" rx="2.7" ry="1.2" transform="rotate(-13 174.2 -112.8)"/><ellipse cx="222.3" cy="-121.8" rx="3.4" ry="1.5" transform="rotate(-13 222.3 -121.8)"/><ellipse cx="203.8" cy="-102.8" rx="3.5" ry="1.6" transform="rotate(9 203.8 -102.8)"/><ellipse cx="200.9" cy="-102.3" rx="2.8" ry="1.2" transform="rotate(-8 200.9 -102.3)"/><ellipse cx="179.0" cy="-126.6" rx="3.1" ry="1.4" transform="rotate(15 179.0 -126.6)"/><ellipse cx="204.9" cy="-120.0" rx="2.9" ry="1.3" transform="rotate(27 204.9 -120.0)"/><ellipse cx="183.3" cy="-132.4" rx="3.6" ry="1.6" transform="rotate(-28 183.3 -132.4)"/><ellipse cx="201.4" cy="-134.9" rx="2.9" ry="1.3" transform="rotate(-11 201.4 -134.9)"/><ellipse cx="187.9" cy="-124.3" rx="2.8" ry="1.2" transform="rotate(-15 187.9 -124.3)"/><ellipse cx="218.9" cy="-127.0" rx="2.6" ry="1.2" transform="rotate(15 218.9 -127.0)"/><ellipse cx="179.8" cy="-109.4" rx="1.8" ry="0.8" transform="rotate(21 179.8 -109.4)"/><ellipse cx="197.6" cy="-137.2" rx="1.6" ry="0.7" transform="rotate(19 197.6 -137.2)"/><ellipse cx="217.0" cy="-118.1" rx="2.7" ry="1.2" transform="rotate(-26 217.0 -118.1)"/><ellipse cx="171.5" cy="-110.1" rx="3.0" ry="1.3" transform="rotate(-11 171.5 -110.1)"/><ellipse cx="202.1" cy="-130.6" rx="3.7" ry="1.6" transform="rotate(-6 202.1 -130.6)"/><ellipse cx="220.5" cy="-109.8" rx="1.6" ry="0.7" transform="rotate(-15 220.5 -109.8)"/><ellipse cx="196.7" cy="-126.2" rx="2.8" ry="1.2" transform="rotate(22 196.7 -126.2)"/><ellipse cx="181.0" cy="-125.8" rx="3.4" ry="1.5" transform="rotate(20 181.0 -125.8)"/><ellipse cx="175.4" cy="-127.1" rx="2.3" ry="1.0" transform="rotate(-6 175.4 -127.1)"/><ellipse cx="223.7" cy="-120.3" rx="1.4" ry="0.6" transform="rotate(-18 223.7 -120.3)"/><ellipse cx="199.4" cy="-101.2" rx="1.9" ry="0.9" transform="rotate(-20 199.4 -101.2)"/><ellipse cx="196.6" cy="-127.7" rx="3.9" ry="1.7" transform="rotate(-3 196.6 -127.7)"/><ellipse cx="216.3" cy="-130.4" rx="2.0" ry="0.9" transform="rotate(17 216.3 -130.4)"/><ellipse cx="183.7" cy="-114.4" rx="1.6" ry="0.7" transform="rotate(12 183.7 -114.4)"/><ellipse cx="180.7" cy="-123.5" rx="3.5" ry="1.6" transform="rotate(-18 180.7 -123.5)"/><ellipse cx="187.4" cy="-117.2" rx="2.3" ry="1.0" transform="rotate(23 187.4 -117.2)"/><ellipse cx="184.1" cy="-119.3" rx="2.0" ry="0.9" transform="rotate(9 184.1 -119.3)"/><ellipse cx="190.7" cy="-100.2" rx="1.6" ry="0.7" transform="rotate(22 190.7 -100.2)"/><ellipse cx="176.6" cy="-132.2" rx="2.3" ry="1.0" transform="rotate(-26 176.6 -132.2)"/><ellipse cx="206.1" cy="-104.9" rx="1.5" ry="0.7" transform="rotate(-23 206.1 -104.9)"/><ellipse cx="200.8" cy="-138.2" rx="3.6" ry="1.6" transform="rotate(20 200.8 -138.2)"/><ellipse cx="170.0" cy="-125.8" rx="3.2" ry="1.4" transform="rotate(3 170.0 -125.8)"/><ellipse cx="191.4" cy="-117.8" rx="1.7" ry="0.7" transform="rotate(-15 191.4 -117.8)"/><ellipse cx="185.7" cy="-117.6" rx="3.9" ry="1.7" transform="rotate(5 185.7 -117.6)"/><ellipse cx="193.8" cy="-138.7" rx="2.0" ry="0.9" transform="rotate(23 193.8 -138.7)"/><ellipse cx="209.8" cy="-122.1" rx="1.8" ry="0.8" transform="rotate(18 209.8 -122.1)"/><ellipse cx="215.2" cy="-131.0" rx="2.5" ry="1.1" transform="rotate(6 215.2 -131.0)"/><ellipse cx="205.9" cy="-112.8" rx="2.5" ry="1.1" transform="rotate(15 205.9 -112.8)"/><ellipse cx="218.9" cy="-108.8" rx="1.5" ry="0.7" transform="rotate(28 218.9 -108.8)"/><ellipse cx="197.5" cy="-100.7" rx="3.5" ry="1.6" transform="rotate(27 197.5 -100.7)"/><ellipse cx="171.7" cy="-116.1" rx="2.2" ry="1.0" transform="rotate(20 171.7 -116.1)"/><ellipse cx="216.4" cy="-107.1" rx="2.9" ry="1.3" transform="rotate(-26 216.4 -107.1)"/><ellipse cx="210.5" cy="-123.5" rx="1.6" ry="0.7" transform="rotate(-14 210.5 -123.5)"/><ellipse cx="210.4" cy="-117.4" rx="3.2" ry="1.4" transform="rotate(29 210.4 -117.4)"/><ellipse cx="177.3" cy="-133.3" rx="3.5" ry="1.6" transform="rotate(13 177.3 -133.3)"/><ellipse cx="184.6" cy="-112.4" rx="1.8" ry="0.8" transform="rotate(3 184.6 -112.4)"/><ellipse cx="202.4" cy="-102.3" rx="2.2" ry="1.0" transform="rotate(5 202.4 -102.3)"/><ellipse cx="173.5" cy="-124.0" rx="1.8" ry="0.8" transform="rotate(-15 173.5 -124.0)"/><ellipse cx="190.4" cy="-128.1" rx="3.1" ry="1.4" transform="rotate(28 190.4 -128.1)"/><ellipse cx="173.7" cy="-106.4" rx="3.0" ry="1.3" transform="rotate(27 173.7 -106.4)"/><ellipse cx="170.7" cy="-122.2" rx="3.2" ry="1.4" transform="rotate(-18 170.7 -122.2)"/><ellipse cx="173.6" cy="-121.1" rx="2.6" ry="1.2" transform="rotate(10 173.6 -121.1)"/><ellipse cx="217.0" cy="-129.2" rx="3.5" ry="1.5" transform="rotate(-21 217.0 -129.2)"/><ellipse cx="188.8" cy="-134.9" rx="3.8" ry="1.7" transform="rotate(-30 188.8 -134.9)"/><ellipse cx="208.7" cy="-101.3" rx="2.4" ry="1.1" transform="rotate(12 208.7 -101.3)"/><ellipse cx="180.2" cy="-126.4" rx="2.5" ry="1.1" transform="rotate(4 180.2 -126.4)"/><ellipse cx="216.3" cy="-120.7" rx="3.4" ry="1.5" transform="rotate(-12 216.3 -120.7)"/><ellipse cx="190.1" cy="-134.8" rx="3.3" ry="1.5" transform="rotate(23 190.1 -134.8)"/><ellipse cx="220.2" cy="-109.6" rx="3.0" ry="1.3" transform="rotate(-14 220.2 -109.6)"/><ellipse cx="186.7" cy="-117.9" rx="2.0" ry="0.9" transform="rotate(20 186.7 -117.9)"/><ellipse cx="188.9" cy="-137.9" rx="1.8" ry="0.8" transform="rotate(-24 188.9 -137.9)"/><ellipse cx="180.7" cy="-109.3" rx="3.2" ry="1.4" transform="rotate(-12 180.7 -109.3)"/><ellipse cx="193.6" cy="-135.0" rx="2.2" ry="1.0" transform="rotate(17 193.6 -135.0)"/><ellipse cx="215.2" cy="-112.2" rx="1.9" ry="0.9" transform="rotate(-27 215.2 -112.2)"/><ellipse cx="174.8" cy="-117.3" rx="3.0" ry="1.3" transform="rotate(-7 174.8 -117.3)"/><ellipse cx="218.4" cy="-127.1" rx="1.8" ry="0.8" transform="rotate(-30 218.4 -127.1)"/><ellipse cx="213.3" cy="-122.5" rx="1.7" ry="0.8" transform="rotate(-19 213.3 -122.5)"/><ellipse cx="191.7" cy="-127.5" rx="2.4" ry="1.1" transform="rotate(11 191.7 -127.5)"/><ellipse cx="181.4" cy="-106.0" rx="3.8" ry="1.7" transform="rotate(18 181.4 -106.0)"/><ellipse cx="179.6" cy="-131.0" rx="2.2" ry="1.0" transform="rotate(8 179.6 -131.0)"/><ellipse cx="182.3" cy="-132.0" rx="2.7" ry="1.2" transform="rotate(15 182.3 -132.0)"/><ellipse cx="202.3" cy="-102.6" rx="3.9" ry="1.7" transform="rotate(-28 202.3 -102.6)"/><ellipse cx="195.0" cy="-98.9" rx="1.6" ry="0.7" transform="rotate(19 195.0 -98.9)"/><ellipse cx="188.8" cy="-121.9" rx="3.0" ry="1.3" transform="rotate(-30 188.8 -121.9)"/><ellipse cx="204.6" cy="-128.5" rx="3.8" ry="1.7" transform="rotate(24 204.6 -128.5)"/><ellipse cx="207.3" cy="-109.4" rx="1.8" ry="0.8" transform="rotate(15 207.3 -109.4)"/><ellipse cx="201.8" cy="-116.1" rx="1.7" ry="0.8" transform="rotate(22 201.8 -116.1)"/><ellipse cx="195.7" cy="-107.6" rx="2.6" ry="1.1" transform="rotate(3 195.7 -107.6)"/><ellipse cx="171.4" cy="-108.9" rx="2.3" ry="1.0" transform="rotate(-1 171.4 -108.9)"/><ellipse cx="204.6" cy="-127.0" rx="1.9" ry="0.8" transform="rotate(20 204.6 -127.0)"/><ellipse cx="184.4" cy="-101.5" rx="3.5" ry="1.6" transform="rotate(-8 184.4 -101.5)"/><ellipse cx="190.8" cy="-113.6" rx="3.6" ry="1.6" transform="rotate(-3 190.8 -113.6)"/><ellipse cx="188.8" cy="-112.1" rx="2.0" ry="0.9" transform="rotate(22 188.8 -112.1)"/><ellipse cx="210.0" cy="-108.1" rx="3.0" ry="1.3" transform="rotate(1 210.0 -108.1)"/><ellipse cx="177.2" cy="-119.5" rx="1.9" ry="0.9" transform="rotate(19 177.2 -119.5)"/><ellipse cx="212.6" cy="-128.6" rx="2.1" ry="0.9" transform="rotate(25 212.6 -128.6)"/><ellipse cx="198.9" cy="-111.2" rx="3.0" ry="1.3" transform="rotate(20 198.9 -111.2)"/><ellipse cx="186.8" cy="-122.3" rx="3.9" ry="1.7" transform="rotate(-21 186.8 -122.3)"/><ellipse cx="179.5" cy="-102.3" rx="3.4" ry="1.5" transform="rotate(15 179.5 -102.3)"/><ellipse cx="219.0" cy="-110.6" rx="2.4" ry="1.1" transform="rotate(-29 219.0 -110.6)"/><ellipse cx="202.1" cy="-138.5" rx="1.6" ry="0.7" transform="rotate(-3 202.1 -138.5)"/><ellipse cx="208.9" cy="-126.2" rx="2.2" ry="1.0" transform="rotate(17 208.9 -126.2)"/><ellipse cx="168.6" cy="-111.9" rx="3.6" ry="1.6" transform="rotate(22 168.6 -111.9)"/><ellipse cx="192.0" cy="-128.0" rx="3.2" ry="1.4" transform="rotate(5 192.0 -128.0)"/><ellipse cx="173.8" cy="-117.6" rx="2.2" ry="1.0" transform="rotate(-18 173.8 -117.6)"/><ellipse cx="210.2" cy="-125.8" rx="1.7" ry="0.8" transform="rotate(29 210.2 -125.8)"/><ellipse cx="171.8" cy="-120.4" rx="2.3" ry="1.0" transform="rotate(-21 171.8 -120.4)"/><ellipse cx="182.4" cy="-103.0" rx="2.1" ry="0.9" transform="rotate(25 182.4 -103.0)"/><ellipse cx="186.3" cy="-100.9" rx="1.9" ry="0.8" transform="rotate(-3 186.3 -100.9)"/><ellipse cx="203.0" cy="-113.6" rx="2.8" ry="1.2" transform="rotate(-8 203.0 -113.6)"/><ellipse cx="182.4" cy="-121.5" rx="2.2" ry="1.0" transform="rotate(-11 182.4 -121.5)"/><ellipse cx="202.0" cy="-122.8" rx="2.5" ry="1.1" transform="rotate(21 202.0 -122.8)"/><ellipse cx="182.3" cy="-123.8" rx="4.0" ry="1.8" transform="rotate(-23 182.3 -123.8)"/><ellipse cx="197.8" cy="-117.3" rx="2.5" ry="1.1" transform="rotate(22 197.8 -117.3)"/><ellipse cx="192.3" cy="-108.5" rx="3.5" ry="1.5" transform="rotate(-25 192.3 -108.5)"/><ellipse cx="218.7" cy="-117.5" rx="1.7" ry="0.7" transform="rotate(2 218.7 -117.5)"/><ellipse cx="209.1" cy="-106.7" rx="3.6" ry="1.6" transform="rotate(-3 209.1 -106.7)"/><ellipse cx="192.1" cy="-103.2" rx="3.2" ry="1.4" transform="rotate(-27 192.1 -103.2)"/><ellipse cx="196.5" cy="-106.7" rx="2.7" ry="1.2" transform="rotate(-14 196.5 -106.7)"/><ellipse cx="187.5" cy="-128.0" rx="3.7" ry="1.7" transform="rotate(-9 187.5 -128.0)"/><ellipse cx="196.8" cy="-113.6" rx="1.8" ry="0.8" transform="rotate(-17 196.8 -113.6)"/><ellipse cx="209.2" cy="-128.2" rx="2.6" ry="1.1" transform="rotate(28 209.2 -128.2)"/><ellipse cx="220.0" cy="-123.0" rx="2.0" ry="0.9" transform="rotate(-10 220.0 -123.0)"/><ellipse cx="180.8" cy="-119.6" rx="2.3" ry="1.0" transform="rotate(-17 180.8 -119.6)"/><ellipse cx="196.8" cy="-101.5" rx="3.0" ry="1.3" transform="rotate(-3 196.8 -101.5)"/><ellipse cx="173.2" cy="-116.4" rx="3.2" ry="1.4" transform="rotate(-29 173.2 -116.4)"/><ellipse cx="206.2" cy="-130.9" rx="2.3" ry="1.0" transform="rotate(28 206.2 -130.9)"/><ellipse cx="196.1" cy="-131.5" rx="1.5" ry="0.7" transform="rotate(-4 196.1 -131.5)"/><ellipse cx="179.0" cy="-114.6" rx="1.7" ry="0.7" transform="rotate(5 179.0 -114.6)"/><ellipse cx="194.6" cy="-101.3" rx="2.8" ry="1.2" transform="rotate(-12 194.6 -101.3)"/><ellipse cx="204.3" cy="-131.5" rx="1.7" ry="0.7" transform="rotate(-13 204.3 -131.5)"/><ellipse cx="213.2" cy="-114.9" rx="3.7" ry="1.7" transform="rotate(26 213.2 -114.9)"/><ellipse cx="188.9" cy="-125.9" rx="2.0" ry="0.9" transform="rotate(-18 188.9 -125.9)"/><ellipse cx="179.4" cy="-107.5" rx="1.5" ry="0.7" transform="rotate(-1 179.4 -107.5)"/><ellipse cx="174.5" cy="-111.8" rx="3.5" ry="1.6" transform="rotate(-6 174.5 -111.8)"/><ellipse cx="183.4" cy="-125.7" rx="2.6" ry="1.1" transform="rotate(8 183.4 -125.7)"/><ellipse cx="214.9" cy="-114.5" rx="2.7" ry="1.2" transform="rotate(-19 214.9 -114.5)"/><ellipse cx="195.6" cy="-100.6" rx="2.3" ry="1.0" transform="rotate(-18 195.6 -100.6)"/><ellipse cx="190.9" cy="-104.8" rx="2.4" ry="1.1" transform="rotate(-9 190.9 -104.8)"/><ellipse cx="189.5" cy="-110.7" rx="2.7" ry="1.2" transform="rotate(6 189.5 -110.7)"/><ellipse cx="214.1" cy="-110.9" rx="2.2" ry="1.0" transform="rotate(29 214.1 -110.9)"/><ellipse cx="205.0" cy="-122.1" rx="3.2" ry="1.4" transform="rotate(-9 205.0 -122.1)"/><ellipse cx="216.0" cy="-106.9" rx="3.7" ry="1.7" transform="rotate(17 216.0 -106.9)"/><ellipse cx="176.8" cy="-134.7" rx="2.8" ry="1.3" transform="rotate(11 176.8 -134.7)"/><ellipse cx="180.1" cy="-134.9" rx="3.6" ry="1.6" transform="rotate(-12 180.1 -134.9)"/><ellipse cx="201.0" cy="-104.6" rx="2.9" ry="1.3" transform="rotate(-9 201.0 -104.6)"/><ellipse cx="212.4" cy="-133.8" rx="3.2" ry="1.4" transform="rotate(2 212.4 -133.8)"/><ellipse cx="191.1" cy="-127.8" rx="3.5" ry="1.5" transform="rotate(-22 191.1 -127.8)"/><ellipse cx="214.1" cy="-128.6" rx="2.1" ry="1.0" transform="rotate(-19 214.1 -128.6)"/><ellipse cx="179.5" cy="-127.5" rx="3.2" ry="1.4" transform="rotate(-24 179.5 -127.5)"/><ellipse cx="208.8" cy="-128.8" rx="2.5" ry="1.1" transform="rotate(14 208.8 -128.8)"/><ellipse cx="180.3" cy="-127.8" rx="2.2" ry="1.0" transform="rotate(-2 180.3 -127.8)"/><ellipse cx="209.7" cy="-117.3" rx="3.5" ry="1.6" transform="rotate(-23 209.7 -117.3)"/><ellipse cx="218.1" cy="-109.5" rx="2.4" ry="1.1" transform="rotate(2 218.1 -109.5)"/><ellipse cx="174.6" cy="-128.4" rx="2.2" ry="1.0" transform="rotate(16 174.6 -128.4)"/><ellipse cx="221.9" cy="-119.2" rx="2.2" ry="1.0" transform="rotate(8 221.9 -119.2)"/><ellipse cx="187.1" cy="-102.5" rx="2.4" ry="1.1" transform="rotate(6 187.1 -102.5)"/><ellipse cx="184.1" cy="-102.3" rx="3.4" ry="1.5" transform="rotate(-18 184.1 -102.3)"/><ellipse cx="196.5" cy="-139.2" rx="2.0" ry="0.9" transform="rotate(-19 196.5 -139.2)"/><ellipse cx="221.0" cy="-127.8" rx="1.8" ry="0.8" transform="rotate(17 221.0 -127.8)"/><ellipse cx="208.8" cy="-123.8" rx="3.4" ry="1.5" transform="rotate(-12 208.8 -123.8)"/><ellipse cx="200.2" cy="-133.6" rx="2.6" ry="1.2" transform="rotate(-23 200.2 -133.6)"/><ellipse cx="181.5" cy="-133.4" rx="2.2" ry="1.0" transform="rotate(-27 181.5 -133.4)"/><ellipse cx="207.7" cy="-113.6" rx="4.0" ry="1.8" transform="rotate(15 207.7 -113.6)"/><ellipse cx="215.2" cy="-130.1" rx="1.8" ry="0.8" transform="rotate(-7 215.2 -130.1)"/><ellipse cx="220.7" cy="-125.2" rx="3.9" ry="1.8" transform="rotate(19 220.7 -125.2)"/><ellipse cx="189.3" cy="-136.7" rx="3.7" ry="1.7" transform="rotate(-4 189.3 -136.7)"/><ellipse cx="211.1" cy="-116.9" rx="1.5" ry="0.7" transform="rotate(-14 211.1 -116.9)"/><ellipse cx="182.6" cy="-125.1" rx="2.1" ry="0.9" transform="rotate(-24 182.6 -125.1)"/><ellipse cx="182.4" cy="-107.8" rx="2.9" ry="1.3" transform="rotate(27 182.4 -107.8)"/><ellipse cx="208.5" cy="-114.8" rx="1.6" ry="0.7" transform="rotate(26 208.5 -114.8)"/><ellipse cx="179.6" cy="-131.6" rx="3.5" ry="1.6" transform="rotate(-30 179.6 -131.6)"/><ellipse cx="209.0" cy="-126.1" rx="3.0" ry="1.3" transform="rotate(-6 209.0 -126.1)"/><ellipse cx="195.0" cy="-130.6" rx="2.1" ry="1.0" transform="rotate(-15 195.0 -130.6)"/><ellipse cx="192.3" cy="-133.0" rx="1.8" ry="0.8" transform="rotate(-9 192.3 -133.0)"/><ellipse cx="179.4" cy="-124.5" rx="2.9" ry="1.3" transform="rotate(21 179.4 -124.5)"/><ellipse cx="179.0" cy="-133.5" rx="2.2" ry="1.0" transform="rotate(22 179.0 -133.5)"/><ellipse cx="228.4" cy="-109.4" rx="1.5" ry="0.7" transform="rotate(-25 228.4 -109.4)"/><ellipse cx="220.6" cy="-125.8" rx="3.3" ry="1.5" transform="rotate(0 220.6 -125.8)"/><ellipse cx="216.0" cy="-104.9" rx="2.9" ry="1.3" transform="rotate(30 216.0 -104.9)"/><ellipse cx="222.7" cy="-84.3" rx="3.6" ry="1.6" transform="rotate(9 222.7 -84.3)"/><ellipse cx="216.5" cy="-93.1" rx="3.3" ry="1.5" transform="rotate(26 216.5 -93.1)"/><ellipse cx="225.7" cy="-113.7" rx="3.3" ry="1.5" transform="rotate(19 225.7 -113.7)"/><ellipse cx="212.5" cy="-87.7" rx="2.4" ry="1.1" transform="rotate(-18 212.5 -87.7)"/><ellipse cx="230.6" cy="-102.8" rx="3.3" ry="1.5" transform="rotate(-27 230.6 -102.8)"/><ellipse cx="226.5" cy="-97.5" rx="2.0" ry="0.9" transform="rotate(14 226.5 -97.5)"/><ellipse cx="223.6" cy="-85.3" rx="2.8" ry="1.3" transform="rotate(-9 223.6 -85.3)"/><ellipse cx="225.1" cy="-115.8" rx="2.7" ry="1.2" transform="rotate(10 225.1 -115.8)"/><ellipse cx="215.7" cy="-96.8" rx="3.8" ry="1.7" transform="rotate(15 215.7 -96.8)"/><ellipse cx="211.7" cy="-107.7" rx="3.0" ry="1.3" transform="rotate(-12 211.7 -107.7)"/><ellipse cx="228.2" cy="-94.8" rx="3.7" ry="1.6" transform="rotate(-24 228.2 -94.8)"/><ellipse cx="227.6" cy="-104.6" rx="4.0" ry="1.8" transform="rotate(16 227.6 -104.6)"/><ellipse cx="219.3" cy="-91.6" rx="3.7" ry="1.6" transform="rotate(29 219.3 -91.6)"/><ellipse cx="223.3" cy="-120.6" rx="2.8" ry="1.2" transform="rotate(17 223.3 -120.6)"/><ellipse cx="225.0" cy="-123.1" rx="2.2" ry="1.0" transform="rotate(20 225.0 -123.1)"/><ellipse cx="229.0" cy="-108.2" rx="1.5" ry="0.7" transform="rotate(-19 229.0 -108.2)"/><ellipse cx="215.4" cy="-115.9" rx="3.8" ry="1.7" transform="rotate(9 215.4 -115.9)"/><ellipse cx="218.6" cy="-112.0" rx="2.8" ry="1.2" transform="rotate(13 218.6 -112.0)"/><ellipse cx="230.2" cy="-114.6" rx="2.1" ry="0.9" transform="rotate(0 230.2 -114.6)"/><ellipse cx="223.7" cy="-103.8" rx="1.6" ry="0.7" transform="rotate(-19 223.7 -103.8)"/><ellipse cx="219.3" cy="-116.8" rx="3.2" ry="1.4" transform="rotate(20 219.3 -116.8)"/><ellipse cx="221.0" cy="-107.4" rx="3.2" ry="1.4" transform="rotate(18 221.0 -107.4)"/><ellipse cx="216.7" cy="-124.8" rx="3.5" ry="1.6" transform="rotate(7 216.7 -124.8)"/><ellipse cx="226.1" cy="-116.4" rx="1.7" ry="0.8" transform="rotate(-13 226.1 -116.4)"/><ellipse cx="226.6" cy="-108.7" rx="2.6" ry="1.2" transform="rotate(22 226.6 -108.7)"/><ellipse cx="215.7" cy="-123.0" rx="2.6" ry="1.2" transform="rotate(0 215.7 -123.0)"/><ellipse cx="225.0" cy="-97.7" rx="1.8" ry="0.8" transform="rotate(2 225.0 -97.7)"/><ellipse cx="216.8" cy="-103.9" rx="3.0" ry="1.4" transform="rotate(-24 216.8 -103.9)"/><ellipse cx="218.6" cy="-100.2" rx="2.6" ry="1.2" transform="rotate(-21 218.6 -100.2)"/><ellipse cx="227.0" cy="-108.3" rx="3.5" ry="1.6" transform="rotate(-3 227.0 -108.3)"/><ellipse cx="214.8" cy="-82.8" rx="2.1" ry="0.9" transform="rotate(1 214.8 -82.8)"/><ellipse cx="212.2" cy="-121.7" rx="3.2" ry="1.4" transform="rotate(-27 212.2 -121.7)"/><ellipse cx="208.5" cy="-96.3" rx="3.6" ry="1.6" transform="rotate(-8 208.5 -96.3)"/><ellipse cx="224.5" cy="-93.6" rx="3.3" ry="1.5" transform="rotate(-19 224.5 -93.6)"/><ellipse cx="225.0" cy="-110.8" rx="3.2" ry="1.4" transform="rotate(12 225.0 -110.8)"/><ellipse cx="220.5" cy="-85.1" rx="3.0" ry="1.3" transform="rotate(-14 220.5 -85.1)"/><ellipse cx="210.5" cy="-106.7" rx="3.9" ry="1.7" transform="rotate(-13 210.5 -106.7)"/><ellipse cx="224.1" cy="-87.2" rx="2.9" ry="1.3" transform="rotate(-1 224.1 -87.2)"/><ellipse cx="224.8" cy="-108.6" rx="2.7" ry="1.2" transform="rotate(-2 224.8 -108.6)"/><ellipse cx="222.7" cy="-87.1" rx="2.6" ry="1.1" transform="rotate(-7 222.7 -87.1)"/><ellipse cx="221.9" cy="-127.1" rx="3.9" ry="1.7" transform="rotate(-17 221.9 -127.1)"/><ellipse cx="211.7" cy="-85.5" rx="1.6" ry="0.7" transform="rotate(-25 211.7 -85.5)"/><ellipse cx="231.2" cy="-93.3" rx="2.7" ry="1.2" transform="rotate(-4 231.2 -93.3)"/><ellipse cx="229.5" cy="-89.4" rx="3.9" ry="1.8" transform="rotate(11 229.5 -89.4)"/><ellipse cx="228.0" cy="-112.6" rx="2.2" ry="1.0" transform="rotate(-19 228.0 -112.6)"/><ellipse cx="218.5" cy="-93.8" rx="2.4" ry="1.1" transform="rotate(-27 218.5 -93.8)"/><ellipse cx="231.4" cy="-96.9" rx="3.6" ry="1.6" transform="rotate(19 231.4 -96.9)"/><ellipse cx="215.1" cy="-89.6" rx="2.8" ry="1.2" transform="rotate(17 215.1 -89.6)"/><ellipse cx="217.2" cy="-86.2" rx="2.8" ry="1.3" transform="rotate(20 217.2 -86.2)"/><ellipse cx="219.7" cy="-101.7" rx="2.5" ry="1.1" transform="rotate(23 219.7 -101.7)"/><ellipse cx="224.5" cy="-85.4" rx="1.8" ry="0.8" transform="rotate(-14 224.5 -85.4)"/><ellipse cx="217.3" cy="-108.4" rx="2.6" ry="1.1" transform="rotate(5 217.3 -108.4)"/><ellipse cx="211.9" cy="-89.0" rx="3.6" ry="1.6" transform="rotate(-13 211.9 -89.0)"/><ellipse cx="220.8" cy="-124.2" rx="2.9" ry="1.3" transform="rotate(5 220.8 -124.2)"/><ellipse cx="210.4" cy="-111.6" rx="3.2" ry="1.4" transform="rotate(-14 210.4 -111.6)"/><ellipse cx="214.0" cy="-119.7" rx="2.6" ry="1.2" transform="rotate(24 214.0 -119.7)"/><ellipse cx="216.5" cy="-86.0" rx="2.9" ry="1.3" transform="rotate(6 216.5 -86.0)"/><ellipse cx="224.1" cy="-84.4" rx="1.7" ry="0.8" transform="rotate(2 224.1 -84.4)"/><ellipse cx="210.3" cy="-96.6" rx="3.6" ry="1.6" transform="rotate(29 210.3 -96.6)"/><ellipse cx="221.6" cy="-79.5" rx="2.6" ry="1.2" transform="rotate(0 221.6 -79.5)"/><ellipse cx="231.1" cy="-97.0" rx="2.0" ry="0.9" transform="rotate(-13 231.1 -97.0)"/><ellipse cx="218.0" cy="-91.6" rx="2.2" ry="1.0" transform="rotate(-13 218.0 -91.6)"/><ellipse cx="212.8" cy="-105.9" rx="3.3" ry="1.5" transform="rotate(26 212.8 -105.9)"/><ellipse cx="227.0" cy="-109.1" rx="3.2" ry="1.4" transform="rotate(14 227.0 -109.1)"/><ellipse cx="218.8" cy="-118.2" rx="1.9" ry="0.9" transform="rotate(15 218.8 -118.2)"/><ellipse cx="216.0" cy="-115.0" rx="3.1" ry="1.4" transform="rotate(-26 216.0 -115.0)"/><ellipse cx="222.5" cy="-125.7" rx="3.9" ry="1.7" transform="rotate(-23 222.5 -125.7)"/><ellipse cx="216.1" cy="-123.2" rx="1.8" ry="0.8" transform="rotate(7 216.1 -123.2)"/><ellipse cx="222.2" cy="-92.1" rx="1.5" ry="0.7" transform="rotate(-13 222.2 -92.1)"/><ellipse cx="225.6" cy="-118.2" rx="3.4" ry="1.5" transform="rotate(28 225.6 -118.2)"/><ellipse cx="226.7" cy="-84.3" rx="3.7" ry="1.6" transform="rotate(9 226.7 -84.3)"/><ellipse cx="217.5" cy="-93.9" rx="2.5" ry="1.1" transform="rotate(-8 217.5 -93.9)"/><ellipse cx="219.4" cy="-82.6" rx="3.0" ry="1.4" transform="rotate(-14 219.4 -82.6)"/><ellipse cx="224.1" cy="-87.4" rx="3.2" ry="1.4" transform="rotate(10 224.1 -87.4)"/><ellipse cx="212.7" cy="-120.9" rx="3.3" ry="1.5" transform="rotate(-3 212.7 -120.9)"/><ellipse cx="219.8" cy="-123.0" rx="2.3" ry="1.0" transform="rotate(-20 219.8 -123.0)"/><ellipse cx="212.6" cy="-88.3" rx="3.3" ry="1.5" transform="rotate(-12 212.6 -88.3)"/><ellipse cx="216.8" cy="-104.6" rx="2.9" ry="1.3" transform="rotate(-3 216.8 -104.6)"/><ellipse cx="221.4" cy="-125.6" rx="1.6" ry="0.7" transform="rotate(28 221.4 -125.6)"/><ellipse cx="225.8" cy="-81.5" rx="3.9" ry="1.7" transform="rotate(-17 225.8 -81.5)"/><ellipse cx="218.9" cy="-93.8" rx="3.7" ry="1.7" transform="rotate(15 218.9 -93.8)"/><ellipse cx="230.9" cy="-107.5" rx="2.3" ry="1.0" transform="rotate(16 230.9 -107.5)"/><ellipse cx="215.7" cy="-91.7" rx="2.5" ry="1.1" transform="rotate(12 215.7 -91.7)"/><ellipse cx="216.3" cy="-85.9" rx="2.9" ry="1.3" transform="rotate(18 216.3 -85.9)"/><ellipse cx="212.2" cy="-99.9" rx="2.8" ry="1.3" transform="rotate(-2 212.2 -99.9)"/><ellipse cx="219.6" cy="-110.9" rx="1.9" ry="0.8" transform="rotate(-28 219.6 -110.9)"/><ellipse cx="210.4" cy="-91.0" rx="3.0" ry="1.3" transform="rotate(8 210.4 -91.0)"/><ellipse cx="230.4" cy="-111.7" rx="2.2" ry="1.0" transform="rotate(-17 230.4 -111.7)"/><ellipse cx="214.3" cy="-105.6" rx="2.9" ry="1.3" transform="rotate(-25 214.3 -105.6)"/><ellipse cx="212.0" cy="-89.6" rx="2.1" ry="0.9" transform="rotate(-21 212.0 -89.6)"/><ellipse cx="220.0" cy="-113.7" rx="3.7" ry="1.6" transform="rotate(7 220.0 -113.7)"/><ellipse cx="227.0" cy="-114.4" rx="2.7" ry="1.2" transform="rotate(-15 227.0 -114.4)"/><ellipse cx="231.3" cy="-94.2" rx="2.0" ry="0.9" transform="rotate(-25 231.3 -94.2)"/><ellipse cx="228.3" cy="-110.3" rx="2.9" ry="1.3" transform="rotate(25 228.3 -110.3)"/><ellipse cx="219.4" cy="-115.3" rx="2.2" ry="1.0" transform="rotate(9 219.4 -115.3)"/><ellipse cx="217.6" cy="-113.5" rx="2.1" ry="0.9" transform="rotate(1 217.6 -113.5)"/><ellipse cx="230.4" cy="-94.8" rx="3.1" ry="1.4" transform="rotate(-21 230.4 -94.8)"/><ellipse cx="211.7" cy="-111.9" rx="1.7" ry="0.7" transform="rotate(-4 211.7 -111.9)"/><ellipse cx="222.2" cy="-118.9" rx="3.3" ry="1.5" transform="rotate(-16 222.2 -118.9)"/><ellipse cx="230.2" cy="-103.1" rx="2.8" ry="1.3" transform="rotate(-29 230.2 -103.1)"/><ellipse cx="219.7" cy="-102.0" rx="2.5" ry="1.1" transform="rotate(-19 219.7 -102.0)"/><ellipse cx="220.3" cy="-89.2" rx="1.8" ry="0.8" transform="rotate(-13 220.3 -89.2)"/><ellipse cx="215.6" cy="-103.1" rx="2.9" ry="1.3" transform="rotate(27 215.6 -103.1)"/><ellipse cx="217.9" cy="-126.6" rx="1.7" ry="0.8" transform="rotate(10 217.9 -126.6)"/><ellipse cx="220.8" cy="-79.0" rx="2.7" ry="1.2" transform="rotate(13 220.8 -79.0)"/><ellipse cx="220.8" cy="-111.7" rx="1.7" ry="0.8" transform="rotate(19 220.8 -111.7)"/><ellipse cx="223.5" cy="-117.6" rx="1.5" ry="0.7" transform="rotate(-29 223.5 -117.6)"/><ellipse cx="223.3" cy="-122.4" rx="2.4" ry="1.1" transform="rotate(11 223.3 -122.4)"/><ellipse cx="220.4" cy="-104.8" rx="3.3" ry="1.5" transform="rotate(29 220.4 -104.8)"/><ellipse cx="228.0" cy="-119.8" rx="2.5" ry="1.1" transform="rotate(6 228.0 -119.8)"/><ellipse cx="228.4" cy="-88.4" rx="3.1" ry="1.4" transform="rotate(-6 228.4 -88.4)"/><ellipse cx="225.0" cy="-99.6" rx="2.5" ry="1.1" transform="rotate(25 225.0 -99.6)"/><ellipse cx="208.8" cy="-98.8" rx="1.9" ry="0.8" transform="rotate(-15 208.8 -98.8)"/><ellipse cx="220.6" cy="-89.7" rx="3.4" ry="1.5" transform="rotate(-8 220.6 -89.7)"/><ellipse cx="215.7" cy="-84.4" rx="2.6" ry="1.1" transform="rotate(23 215.7 -84.4)"/><ellipse cx="216.3" cy="-124.1" rx="2.5" ry="1.1" transform="rotate(-6 216.3 -124.1)"/><ellipse cx="208.4" cy="-95.6" rx="3.8" ry="1.7" transform="rotate(4 208.4 -95.6)"/><ellipse cx="216.8" cy="-102.6" rx="3.6" ry="1.6" transform="rotate(7 216.8 -102.6)"/><ellipse cx="215.8" cy="-97.5" rx="2.6" ry="1.2" transform="rotate(13 215.8 -97.5)"/><ellipse cx="219.3" cy="-90.2" rx="2.7" ry="1.2" transform="rotate(-0 219.3 -90.2)"/><ellipse cx="223.2" cy="-102.6" rx="2.4" ry="1.1" transform="rotate(13 223.2 -102.6)"/><ellipse cx="218.9" cy="-100.7" rx="2.1" ry="0.9" transform="rotate(-18 218.9 -100.7)"/><ellipse cx="220.6" cy="-114.6" rx="3.9" ry="1.7" transform="rotate(-13 220.6 -114.6)"/><ellipse cx="220.8" cy="-99.8" rx="2.7" ry="1.2" transform="rotate(1 220.8 -99.8)"/><ellipse cx="222.0" cy="-122.6" rx="2.8" ry="1.2" transform="rotate(-27 222.0 -122.6)"/><ellipse cx="225.6" cy="-108.3" rx="2.0" ry="0.9" transform="rotate(-20 225.6 -108.3)"/><ellipse cx="211.6" cy="-113.3" rx="2.2" ry="1.0" transform="rotate(-15 211.6 -113.3)"/><ellipse cx="229.6" cy="-101.5" rx="3.2" ry="1.4" transform="rotate(-23 229.6 -101.5)"/><ellipse cx="220.7" cy="-81.5" rx="3.2" ry="1.4" transform="rotate(-22 220.7 -81.5)"/><ellipse cx="230.5" cy="-104.4" rx="3.2" ry="1.4" transform="rotate(-11 230.5 -104.4)"/><ellipse cx="228.1" cy="-106.3" rx="3.0" ry="1.4" transform="rotate(29 228.1 -106.3)"/><ellipse cx="222.7" cy="-111.8" rx="1.8" ry="0.8" transform="rotate(-17 222.7 -111.8)"/><ellipse cx="228.6" cy="-87.0" rx="2.8" ry="1.2" transform="rotate(-1 228.6 -87.0)"/><ellipse cx="214.2" cy="-90.1" rx="2.5" ry="1.1" transform="rotate(14 214.2 -90.1)"/><ellipse cx="210.2" cy="-91.2" rx="3.6" ry="1.6" transform="rotate(22 210.2 -91.2)"/><ellipse cx="220.1" cy="-113.1" rx="2.5" ry="1.1" transform="rotate(20 220.1 -113.1)"/><ellipse cx="214.3" cy="-88.2" rx="2.0" ry="0.9" transform="rotate(19 214.3 -88.2)"/><ellipse cx="216.4" cy="-90.0" rx="3.5" ry="1.6" transform="rotate(-25 216.4 -90.0)"/><ellipse cx="228.1" cy="-102.2" rx="2.6" ry="1.1" transform="rotate(-23 228.1 -102.2)"/><ellipse cx="211.6" cy="-89.3" rx="3.7" ry="1.6" transform="rotate(25 211.6 -89.3)"/><ellipse cx="221.0" cy="-109.3" rx="2.4" ry="1.0" transform="rotate(-3 221.0 -109.3)"/><ellipse cx="230.8" cy="-99.0" rx="2.1" ry="1.0" transform="rotate(17 230.8 -99.0)"/><ellipse cx="217.2" cy="-114.2" rx="2.3" ry="1.0" transform="rotate(-3 217.2 -114.2)"/><ellipse cx="220.5" cy="-100.3" rx="2.5" ry="1.1" transform="rotate(-16 220.5 -100.3)"/><ellipse cx="219.8" cy="-81.0" rx="3.3" ry="1.5" transform="rotate(-5 219.8 -81.0)"/><ellipse cx="230.7" cy="-99.5" rx="2.1" ry="0.9" transform="rotate(-24 230.7 -99.5)"/><ellipse cx="220.3" cy="-126.3" rx="2.1" ry="0.9" transform="rotate(3 220.3 -126.3)"/><ellipse cx="229.2" cy="-66.7" rx="2.3" ry="1.0" transform="rotate(-21 229.2 -66.7)"/><ellipse cx="232.6" cy="-43.3" rx="3.5" ry="1.5" transform="rotate(-19 232.6 -43.3)"/><ellipse cx="221.8" cy="-62.2" rx="3.3" ry="1.5" transform="rotate(-7 221.8 -62.2)"/><ellipse cx="222.0" cy="-74.9" rx="1.6" ry="0.7" transform="rotate(4 222.0 -74.9)"/><ellipse cx="223.1" cy="-55.9" rx="1.5" ry="0.7" transform="rotate(-14 223.1 -55.9)"/><ellipse cx="222.6" cy="-85.4" rx="2.6" ry="1.1" transform="rotate(22 222.6 -85.4)"/><ellipse cx="223.0" cy="-68.1" rx="2.6" ry="1.1" transform="rotate(21 223.0 -68.1)"/><ellipse cx="217.8" cy="-46.5" rx="3.3" ry="1.4" transform="rotate(-21 217.8 -46.5)"/><ellipse cx="217.9" cy="-42.7" rx="2.9" ry="1.3" transform="rotate(12 217.9 -42.7)"/><ellipse cx="223.4" cy="-24.1" rx="2.6" ry="1.2" transform="rotate(-24 223.4 -24.1)"/><ellipse cx="226.2" cy="-84.7" rx="2.9" ry="1.3" transform="rotate(-5 226.2 -84.7)"/><ellipse cx="220.0" cy="-31.1" rx="2.4" ry="1.1" transform="rotate(-14 220.0 -31.1)"/><ellipse cx="229.4" cy="-56.5" rx="2.0" ry="0.9" transform="rotate(10 229.4 -56.5)"/><ellipse cx="229.6" cy="-48.6" rx="2.9" ry="1.3" transform="rotate(19 229.6 -48.6)"/><ellipse cx="223.5" cy="-41.4" rx="3.9" ry="1.7" transform="rotate(-29 223.5 -41.4)"/><ellipse cx="218.5" cy="-36.4" rx="3.9" ry="1.7" transform="rotate(-9 218.5 -36.4)"/><ellipse cx="224.4" cy="-29.6" rx="2.4" ry="1.1" transform="rotate(-21 224.4 -29.6)"/><ellipse cx="229.4" cy="-65.0" rx="3.3" ry="1.5" transform="rotate(-13 229.4 -65.0)"/><ellipse cx="219.9" cy="-80.0" rx="2.0" ry="0.9" transform="rotate(27 219.9 -80.0)"/><ellipse cx="222.5" cy="-18.7" rx="3.8" ry="1.7" transform="rotate(-2 222.5 -18.7)"/><ellipse cx="229.4" cy="-59.1" rx="2.5" ry="1.1" transform="rotate(25 229.4 -59.1)"/><ellipse cx="222.5" cy="-54.5" rx="1.8" ry="0.8" transform="rotate(2 222.5 -54.5)"/><ellipse cx="223.0" cy="-41.9" rx="3.5" ry="1.6" transform="rotate(-10 223.0 -41.9)"/><ellipse cx="228.7" cy="-62.1" rx="1.9" ry="0.8" transform="rotate(-5 228.7 -62.1)"/><ellipse cx="228.2" cy="-80.6" rx="2.9" ry="1.3" transform="rotate(-15 228.2 -80.6)"/><ellipse cx="219.6" cy="-52.6" rx="2.4" ry="1.0" transform="rotate(-30 219.6 -52.6)"/><ellipse cx="232.9" cy="-45.2" rx="3.4" ry="1.5" transform="rotate(-15 232.9 -45.2)"/><ellipse cx="222.8" cy="-54.3" rx="3.5" ry="1.6" transform="rotate(7 222.8 -54.3)"/><ellipse cx="223.1" cy="-73.2" rx="2.5" ry="1.1" transform="rotate(19 223.1 -73.2)"/><ellipse cx="223.1" cy="-40.0" rx="1.7" ry="0.8" transform="rotate(25 223.1 -40.0)"/><ellipse cx="223.8" cy="-40.2" rx="2.9" ry="1.3" transform="rotate(-22 223.8 -40.2)"/><ellipse cx="217.1" cy="-34.9" rx="2.0" ry="0.9" transform="rotate(-5 217.1 -34.9)"/><ellipse cx="231.9" cy="-63.7" rx="3.6" ry="1.6" transform="rotate(-28 231.9 -63.7)"/><ellipse cx="230.9" cy="-54.1" rx="1.8" ry="0.8" transform="rotate(29 230.9 -54.1)"/><ellipse cx="230.6" cy="-23.7" rx="1.5" ry="0.7" transform="rotate(-25 230.6 -23.7)"/><ellipse cx="217.2" cy="-44.5" rx="2.9" ry="1.3" transform="rotate(19 217.2 -44.5)"/><ellipse cx="230.2" cy="-29.5" rx="2.2" ry="1.0" transform="rotate(27 230.2 -29.5)"/><ellipse cx="218.9" cy="-71.2" rx="1.8" ry="0.8" transform="rotate(25 218.9 -71.2)"/><ellipse cx="223.2" cy="-33.0" rx="2.5" ry="1.1" transform="rotate(17 223.2 -33.0)"/><ellipse cx="221.4" cy="-26.6" rx="3.0" ry="1.3" transform="rotate(-15 221.4 -26.6)"/><ellipse cx="228.4" cy="-33.4" rx="3.2" ry="1.4" transform="rotate(11 228.4 -33.4)"/><ellipse cx="225.9" cy="-20.2" rx="3.5" ry="1.6" transform="rotate(12 225.9 -20.2)"/><ellipse cx="224.9" cy="-42.4" rx="3.9" ry="1.7" transform="rotate(13 224.9 -42.4)"/><ellipse cx="223.0" cy="-17.8" rx="2.9" ry="1.3" transform="rotate(8 223.0 -17.8)"/><ellipse cx="219.5" cy="-25.9" rx="2.4" ry="1.1" transform="rotate(-7 219.5 -25.9)"/><ellipse cx="220.7" cy="-21.0" rx="3.6" ry="1.6" transform="rotate(-13 220.7 -21.0)"/><ellipse cx="228.2" cy="-41.0" rx="3.3" ry="1.5" transform="rotate(-9 228.2 -41.0)"/><ellipse cx="232.5" cy="-47.1" rx="2.5" ry="1.1" transform="rotate(-26 232.5 -47.1)"/><ellipse cx="224.1" cy="-75.7" rx="3.6" ry="1.6" transform="rotate(20 224.1 -75.7)"/><ellipse cx="228.0" cy="-80.5" rx="2.4" ry="1.1" transform="rotate(19 228.0 -80.5)"/><ellipse cx="216.9" cy="-48.4" rx="2.0" ry="0.9" transform="rotate(8 216.9 -48.4)"/><ellipse cx="231.7" cy="-34.0" rx="1.9" ry="0.8" transform="rotate(4 231.7 -34.0)"/><ellipse cx="228.7" cy="-77.5" rx="3.6" ry="1.6" transform="rotate(-4 228.7 -77.5)"/><ellipse cx="232.3" cy="-33.7" rx="2.2" ry="1.0" transform="rotate(22 232.3 -33.7)"/><ellipse cx="219.1" cy="-36.2" rx="2.8" ry="1.2" transform="rotate(3 219.1 -36.2)"/><ellipse cx="225.5" cy="-77.2" rx="1.9" ry="0.8" transform="rotate(2 225.5 -77.2)"/><ellipse cx="231.1" cy="-30.3" rx="1.9" ry="0.8" transform="rotate(-8 231.1 -30.3)"/><ellipse cx="219.7" cy="-61.0" rx="3.7" ry="1.6" transform="rotate(18 219.7 -61.0)"/><ellipse cx="221.2" cy="-28.3" rx="3.3" ry="1.5" transform="rotate(1 221.2 -28.3)"/><ellipse cx="220.7" cy="-65.6" rx="2.9" ry="1.3" transform="rotate(6 220.7 -65.6)"/><ellipse cx="228.5" cy="-62.3" rx="3.5" ry="1.5" transform="rotate(-17 228.5 -62.3)"/><ellipse cx="223.1" cy="-32.1" rx="3.8" ry="1.7" transform="rotate(-24 223.1 -32.1)"/><ellipse cx="222.7" cy="-24.7" rx="3.2" ry="1.4" transform="rotate(10 222.7 -24.7)"/><ellipse cx="228.3" cy="-33.4" rx="3.3" ry="1.4" transform="rotate(-21 228.3 -33.4)"/><ellipse cx="230.1" cy="-26.1" rx="1.4" ry="0.6" transform="rotate(-25 230.1 -26.1)"/><ellipse cx="227.3" cy="-18.1" rx="2.3" ry="1.0" transform="rotate(-4 227.3 -18.1)"/><ellipse cx="215.9" cy="-58.2" rx="1.5" ry="0.7" transform="rotate(-18 215.9 -58.2)"/><ellipse cx="218.3" cy="-32.2" rx="1.8" ry="0.8" transform="rotate(-4 218.3 -32.2)"/><ellipse cx="222.1" cy="-53.3" rx="2.3" ry="1.0" transform="rotate(-26 222.1 -53.3)"/><ellipse cx="225.0" cy="-51.4" rx="1.8" ry="0.8" transform="rotate(7 225.0 -51.4)"/><ellipse cx="225.0" cy="-21.5" rx="2.3" ry="1.0" transform="rotate(29 225.0 -21.5)"/><ellipse cx="219.3" cy="-58.5" rx="1.9" ry="0.8" transform="rotate(-1 219.3 -58.5)"/><ellipse cx="225.3" cy="-80.4" rx="3.2" ry="1.4" transform="rotate(1 225.3 -80.4)"/><ellipse cx="229.4" cy="-58.7" rx="2.8" ry="1.3" transform="rotate(27 229.4 -58.7)"/><ellipse cx="225.7" cy="-74.0" rx="3.4" ry="1.5" transform="rotate(16 225.7 -74.0)"/><ellipse cx="222.6" cy="-26.8" rx="3.3" ry="1.5" transform="rotate(-8 222.6 -26.8)"/><ellipse cx="220.3" cy="-27.5" rx="1.6" ry="0.7" transform="rotate(-14 220.3 -27.5)"/><ellipse cx="228.7" cy="-50.9" rx="3.5" ry="1.5" transform="rotate(-30 228.7 -50.9)"/><ellipse cx="221.9" cy="-24.5" rx="2.2" ry="1.0" transform="rotate(27 221.9 -24.5)"/><ellipse cx="229.0" cy="-54.6" rx="1.8" ry="0.8" transform="rotate(25 229.0 -54.6)"/><ellipse cx="226.0" cy="-75.0" rx="1.6" ry="0.7" transform="rotate(-29 226.0 -75.0)"/><ellipse cx="221.4" cy="-77.8" rx="2.6" ry="1.2" transform="rotate(-10 221.4 -77.8)"/><ellipse cx="223.3" cy="-27.1" rx="2.5" ry="1.1" transform="rotate(7 223.3 -27.1)"/><ellipse cx="219.7" cy="-38.3" rx="2.0" ry="0.9" transform="rotate(10 219.7 -38.3)"/><ellipse cx="227.8" cy="-55.5" rx="3.4" ry="1.5" transform="rotate(9 227.8 -55.5)"/><ellipse cx="224.6" cy="-35.8" rx="3.5" ry="1.6" transform="rotate(-21 224.6 -35.8)"/><ellipse cx="226.2" cy="-41.8" rx="3.5" ry="1.6" transform="rotate(-7 226.2 -41.8)"/><ellipse cx="229.0" cy="-49.2" rx="2.7" ry="1.2" transform="rotate(-2 229.0 -49.2)"/><ellipse cx="229.2" cy="-22.1" rx="3.2" ry="1.4" transform="rotate(-14 229.2 -22.1)"/><ellipse cx="222.3" cy="-32.4" rx="1.5" ry="0.7" transform="rotate(7 222.3 -32.4)"/><ellipse cx="223.1" cy="-19.6" rx="3.6" ry="1.6" transform="rotate(-11 223.1 -19.6)"/><ellipse cx="223.0" cy="-27.5" rx="2.6" ry="1.2" transform="rotate(-27 223.0 -27.5)"/><ellipse cx="220.3" cy="-36.1" rx="1.7" ry="0.8" transform="rotate(20 220.3 -36.1)"/><ellipse cx="222.1" cy="-73.8" rx="1.6" ry="0.7" transform="rotate(14 222.1 -73.8)"/><ellipse cx="218.0" cy="-25.5" rx="3.1" ry="1.4" transform="rotate(-16 218.0 -25.5)"/><ellipse cx="224.3" cy="-77.8" rx="2.3" ry="1.0" transform="rotate(18 224.3 -77.8)"/><ellipse cx="222.5" cy="-37.1" rx="1.5" ry="0.7" transform="rotate(7 222.5 -37.1)"/><ellipse cx="223.7" cy="-34.8" rx="1.6" ry="0.7" transform="rotate(16 223.7 -34.8)"/><ellipse cx="222.7" cy="-15.6" rx="3.7" ry="1.6" transform="rotate(19 222.7 -15.6)"/><ellipse cx="225.6" cy="-13.9" rx="3.0" ry="1.3" transform="rotate(21 225.6 -13.9)"/><ellipse cx="228.5" cy="-60.8" rx="2.4" ry="1.1" transform="rotate(24 228.5 -60.8)"/><ellipse cx="223.5" cy="-38.1" rx="1.5" ry="0.7" transform="rotate(3 223.5 -38.1)"/><ellipse cx="221.1" cy="-15.6" rx="1.5" ry="0.7" transform="rotate(-6 221.1 -15.6)"/><ellipse cx="222.5" cy="-77.4" rx="3.5" ry="1.6" transform="rotate(9 222.5 -77.4)"/><ellipse cx="230.4" cy="-75.5" rx="3.6" ry="1.6" transform="rotate(6 230.4 -75.5)"/><ellipse cx="218.9" cy="-33.3" rx="2.0" ry="0.9" transform="rotate(-15 218.9 -33.3)"/><ellipse cx="218.2" cy="-52.4" rx="2.4" ry="1.1" transform="rotate(-25 218.2 -52.4)"/><ellipse cx="229.4" cy="-51.9" rx="2.6" ry="1.2" transform="rotate(-9 229.4 -51.9)"/><ellipse cx="216.7" cy="-60.5" rx="3.8" ry="1.7" transform="rotate(6 216.7 -60.5)"/><ellipse cx="229.3" cy="-57.9" rx="2.6" ry="1.2" transform="rotate(-10 229.3 -57.9)"/><ellipse cx="227.4" cy="-52.2" rx="2.0" ry="0.9" transform="rotate(16 227.4 -52.2)"/><ellipse cx="224.4" cy="-39.9" rx="2.4" ry="1.1" transform="rotate(-2 224.4 -39.9)"/><ellipse cx="220.0" cy="-44.3" rx="2.3" ry="1.0" transform="rotate(-13 220.0 -44.3)"/><ellipse cx="227.1" cy="-25.9" rx="2.0" ry="0.9" transform="rotate(-18 227.1 -25.9)"/><ellipse cx="231.9" cy="-64.4" rx="2.4" ry="1.1" transform="rotate(2 231.9 -64.4)"/><ellipse cx="225.2" cy="-46.4" rx="2.7" ry="1.2" transform="rotate(27 225.2 -46.4)"/><ellipse cx="229.6" cy="-37.5" rx="3.4" ry="1.5" transform="rotate(-29 229.6 -37.5)"/><ellipse cx="220.2" cy="-59.2" rx="3.3" ry="1.5" transform="rotate(19 220.2 -59.2)"/><ellipse cx="230.1" cy="-71.3" rx="1.7" ry="0.7" transform="rotate(9 230.1 -71.3)"/><ellipse cx="219.6" cy="-56.8" rx="1.9" ry="0.9" transform="rotate(-2 219.6 -56.8)"/><ellipse cx="219.1" cy="-38.3" rx="3.8" ry="1.7" transform="rotate(-16 219.1 -38.3)"/><ellipse cx="226.3" cy="-60.5" rx="3.2" ry="1.4" transform="rotate(-3 226.3 -60.5)"/><ellipse cx="219.3" cy="-33.6" rx="1.8" ry="0.8" transform="rotate(-17 219.3 -33.6)"/><ellipse cx="220.8" cy="-40.8" rx="3.6" ry="1.6" transform="rotate(11 220.8 -40.8)"/><ellipse cx="219.0" cy="-71.8" rx="1.8" ry="0.8" transform="rotate(-29 219.0 -71.8)"/><ellipse cx="231.7" cy="-32.7" rx="2.7" ry="1.2" transform="rotate(28 231.7 -32.7)"/><ellipse cx="221.7" cy="-28.8" rx="3.1" ry="1.4" transform="rotate(21 221.7 -28.8)"/><ellipse cx="218.5" cy="-38.1" rx="2.3" ry="1.0" transform="rotate(-16 218.5 -38.1)"/><ellipse cx="231.3" cy="-69.0" rx="2.5" ry="1.1" transform="rotate(-22 231.3 -69.0)"/><ellipse cx="228.4" cy="-67.7" rx="3.3" ry="1.5" transform="rotate(-5 228.4 -67.7)"/><ellipse cx="231.0" cy="-33.9" rx="1.7" ry="0.8" transform="rotate(26 231.0 -33.9)"/><ellipse cx="226.8" cy="-30.4" rx="1.4" ry="0.6" transform="rotate(-17 226.8 -30.4)"/><ellipse cx="222.6" cy="-58.4" rx="1.7" ry="0.8" transform="rotate(-26 222.6 -58.4)"/><ellipse cx="230.7" cy="-47.1" rx="2.0" ry="0.9" transform="rotate(15 230.7 -47.1)"/><ellipse cx="221.4" cy="-73.1" rx="3.8" ry="1.7" transform="rotate(28 221.4 -73.1)"/><ellipse cx="221.4" cy="-18.9" rx="3.2" ry="1.4" transform="rotate(-19 221.4 -18.9)"/><ellipse cx="224.6" cy="-56.2" rx="3.1" ry="1.4" transform="rotate(24 224.6 -56.2)"/><ellipse cx="219.8" cy="-74.5" rx="3.1" ry="1.4" transform="rotate(-5 219.8 -74.5)"/><ellipse cx="228.5" cy="-34.8" rx="2.2" ry="1.0" transform="rotate(19 228.5 -34.8)"/><ellipse cx="230.7" cy="-74.4" rx="2.3" ry="1.0" transform="rotate(24 230.7 -74.4)"/><ellipse cx="225.2" cy="-52.4" rx="2.8" ry="1.3" transform="rotate(-24 225.2 -52.4)"/><ellipse cx="229.5" cy="-37.5" rx="3.2" ry="1.4" transform="rotate(-19 229.5 -37.5)"/><ellipse cx="221.5" cy="-26.2" rx="2.8" ry="1.2" transform="rotate(-23 221.5 -26.2)"/><ellipse cx="224.7" cy="-45.5" rx="2.3" ry="1.0" transform="rotate(29 224.7 -45.5)"/><ellipse cx="227.3" cy="-19.7" rx="3.1" ry="1.4" transform="rotate(22 227.3 -19.7)"/><ellipse cx="224.9" cy="-58.1" rx="2.3" ry="1.0" transform="rotate(20 224.9 -58.1)"/><ellipse cx="219.1" cy="-76.5" rx="1.5" ry="0.7" transform="rotate(20 219.1 -76.5)"/><ellipse cx="217.8" cy="-29.4" rx="2.9" ry="1.3" transform="rotate(-9 217.8 -29.4)"/><ellipse cx="222.8" cy="-50.3" rx="3.8" ry="1.7" transform="rotate(22 222.8 -50.3)"/><ellipse cx="219.9" cy="-73.3" rx="3.3" ry="1.5" transform="rotate(-4 219.9 -73.3)"/><ellipse cx="224.5" cy="-19.6" rx="3.9" ry="1.7" transform="rotate(22 224.5 -19.6)"/><ellipse cx="225.3" cy="-63.7" rx="2.2" ry="1.0" transform="rotate(-13 225.3 -63.7)"/><ellipse cx="216.3" cy="-63.2" rx="3.0" ry="1.3" transform="rotate(5 216.3 -63.2)"/><ellipse cx="220.8" cy="-42.5" rx="2.1" ry="0.9" transform="rotate(29 220.8 -42.5)"/><ellipse cx="230.3" cy="-65.7" rx="3.2" ry="1.4" transform="rotate(-16 230.3 -65.7)"/><ellipse cx="225.6" cy="-48.5" rx="1.5" ry="0.7" transform="rotate(-18 225.6 -48.5)"/><ellipse cx="231.0" cy="-52.7" rx="2.0" ry="0.9" transform="rotate(-25 231.0 -52.7)"/><ellipse cx="225.2" cy="-48.9" rx="1.8" ry="0.8" transform="rotate(-10 225.2 -48.9)"/><ellipse cx="226.6" cy="-34.7" rx="3.0" ry="1.3" transform="rotate(-22 226.6 -34.7)"/><ellipse cx="229.4" cy="-24.8" rx="2.1" ry="1.0" transform="rotate(8 229.4 -24.8)"/><ellipse cx="222.5" cy="-19.2" rx="1.5" ry="0.7" transform="rotate(-14 222.5 -19.2)"/><ellipse cx="227.4" cy="-64.4" rx="3.0" ry="1.4" transform="rotate(-17 227.4 -64.4)"/><ellipse cx="228.8" cy="-34.4" rx="2.6" ry="1.2" transform="rotate(-28 228.8 -34.4)"/><ellipse cx="218.4" cy="-53.6" rx="2.3" ry="1.0" transform="rotate(16 218.4 -53.6)"/><ellipse cx="228.6" cy="-64.6" rx="2.2" ry="1.0" transform="rotate(16 228.6 -64.6)"/><ellipse cx="226.6" cy="-14.1" rx="3.0" ry="1.3" transform="rotate(-10 226.6 -14.1)"/><ellipse cx="225.3" cy="-15.5" rx="3.6" ry="1.6" transform="rotate(-12 225.3 -15.5)"/><ellipse cx="233.2" cy="26.4" rx="2.9" ry="1.3" transform="rotate(18 233.2 26.4)"/><ellipse cx="226.1" cy="-20.2" rx="2.3" ry="1.0" transform="rotate(22 226.1 -20.2)"/><ellipse cx="222.4" cy="-3.5" rx="1.9" ry="0.8" transform="rotate(-24 222.4 -3.5)"/><ellipse cx="226.8" cy="33.1" rx="2.3" ry="1.0" transform="rotate(7 226.8 33.1)"/><ellipse cx="232.2" cy="5.4" rx="3.1" ry="1.4" transform="rotate(-29 232.2 5.4)"/><ellipse cx="224.2" cy="-13.2" rx="3.4" ry="1.5" transform="rotate(-9 224.2 -13.2)"/><ellipse cx="222.6" cy="-8.5" rx="3.4" ry="1.5" transform="rotate(-4 222.6 -8.5)"/><ellipse cx="229.7" cy="-18.4" rx="2.8" ry="1.2" transform="rotate(0 229.7 -18.4)"/><ellipse cx="224.6" cy="-13.3" rx="3.9" ry="1.7" transform="rotate(26 224.6 -13.3)"/><ellipse cx="219.4" cy="12.8" rx="1.7" ry="0.8" transform="rotate(24 219.4 12.8)"/><ellipse cx="225.3" cy="8.3" rx="1.5" ry="0.7" transform="rotate(21 225.3 8.3)"/><ellipse cx="227.5" cy="-16.2" rx="2.5" ry="1.1" transform="rotate(-15 227.5 -16.2)"/><ellipse cx="218.4" cy="16.0" rx="3.0" ry="1.3" transform="rotate(-27 218.4 16.0)"/><ellipse cx="226.9" cy="22.7" rx="3.6" ry="1.6" transform="rotate(21 226.9 22.7)"/><ellipse cx="231.1" cy="1.4" rx="2.2" ry="1.0" transform="rotate(-26 231.1 1.4)"/><ellipse cx="226.1" cy="34.0" rx="2.4" ry="1.1" transform="rotate(-10 226.1 34.0)"/><ellipse cx="225.2" cy="-21.6" rx="2.4" ry="1.1" transform="rotate(19 225.2 -21.6)"/><ellipse cx="225.1" cy="30.8" rx="3.4" ry="1.5" transform="rotate(-25 225.1 30.8)"/><ellipse cx="233.5" cy="29.1" rx="2.6" ry="1.2" transform="rotate(-5 233.5 29.1)"/><ellipse cx="227.3" cy="-22.3" rx="2.4" ry="1.1" transform="rotate(18 227.3 -22.3)"/><ellipse cx="231.6" cy="37.6" rx="2.5" ry="1.1" transform="rotate(-7 231.6 37.6)"/><ellipse cx="228.4" cy="13.3" rx="2.4" ry="1.1" transform="rotate(-23 228.4 13.3)"/><ellipse cx="221.9" cy="-18.9" rx="2.2" ry="1.0" transform="rotate(15 221.9 -18.9)"/><ellipse cx="220.7" cy="-2.4" rx="3.4" ry="1.5" transform="rotate(-1 220.7 -2.4)"/><ellipse cx="227.8" cy="-0.7" rx="3.2" ry="1.4" transform="rotate(2 227.8 -0.7)"/><ellipse cx="227.5" cy="29.1" rx="3.8" ry="1.7" transform="rotate(8 227.5 29.1)"/><ellipse cx="220.4" cy="12.8" rx="3.6" ry="1.6" transform="rotate(8 220.4 12.8)"/><ellipse cx="227.6" cy="47.6" rx="3.6" ry="1.6" transform="rotate(17 227.6 47.6)"/><ellipse cx="224.5" cy="-17.1" rx="2.3" ry="1.0" transform="rotate(29 224.5 -17.1)"/><ellipse cx="225.5" cy="-2.2" rx="3.5" ry="1.5" transform="rotate(-4 225.5 -2.2)"/><ellipse cx="233.4" cy="25.3" rx="2.0" ry="0.9" transform="rotate(-5 233.4 25.3)"/><ellipse cx="231.2" cy="27.3" rx="2.8" ry="1.2" transform="rotate(19 231.2 27.3)"/><ellipse cx="233.7" cy="2.3" rx="3.1" ry="1.4" transform="rotate(-6 233.7 2.3)"/><ellipse cx="229.9" cy="5.7" rx="2.2" ry="1.0" transform="rotate(4 229.9 5.7)"/><ellipse cx="222.1" cy="32.9" rx="1.7" ry="0.8" transform="rotate(-15 222.1 32.9)"/><ellipse cx="231.6" cy="15.5" rx="2.0" ry="0.9" transform="rotate(19 231.6 15.5)"/><ellipse cx="226.1" cy="28.5" rx="3.2" ry="1.4" transform="rotate(-18 226.1 28.5)"/><ellipse cx="229.4" cy="-10.5" rx="1.8" ry="0.8" transform="rotate(12 229.4 -10.5)"/><ellipse cx="230.8" cy="12.0" rx="2.8" ry="1.3" transform="rotate(3 230.8 12.0)"/><ellipse cx="234.0" cy="1.1" rx="1.6" ry="0.7" transform="rotate(-7 234.0 1.1)"/><ellipse cx="228.1" cy="-10.1" rx="2.7" ry="1.2" transform="rotate(4 228.1 -10.1)"/><ellipse cx="227.8" cy="12.9" rx="3.7" ry="1.6" transform="rotate(-6 227.8 12.9)"/><ellipse cx="220.5" cy="21.9" rx="3.3" ry="1.5" transform="rotate(24 220.5 21.9)"/><ellipse cx="231.9" cy="27.1" rx="1.4" ry="0.6" transform="rotate(3 231.9 27.1)"/><ellipse cx="228.5" cy="-11.1" rx="2.4" ry="1.1" transform="rotate(21 228.5 -11.1)"/><ellipse cx="223.5" cy="-20.8" rx="2.8" ry="1.2" transform="rotate(-11 223.5 -20.8)"/><ellipse cx="224.2" cy="-11.9" rx="1.4" ry="0.6" transform="rotate(-22 224.2 -11.9)"/><ellipse cx="232.6" cy="4.8" rx="1.5" ry="0.7" transform="rotate(15 232.6 4.8)"/><ellipse cx="226.3" cy="4.3" rx="3.9" ry="1.7" transform="rotate(-20 226.3 4.3)"/><ellipse cx="219.3" cy="11.0" rx="2.7" ry="1.2" transform="rotate(-9 219.3 11.0)"/><ellipse cx="219.8" cy="16.5" rx="3.8" ry="1.7" transform="rotate(23 219.8 16.5)"/><ellipse cx="233.6" cy="10.1" rx="2.6" ry="1.2" transform="rotate(-9 233.6 10.1)"/><ellipse cx="232.9" cy="-6.7" rx="2.2" ry="1.0" transform="rotate(17 232.9 -6.7)"/><ellipse cx="225.1" cy="19.4" rx="2.6" ry="1.2" transform="rotate(24 225.1 19.4)"/><ellipse cx="219.0" cy="5.3" rx="3.6" ry="1.6" transform="rotate(18 219.0 5.3)"/><ellipse cx="223.9" cy="46.1" rx="1.7" ry="0.7" transform="rotate(0 223.9 46.1)"/><ellipse cx="230.7" cy="23.8" rx="3.7" ry="1.6" transform="rotate(19 230.7 23.8)"/><ellipse cx="232.4" cy="11.1" rx="2.8" ry="1.2" transform="rotate(-20 232.4 11.1)"/><ellipse cx="218.4" cy="15.6" rx="2.3" ry="1.0" transform="rotate(21 218.4 15.6)"/><ellipse cx="223.8" cy="43.6" rx="1.9" ry="0.9" transform="rotate(28 223.8 43.6)"/><ellipse cx="228.0" cy="19.4" rx="2.9" ry="1.3" transform="rotate(17 228.0 19.4)"/><ellipse cx="225.0" cy="-10.5" rx="3.2" ry="1.4" transform="rotate(-18 225.0 -10.5)"/><ellipse cx="224.2" cy="29.9" rx="2.0" ry="0.9" transform="rotate(-27 224.2 29.9)"/><ellipse cx="227.6" cy="38.9" rx="3.0" ry="1.3" transform="rotate(-10 227.6 38.9)"/><ellipse cx="222.6" cy="-1.3" rx="3.5" ry="1.5" transform="rotate(-29 222.6 -1.3)"/><ellipse cx="227.3" cy="-22.4" rx="2.9" ry="1.3" transform="rotate(8 227.3 -22.4)"/><ellipse cx="229.4" cy="10.8" rx="1.7" ry="0.7" transform="rotate(0 229.4 10.8)"/><ellipse cx="225.2" cy="-14.4" rx="2.7" ry="1.2" transform="rotate(-4 225.2 -14.4)"/><ellipse cx="218.8" cy="20.9" rx="1.6" ry="0.7" transform="rotate(9 218.8 20.9)"/><ellipse cx="232.6" cy="31.0" rx="2.1" ry="0.9" transform="rotate(18 232.6 31.0)"/><ellipse cx="223.5" cy="39.0" rx="2.7" ry="1.2" transform="rotate(27 223.5 39.0)"/><ellipse cx="220.4" cy="16.9" rx="2.7" ry="1.2" transform="rotate(-15 220.4 16.9)"/><ellipse cx="230.7" cy="4.5" rx="1.8" ry="0.8" transform="rotate(-18 230.7 4.5)"/><ellipse cx="224.7" cy="-22.2" rx="2.9" ry="1.3" transform="rotate(27 224.7 -22.2)"/><ellipse cx="227.5" cy="46.7" rx="3.4" ry="1.5" transform="rotate(-17 227.5 46.7)"/><ellipse cx="230.7" cy="25.5" rx="2.5" ry="1.1" transform="rotate(-1 230.7 25.5)"/><ellipse cx="225.5" cy="-5.1" rx="2.1" ry="0.9" transform="rotate(-10 225.5 -5.1)"/><ellipse cx="229.1" cy="33.2" rx="3.0" ry="1.3" transform="rotate(-14 229.1 33.2)"/><ellipse cx="230.8" cy="36.2" rx="1.7" ry="0.7" transform="rotate(21 230.8 36.2)"/><ellipse cx="223.3" cy="0.7" rx="1.5" ry="0.7" transform="rotate(21 223.3 0.7)"/><ellipse cx="233.3" cy="16.8" rx="2.8" ry="1.2" transform="rotate(11 233.3 16.8)"/><ellipse cx="228.4" cy="42.5" rx="2.1" ry="0.9" transform="rotate(5 228.4 42.5)"/><ellipse cx="232.4" cy="6.1" rx="1.8" ry="0.8" transform="rotate(-15 232.4 6.1)"/><ellipse cx="220.0" cy="30.8" rx="3.5" ry="1.5" transform="rotate(-7 220.0 30.8)"/><ellipse cx="222.1" cy="0.9" rx="2.7" ry="1.2" transform="rotate(-11 222.1 0.9)"/><ellipse cx="231.0" cy="4.7" rx="2.2" ry="1.0" transform="rotate(7 231.0 4.7)"/><ellipse cx="226.8" cy="24.5" rx="2.6" ry="1.1" transform="rotate(20 226.8 24.5)"/><ellipse cx="223.3" cy="26.9" rx="2.2" ry="1.0" transform="rotate(6 223.3 26.9)"/><ellipse cx="225.5" cy="39.2" rx="2.7" ry="1.2" transform="rotate(-28 225.5 39.2)"/><ellipse cx="223.0" cy="42.5" rx="2.0" ry="0.9" transform="rotate(15 223.0 42.5)"/><ellipse cx="231.4" cy="24.2" rx="2.5" ry="1.1" transform="rotate(9 231.4 24.2)"/><ellipse cx="229.1" cy="12.7" rx="2.5" ry="1.1" transform="rotate(25 229.1 12.7)"/><ellipse cx="218.6" cy="11.9" rx="2.8" ry="1.2" transform="rotate(29 218.6 11.9)"/><ellipse cx="233.0" cy="28.5" rx="2.1" ry="0.9" transform="rotate(-17 233.0 28.5)"/><ellipse cx="221.0" cy="8.4" rx="3.9" ry="1.8" transform="rotate(26 221.0 8.4)"/><ellipse cx="225.6" cy="-5.8" rx="2.0" ry="0.9" transform="rotate(-4 225.6 -5.8)"/><ellipse cx="224.6" cy="28.0" rx="2.0" ry="0.9" transform="rotate(-14 224.6 28.0)"/><ellipse cx="225.4" cy="24.1" rx="2.2" ry="1.0" transform="rotate(27 225.4 24.1)"/><ellipse cx="229.6" cy="-12.5" rx="3.9" ry="1.7" transform="rotate(26 229.6 -12.5)"/><ellipse cx="227.7" cy="16.8" rx="2.3" ry="1.0" transform="rotate(2 227.7 16.8)"/><ellipse cx="227.6" cy="12.2" rx="3.2" ry="1.4" transform="rotate(18 227.6 12.2)"/><ellipse cx="225.7" cy="44.7" rx="3.6" ry="1.6" transform="rotate(-24 225.7 44.7)"/><ellipse cx="223.2" cy="-9.0" rx="3.4" ry="1.5" transform="rotate(-21 223.2 -9.0)"/><ellipse cx="225.8" cy="8.9" rx="1.5" ry="0.7" transform="rotate(-4 225.8 8.9)"/><ellipse cx="223.2" cy="32.3" rx="2.0" ry="0.9" transform="rotate(30 223.2 32.3)"/><ellipse cx="221.3" cy="25.7" rx="2.3" ry="1.0" transform="rotate(23 221.3 25.7)"/><ellipse cx="230.3" cy="43.2" rx="1.9" ry="0.9" transform="rotate(23 230.3 43.2)"/><ellipse cx="220.5" cy="25.0" rx="2.0" ry="0.9" transform="rotate(19 220.5 25.0)"/><ellipse cx="227.6" cy="44.6" rx="3.1" ry="1.4" transform="rotate(24 227.6 44.6)"/><ellipse cx="233.6" cy="10.0" rx="1.9" ry="0.8" transform="rotate(19 233.6 10.0)"/><ellipse cx="232.2" cy="32.3" rx="3.8" ry="1.7" transform="rotate(-22 232.2 32.3)"/><ellipse cx="233.4" cy="20.7" rx="2.3" ry="1.0" transform="rotate(11 233.4 20.7)"/><ellipse cx="229.6" cy="-20.3" rx="2.7" ry="1.2" transform="rotate(21 229.6 -20.3)"/><ellipse cx="232.4" cy="-4.9" rx="2.4" ry="1.1" transform="rotate(25 232.4 -4.9)"/><ellipse cx="219.4" cy="29.1" rx="2.4" ry="1.1" transform="rotate(-1 219.4 29.1)"/><ellipse cx="228.9" cy="15.0" rx="3.8" ry="1.7" transform="rotate(-3 228.9 15.0)"/><ellipse cx="225.5" cy="-12.9" rx="3.3" ry="1.5" transform="rotate(1 225.5 -12.9)"/><ellipse cx="229.1" cy="28.7" rx="3.0" ry="1.4" transform="rotate(-21 229.1 28.7)"/><ellipse cx="228.1" cy="9.1" rx="2.9" ry="1.3" transform="rotate(22 228.1 9.1)"/><ellipse cx="225.9" cy="-1.7" rx="1.7" ry="0.8" transform="rotate(12 225.9 -1.7)"/><ellipse cx="224.1" cy="18.6" rx="1.8" ry="0.8" transform="rotate(10 224.1 18.6)"/><ellipse cx="230.6" cy="15.5" rx="3.8" ry="1.7" transform="rotate(-15 230.6 15.5)"/><ellipse cx="227.0" cy="7.5" rx="1.9" ry="0.9" transform="rotate(-27 227.0 7.5)"/><ellipse cx="225.5" cy="-15.3" rx="3.4" ry="1.5" transform="rotate(19 225.5 -15.3)"/><ellipse cx="225.8" cy="0.4" rx="2.6" ry="1.2" transform="rotate(-28 225.8 0.4)"/><ellipse cx="227.7" cy="-9.4" rx="2.6" ry="1.2" transform="rotate(24 227.7 -9.4)"/><ellipse cx="232.6" cy="10.7" rx="2.4" ry="1.1" transform="rotate(22 232.6 10.7)"/><ellipse cx="228.4" cy="-1.9" rx="2.6" ry="1.1" transform="rotate(27 228.4 -1.9)"/><ellipse cx="234.1" cy="8.8" rx="2.7" ry="1.2" transform="rotate(-20 234.1 8.8)"/><ellipse cx="229.1" cy="1.7" rx="3.0" ry="1.3" transform="rotate(-7 229.1 1.7)"/><ellipse cx="229.1" cy="-6.0" rx="2.4" ry="1.1" transform="rotate(21 229.1 -6.0)"/><ellipse cx="225.0" cy="-24.2" rx="1.7" ry="0.8" transform="rotate(-22 225.0 -24.2)"/><ellipse cx="223.7" cy="-11.0" rx="3.7" ry="1.6" transform="rotate(-2 223.7 -11.0)"/><ellipse cx="231.7" cy="19.8" rx="2.1" ry="0.9" transform="rotate(18 231.7 19.8)"/><ellipse cx="229.0" cy="-19.8" rx="1.7" ry="0.8" transform="rotate(4 229.0 -19.8)"/><ellipse cx="228.8" cy="47.0" rx="1.8" ry="0.8" transform="rotate(9 228.8 47.0)"/><ellipse cx="225.5" cy="-3.9" rx="2.9" ry="1.3" transform="rotate(-23 225.5 -3.9)"/><ellipse cx="230.4" cy="18.8" rx="1.6" ry="0.7" transform="rotate(-4 230.4 18.8)"/><ellipse cx="222.8" cy="-19.8" rx="2.1" ry="0.9" transform="rotate(-1 222.8 -19.8)"/><ellipse cx="224.5" cy="-7.0" rx="2.2" ry="1.0" transform="rotate(-8 224.5 -7.0)"/><ellipse cx="228.7" cy="-6.9" rx="3.4" ry="1.5" transform="rotate(-21 228.7 -6.9)"/><ellipse cx="224.7" cy="31.0" rx="2.0" ry="0.9" transform="rotate(-21 224.7 31.0)"/><ellipse cx="220.4" cy="32.7" rx="3.1" ry="1.4" transform="rotate(30 220.4 32.7)"/><ellipse cx="224.4" cy="31.0" rx="2.0" ry="0.9" transform="rotate(-0 224.4 31.0)"/><ellipse cx="231.5" cy="35.6" rx="2.5" ry="1.1" transform="rotate(-27 231.5 35.6)"/><ellipse cx="220.9" cy="11.5" rx="1.9" ry="0.9" transform="rotate(-12 220.9 11.5)"/><ellipse cx="222.3" cy="-20.1" rx="3.0" ry="1.3" transform="rotate(-15 222.3 -20.1)"/><ellipse cx="230.8" cy="16.6" rx="2.0" ry="0.9" transform="rotate(-5 230.8 16.6)"/><ellipse cx="169.7" cy="-121.7" rx="1.9" ry="0.8" transform="rotate(26 169.7 -121.7)"/><ellipse cx="183.1" cy="-126.2" rx="3.8" ry="1.7" transform="rotate(4 183.1 -126.2)"/><ellipse cx="174.4" cy="-130.2" rx="3.1" ry="1.4" transform="rotate(21 174.4 -130.2)"/><ellipse cx="172.4" cy="-132.2" rx="3.0" ry="1.3" transform="rotate(-9 172.4 -132.2)"/><ellipse cx="178.0" cy="-132.6" rx="2.0" ry="0.9" transform="rotate(-20 178.0 -132.6)"/><ellipse cx="179.9" cy="-123.2" rx="1.9" ry="0.8" transform="rotate(-18 179.9 -123.2)"/><ellipse cx="177.7" cy="-118.4" rx="1.9" ry="0.8" transform="rotate(28 177.7 -118.4)"/><ellipse cx="175.9" cy="-122.9" rx="3.8" ry="1.7" transform="rotate(-7 175.9 -122.9)"/><ellipse cx="174.8" cy="-129.2" rx="1.5" ry="0.7" transform="rotate(-28 174.8 -129.2)"/><ellipse cx="176.9" cy="-124.5" rx="2.6" ry="1.1" transform="rotate(-14 176.9 -124.5)"/><ellipse cx="170.9" cy="-128.4" rx="3.5" ry="1.5" transform="rotate(-17 170.9 -128.4)"/><ellipse cx="164.9" cy="-125.9" rx="2.8" ry="1.2" transform="rotate(27 164.9 -125.9)"/><ellipse cx="184.0" cy="-120.5" rx="2.4" ry="1.1" transform="rotate(30 184.0 -120.5)"/><ellipse cx="173.2" cy="-128.4" rx="3.4" ry="1.5" transform="rotate(-20 173.2 -128.4)"/><ellipse cx="166.1" cy="-124.9" rx="1.9" ry="0.8" transform="rotate(-27 166.1 -124.9)"/><ellipse cx="177.2" cy="-127.2" rx="3.4" ry="1.5" transform="rotate(-2 177.2 -127.2)"/><ellipse cx="178.1" cy="-114.4" rx="2.4" ry="1.1" transform="rotate(-14 178.1 -114.4)"/><ellipse cx="183.0" cy="-129.5" rx="2.3" ry="1.0" transform="rotate(28 183.0 -129.5)"/><ellipse cx="181.9" cy="-117.6" rx="2.9" ry="1.3" transform="rotate(-15 181.9 -117.6)"/><ellipse cx="170.2" cy="-119.9" rx="3.1" ry="1.4" transform="rotate(-5 170.2 -119.9)"/><ellipse cx="167.3" cy="-119.7" rx="2.3" ry="1.0" transform="rotate(-25 167.3 -119.7)"/><ellipse cx="165.3" cy="-123.0" rx="2.0" ry="0.9" transform="rotate(-14 165.3 -123.0)"/><ellipse cx="178.4" cy="-125.5" rx="3.9" ry="1.7" transform="rotate(-12 178.4 -125.5)"/><ellipse cx="177.1" cy="-115.0" rx="3.7" ry="1.6" transform="rotate(-2 177.1 -115.0)"/><ellipse cx="174.4" cy="-119.7" rx="1.5" ry="0.6" transform="rotate(12 174.4 -119.7)"/><ellipse cx="174.5" cy="-129.2" rx="2.6" ry="1.2" transform="rotate(16 174.5 -129.2)"/><ellipse cx="172.1" cy="-131.4" rx="3.8" ry="1.7" transform="rotate(-15 172.1 -131.4)"/><ellipse cx="182.8" cy="-124.8" rx="2.2" ry="1.0" transform="rotate(11 182.8 -124.8)"/><ellipse cx="172.6" cy="-117.2" rx="3.5" ry="1.6" transform="rotate(18 172.6 -117.2)"/><ellipse cx="167.3" cy="-128.7" rx="3.6" ry="1.6" transform="rotate(-7 167.3 -128.7)"/><ellipse cx="183.7" cy="-118.8" rx="1.6" ry="0.7" transform="rotate(-3 183.7 -118.8)"/><ellipse cx="180.9" cy="-118.9" rx="3.4" ry="1.5" transform="rotate(-28 180.9 -118.9)"/><ellipse cx="168.3" cy="-123.3" rx="3.1" ry="1.4" transform="rotate(24 168.3 -123.3)"/><ellipse cx="173.7" cy="-125.6" rx="2.3" ry="1.0" transform="rotate(-2 173.7 -125.6)"/><ellipse cx="179.8" cy="-115.3" rx="2.3" ry="1.0" transform="rotate(-8 179.8 -115.3)"/><ellipse cx="176.5" cy="-116.1" rx="3.5" ry="1.5" transform="rotate(-23 176.5 -116.1)"/><ellipse cx="169.2" cy="-123.4" rx="1.6" ry="0.7" transform="rotate(-6 169.2 -123.4)"/><ellipse cx="169.6" cy="-129.5" rx="3.9" ry="1.8" transform="rotate(12 169.6 -129.5)"/><ellipse cx="182.8" cy="-127.1" rx="3.2" ry="1.4" transform="rotate(24 182.8 -127.1)"/><ellipse cx="180.7" cy="-130.1" rx="2.3" ry="1.0" transform="rotate(-13 180.7 -130.1)"/><ellipse cx="175.9" cy="-124.6" rx="2.4" ry="1.1" transform="rotate(20 175.9 -124.6)"/><ellipse cx="172.9" cy="-116.4" rx="2.3" ry="1.0" transform="rotate(8 172.9 -116.4)"/><ellipse cx="176.0" cy="-125.6" rx="2.5" ry="1.1" transform="rotate(21 176.0 -125.6)"/><ellipse cx="166.1" cy="-118.1" rx="2.1" ry="0.9" transform="rotate(0 166.1 -118.1)"/><ellipse cx="179.3" cy="-114.9" rx="2.6" ry="1.2" transform="rotate(19 179.3 -114.9)"/><ellipse cx="172.8" cy="-128.3" rx="3.6" ry="1.6" transform="rotate(-26 172.8 -128.3)"/><ellipse cx="183.0" cy="-127.5" rx="2.1" ry="0.9" transform="rotate(5 183.0 -127.5)"/><ellipse cx="170.7" cy="-117.7" rx="3.8" ry="1.7" transform="rotate(-3 170.7 -117.7)"/><ellipse cx="172.9" cy="-124.5" rx="1.6" ry="0.7" transform="rotate(-1 172.9 -124.5)"/><ellipse cx="166.1" cy="-118.7" rx="2.9" ry="1.3" transform="rotate(23 166.1 -118.7)"/><ellipse cx="166.0" cy="-127.9" rx="2.2" ry="1.0" transform="rotate(-28 166.0 -127.9)"/><ellipse cx="174.9" cy="-131.7" rx="1.9" ry="0.9" transform="rotate(-17 174.9 -131.7)"/></g></g></defs></svg>
<div style="left:0;top:0;width:571px;height:362px;overflow:hidden;background:#7f7f7f">
<div style="left:0.0px;top:0.0px;width:571.0px;height:16.0px;background:linear-gradient(to bottom,#4a9cff 0%,#1a66ee 8%,#0050dc 22%,#0055e4 50%,#0866f0 78%,#0058e6 90%,#0040c4 100%)"></div>
<svg style="left:1.5px;top:3.8px" width="8.5" height="8.5" viewBox="0 0 10 10"><rect x=".5" y=".5" width="9" height="9" rx="2" fill="#e8f4f4" stroke="#9cc" stroke-width=".6"/><path d="M2 7 Q3 3 7 2 Q5 5 8 8 Q4 8 2 7Z" fill="#2a9a7a"/></svg>
<div class="t" style="left:11.4px;top:3.1px;color:#fff;font-weight:bold;font-size:8.6px;text-shadow:1px 1px 0 rgba(0,0,40,.45);transform-origin:0 0;transform:scaleX(0.735);">Adobe Photoshop</div>
<div style="left:0.0px;top:16.0px;width:571.0px;height:12.0px;background:#ece9d8"></div>
<div class="t" style="left:3.0px;top:17.7px;color:#000;font-size:7.4px;transform-origin:0 0;transform:scaleX(0.78)">File</div>
<div class="t" style="left:17.0px;top:17.7px;color:#000;font-size:7.4px;transform-origin:0 0;transform:scaleX(0.78)">Edit</div>
<div style="left:30.0px;top:16.0px;width:22.0px;height:12.0px;background:#316ac5"></div>
<div class="t" style="left:33.0px;top:17.7px;color:#fff;font-size:7.4px;transform-origin:0 0;transform:scaleX(0.78)">Image</div>
<div class="t" style="left:54.0px;top:17.7px;color:#000;font-size:7.4px;transform-origin:0 0;transform:scaleX(0.78)">Layer</div>
<div class="t" style="left:75.0px;top:17.7px;color:#000;font-size:7.4px;transform-origin:0 0;transform:scaleX(0.78)">Select</div>
<div class="t" style="left:96.0px;top:17.7px;color:#000;font-size:7.4px;transform-origin:0 0;transform:scaleX(0.78)">Filter</div>
<div class="t" style="left:115.0px;top:17.7px;color:#000;font-size:7.4px;transform-origin:0 0;transform:scaleX(0.78)">View</div>
<div class="t" style="left:133.0px;top:17.7px;color:#000;font-size:7.4px;transform-origin:0 0;transform:scaleX(0.78)">Window</div>
<div class="t" style="left:158.0px;top:17.7px;color:#000;font-size:7.4px;transform-origin:0 0;transform:scaleX(0.78)">Help</div>
<div style="left:0.0px;top:28.0px;width:571.0px;height:22.0px;background:#ece9d8;border-top:1px solid #cdc9b5;box-shadow:inset 0 1px #fff;border-bottom:1px solid #a9a690"></div>
<div style="left:3px;top:31px;width:2px;height:16px;background:repeating-linear-gradient(#b8b5a2 0 1px,transparent 1px 3px)"></div>
<svg style="left:8.6px;top:33.6px;overflow:visible" width="10.8" height="10.8" viewBox="0 0 12 12"><g fill="#111" stroke="#111"><path d="M3 1 L3 11 L5.5 8.5 L7 11.5 L8.5 10.8 L7.2 8 L10 8 Z" stroke="none"/></g></svg>
<div style="left:23px;top:38px;width:0;height:0;border-top:3px solid #111;border-left:2.5px solid transparent;border-right:2.5px solid transparent"></div>
<div style="left:128.0px;top:30.0px;width:1.0px;height:18.0px;background:#c0bda8"></div><div style="left:129.0px;top:30.0px;width:1.0px;height:18.0px;background:#fff"></div>
<svg style="left:131px;top:33px" width="12" height="12" viewBox="0 0 12 12"><rect x="1" y="1" width="6" height="6" fill="#ddd" stroke="#777"/><rect x="4" y="4" width="6" height="6" fill="#bbb" stroke="#777"/></svg>
<div style="left:146.0px;top:34.0px;width:36.0px;height:10.0px;background:#f4f3ee;border:1px solid #cfcdbd;border-radius:2px"></div>
<div class="t" style="left:152.0px;top:35.5px;color:#b0ae9e;font-size:6.5px;transform-origin:0 0;transform:scaleX(0.86)">Combine</div>
<div style="left:187.0px;top:30.0px;width:1.0px;height:18.0px;background:#c0bda8"></div><div style="left:188.0px;top:30.0px;width:1.0px;height:18.0px;background:#fff"></div>
<svg style="left:194.2px;top:34.2px" width="9.6" height="9.6" viewBox="0 0 12 12"><g fill="none" stroke="#5e5e55" transform="scale(1)" style="stroke-width:1.5"><path d="M1 1 h10 M3 3 v7 M8 3 v5" stroke-width="1.2"/></g></svg><svg style="left:202.2px;top:34.2px" width="9.6" height="9.6" viewBox="0 0 12 12"><g fill="none" stroke="#5e5e55" transform="scale(1)" style="stroke-width:1.5"><path d="M1 6 h10 M3 2 v8 M8 3 v6" stroke-width="1.2"/></g></svg><svg style="left:209.2px;top:34.2px" width="9.6" height="9.6" viewBox="0 0 12 12"><g fill="none" stroke="#5e5e55" transform="scale(1)" style="stroke-width:1.5"><path d="M1 11 h10 M3 2 v8 M8 5 v5" stroke-width="1.2"/></g></svg><svg style="left:227.2px;top:34.2px" width="9.6" height="9.6" viewBox="0 0 12 12"><g fill="none" stroke="#5e5e55" transform="scale(1)" style="stroke-width:1.5"><path d="M1 1 v10 M3 3 h7 M3 8 h5" stroke-width="1.2"/></g></svg><svg style="left:237.2px;top:34.2px" width="9.6" height="9.6" viewBox="0 0 12 12"><g fill="none" stroke="#5e5e55" transform="scale(1)" style="stroke-width:1.5"><path d="M6 1 v10 M2 3 h8 M3 8 h6" stroke-width="1.2"/></g></svg><svg style="left:246.2px;top:34.2px" width="9.6" height="9.6" viewBox="0 0 12 12"><g fill="none" stroke="#5e5e55" transform="scale(1)" style="stroke-width:1.5"><path d="M11 1 v10 M2 3 h8 M5 8 h5" stroke-width="1.2"/></g></svg><svg style="left:267.2px;top:34.2px" width="9.6" height="9.6" viewBox="0 0 12 12"><g fill="none" stroke="#5e5e55" transform="scale(1)" style="stroke-width:1.5"><path d="M1 2 h10 M1 6 h10 M1 10 h10 M3 2 v8" stroke-width="1"/></g></svg><svg style="left:278.2px;top:34.2px" width="9.6" height="9.6" viewBox="0 0 12 12"><g fill="none" stroke="#5e5e55" transform="scale(1)" style="stroke-width:1.5"><path d="M1 2 h10 M1 6 h10 M1 10 h10 M6 2 v8" stroke-width="1"/></g></svg><svg style="left:288.2px;top:34.2px" width="9.6" height="9.6" viewBox="0 0 12 12"><g fill="none" stroke="#5e5e55" transform="scale(1)" style="stroke-width:1.5"><path d="M1 2 h10 M1 6 h10 M1 10 h10 M9 2 v8" stroke-width="1"/></g></svg><svg style="left:301.2px;top:34.2px" width="9.6" height="9.6" viewBox="0 0 12 12"><g fill="none" stroke="#5e5e55" transform="scale(1)" style="stroke-width:1.5"><path d="M2 1 v10 M6 1 v10 M10 1 v10 M2 3 h8" stroke-width="1"/></g></svg><svg style="left:311.2px;top:34.2px" width="9.6" height="9.6" viewBox="0 0 12 12"><g fill="none" stroke="#5e5e55" transform="scale(1)" style="stroke-width:1.5"><path d="M2 1 v10 M6 1 v10 M10 1 v10 M2 6 h8" stroke-width="1"/></g></svg><svg style="left:321.2px;top:34.2px" width="9.6" height="9.6" viewBox="0 0 12 12"><g fill="none" stroke="#5e5e55" transform="scale(1)" style="stroke-width:1.5"><path d="M2 1 v10 M6 1 v10 M10 1 v10 M2 9 h8" stroke-width="1"/></g></svg>
<div style="left:262.0px;top:30.0px;width:1.0px;height:18.0px;background:#c0bda8"></div><div style="left:263.0px;top:30.0px;width:1.0px;height:18.0px;background:#fff"></div>
<div style="left:335.0px;top:30.0px;width:1.0px;height:18.0px;background:#c0bda8"></div><div style="left:336.0px;top:30.0px;width:1.0px;height:18.0px;background:#fff"></div>
<div style="left:414.0px;top:30.0px;width:1.0px;height:18.0px;background:#c0bda8"></div><div style="left:415.0px;top:30.0px;width:1.0px;height:18.0px;background:#fff"></div>
<svg style="left:418px;top:32px" width="14" height="13" viewBox="0 0 14 13"><rect x="1" y="2" width="9" height="10" fill="#fff" stroke="#333" stroke-width="1"/><path d="M3 5 h4 M3 7 h4 M3 9 h3" stroke="#333" stroke-width=".8"/><path d="M9 1 L13 5 L11 5 L11 8" fill="none" stroke="#111" stroke-width="1.2"/></svg>
<div style="left:436.0px;top:32.0px;width:135.0px;height:14.0px;background:linear-gradient(#b5b5b5,#a5a5a5)"></div><div style="left:439.0px;top:35.0px;width:1.0px;height:10.0px;background:#555"></div><div class="t" style="left:442.0px;top:36.5px;font-size:5.6px;color:#333">Brushes</div><svg style="left:464.0px;top:34.0px" width="6" height="12" viewBox="0 0 6 10" preserveAspectRatio="none"><path d="M0 0 L6 10" stroke="#555" stroke-width=".8"/></svg><div style="left:469.0px;top:35.0px;width:1.0px;height:10.0px;background:#555"></div><div class="t" style="left:472.0px;top:36.5px;font-size:5.6px;color:#333">Tool Presets</div><svg style="left:505.0px;top:34.0px" width="6" height="12" viewBox="0 0 6 10" preserveAspectRatio="none"><path d="M0 0 L6 10" stroke="#555" stroke-width=".8"/></svg><div style="left:508.0px;top:35.0px;width:1.0px;height:10.0px;background:#555"></div><div class="t" style="left:511.0px;top:36.5px;font-size:5.6px;color:#333">Layer Comps</div><svg style="left:545.0px;top:34.0px" width="6" height="12" viewBox="0 0 6 10" preserveAspectRatio="none"><path d="M0 0 L6 10" stroke="#555" stroke-width=".8"/></svg>
<div style="left:213.0px;top:52.0px;width:358.0px;height:20.0px;background:linear-gradient(to bottom,#4a9cff 0%,#1a66ee 8%,#0050dc 22%,#0055e4 50%,#0866f0 78%,#0058e6 90%,#0040c4 100%)"></div>
<div class="t" style="left:225.0px;top:56.0px;color:#fff;font-size:8px;font-weight:bold;text-shadow:1px 1px 0 rgba(0,0,40,.4);transform-origin:0 0;transform:scaleX(.853)">gms7nnjjaxzvsrqwopi.jpg @ 30.1% (Background, RGB/8)</div>
<div style="left:213.0px;top:72.0px;width:3.0px;height:290.0px;background:#1a55d8"></div>
<svg style="left:216px;top:72px" width="355" height="290" viewBox="0 0 355 290"><defs><linearGradient id="tllg" x1="0" y1="0" x2="0" y2="1"><stop offset="0" stop-color="#111111"/><stop offset="1" stop-color="#161514"/></linearGradient><radialGradient id="tlrg" gradientUnits="userSpaceOnUse" cx="213" cy="238" r="120"><stop offset="0" stop-color="#6a6a6a" stop-opacity="1"/><stop offset=".05" stop-color="#6a6a6a" stop-opacity=".75"/><stop offset=".15" stop-color="#6a6a6a" stop-opacity=".45"/><stop offset=".32" stop-color="#6a6a6a" stop-opacity=".22"/><stop offset=".6" stop-color="#6a6a6a" stop-opacity=".07"/><stop offset="1" stop-color="#6a6a6a" stop-opacity="0"/></radialGradient><radialGradient id="tlwg" gradientUnits="userSpaceOnUse" cx="60" cy="290" r="200"><stop offset="0" stop-color="#1e1b18" stop-opacity=".7"/><stop offset="1" stop-color="#1e1b18" stop-opacity="0"/></radialGradient><radialGradient id="tlmg"><stop offset="0" stop-color="#fff"/><stop offset=".5" stop-color="#fff" stop-opacity=".97"/><stop offset=".75" stop-color="#fff" stop-opacity=".5"/><stop offset="1" stop-color="#fff" stop-opacity="0"/></radialGradient></defs><rect width="355" height="290" fill="url(#tllg)"/><rect width="355" height="290" fill="url(#tlwg)"/><rect width="355" height="290" fill="url(#tlrg)"/><g transform="translate(213,238) scale(0.833,0.979)"><use href="#tree" stroke="#050505" fill="#050505"/></g><circle cx="213" cy="238" r="10.5" fill="url(#tlmg)"/></svg>
<div style="left:0.0px;top:85.0px;width:34.0px;height:272.0px;background:#1b47c6;border:2px solid #0c2fa0;border-top:none"></div><div style="left:0.0px;top:85.0px;width:34.0px;height:10.0px;background:linear-gradient(#3c7cf2,#1557e0 60%,#0d46c8)"></div><div style="left:2.5px;top:95.0px;width:29.0px;height:260.0px;background:#ece9d8"></div><div style="left:2.5px;top:95.0px;width:29.0px;height:13.0px;background:#fbfbfb"></div><svg style="left:2.5px;top:95.0px" width="29.0" height="13.0" viewBox="0 0 29 13" preserveAspectRatio="none"><path d="M1 4 Q8 -1 17 5 Q23 9 29 11 L29 13 Q20 12 12 9 Q4 7 1 4 Z" fill="#8c8c8c"/><path d="M3 4 Q12 4 28 12" stroke="#555" stroke-width=".6" fill="none"/></svg><div style="left:2.5px;top:108.0px;width:29.0px;height:1.0px;background:#c9c6b4"></div><svg style="left:4.5px;top:112.3px;overflow:visible" width="11.4" height="11.4" viewBox="0 0 12 12"><g fill="#222" stroke="#222"><circle cx="6" cy="6" r="4.2" fill="none" stroke-dasharray="1.4 1" stroke-width="1"/></g></svg><svg style="left:19.3px;top:112.3px;overflow:visible" width="11.4" height="11.4" viewBox="0 0 12 12"><g fill="#222" stroke="#222"><path d="M2 1 L2 9 L4.2 7 L5.6 10 L7 9.3 L5.7 6.5 L8.5 6.3 Z" stroke="none"/><path d="M8 8 h4 M10 6 v4" stroke-width="1"/></g></svg><svg style="left:4.5px;top:123.8px;overflow:visible" width="11.4" height="11.4" viewBox="0 0 12 12"><g fill="#222" stroke="#222"><path d="M3 3 Q6 0 9 3 Q10 6 6 7 Q3 7 3 4 M5 7 L4 11" fill="none" stroke-width="1.1"/></g></svg><svg style="left:19.3px;top:123.8px;overflow:visible" width="11.4" height="11.4" viewBox="0 0 12 12"><g fill="#222" stroke="#222"><path d="M2 11 L8 5" stroke-width="1.4"/><path d="M9 1 v3 M7.5 2.5 h3 M10 5 l1.5 1" stroke-width=".8"/></g></svg><svg style="left:4.5px;top:136.3px;overflow:visible" width="11.4" height="11.4" viewBox="0 0 12 12"><g fill="#222" stroke="#222"><path d="M3 1 V9 H11 M1 3 H9 V11" fill="none" stroke-width="1.3"/></g></svg><svg style="left:19.3px;top:136.3px;overflow:visible" width="11.4" height="11.4" viewBox="0 0 12 12"><g fill="#222" stroke="#222"><path d="M2 11 L9 3 L11 2 L10 5 Z" stroke="none"/></g></svg><div style="left:3.0px;top:153.0px;width:28.0px;height:1.0px;background:#cfccba"></div><div style="left:3.0px;top:154.0px;width:28.0px;height:1.0px;background:#fff"></div><svg style="left:4.5px;top:155.8px;overflow:visible" width="11.4" height="11.4" viewBox="0 0 12 12"><g fill="#222" stroke="#222"><path d="M2 9 L8 2 Q10 1 10.5 3.5 L4 10.5 Q2 11 2 9 Z" fill="#d8d8d0" stroke-width="1"/></g></svg><svg style="left:19.3px;top:155.8px;overflow:visible" width="11.4" height="11.4" viewBox="0 0 12 12"><g fill="#222" stroke="#222"><path d="M2 11 L4 8 L10 1.5 L10.5 2 L5 9 Z" stroke-width=".8"/></g></svg><svg style="left:4.5px;top:169.3px;overflow:visible" width="11.4" height="11.4" viewBox="0 0 12 12"><g fill="#222" stroke="#222"><path d="M5 2 h2 v3 h-2 z M3 6 h6 v2 h-6 z M2 9 h8 v2 h-8 z" stroke="none"/></g></svg><svg style="left:19.3px;top:169.3px;overflow:visible" width="11.4" height="11.4" viewBox="0 0 12 12"><g fill="#222" stroke="#222"><path d="M2 11 L10 3" stroke-width="1.3"/><path d="M3 3 Q1 6 4 8" fill="none" stroke-width=".9"/></g></svg><svg style="left:4.5px;top:182.3px;overflow:visible" width="11.4" height="11.4" viewBox="0 0 12 12"><g fill="#222" stroke="#222"><path d="M1 8 L6 3 L11 3 L6 8 Z" fill="#fff" stroke-width="1"/></g></svg><svg style="left:19.3px;top:182.3px;overflow:visible" width="11.4" height="11.4" viewBox="0 0 12 12"><g fill="#222" stroke="#222"><path d="M2 6 L6 2 L10 6 L6 10 Z" fill="#fff" stroke-width="1.1"/><path d="M10 7 v3" stroke-width="1.2"/></g></svg><svg style="left:4.5px;top:195.3px;overflow:visible" width="11.4" height="11.4" viewBox="0 0 12 12"><g fill="#222" stroke="#222"><path d="M6 1 Q9 6 9 8 Q9 11 6 11 Q3 11 3 8 Q3 6 6 1 Z" fill="#f0f0f0" stroke-width="1"/></g></svg><svg style="left:19.3px;top:195.3px;overflow:visible" width="11.4" height="11.4" viewBox="0 0 12 12"><g fill="#222" stroke="#222"><path d="M1 8 Q2 4 7 5 Q11 5 10 8 Q8 11 4 10 Z" fill="#ddd" stroke-width="1"/></g></svg><div style="left:3.0px;top:208.0px;width:28.0px;height:1.0px;background:#cfccba"></div><div style="left:3.0px;top:209.0px;width:28.0px;height:1.0px;background:#fff"></div><svg style="left:4.5px;top:214.3px;overflow:visible" width="11.4" height="11.4" viewBox="0 0 12 12"><g fill="#222" stroke="#222"><path d="M3 1 L3 11 L5.5 8.5 L7 11.5 L8.5 10.8 L7.2 8 L10 8 Z" stroke="none"/></g></svg><svg style="left:19.3px;top:214.3px;overflow:visible" width="11.4" height="11.4" viewBox="0 0 12 12"><g fill="#222" stroke="#222"><path d="M2 2 h8 v2 M6 2 v9 M4.5 11 h3 M2 2 v2" fill="none" stroke-width="1.5"/></g></svg><svg style="left:4.5px;top:228.3px;overflow:visible" width="11.4" height="11.4" viewBox="0 0 12 12"><g fill="#222" stroke="#222"><path d="M6 1 L9 6 L7 11 L5 11 L3 6 Z" fill="#fff" stroke-width="1"/><path d="M6 5 v3" stroke-width=".8"/></g></svg><svg style="left:19.3px;top:228.3px;overflow:visible" width="11.4" height="11.4" viewBox="0 0 12 12"><g fill="#222" stroke="#222"><path d="M1 1 L11 11" stroke-width="1.2"/></g></svg><div style="left:3.0px;top:242.0px;width:28.0px;height:1.0px;background:#cfccba"></div><div style="left:3.0px;top:243.0px;width:28.0px;height:1.0px;background:#fff"></div><svg style="left:4.5px;top:244.3px;overflow:visible" width="11.4" height="11.4" viewBox="0 0 12 12"><g fill="#222" stroke="#222"><path d="M2 1 h6 l2 2 v8 h-8 z" fill="#ddd" stroke-width="1"/></g></svg><svg style="left:19.3px;top:244.3px;overflow:visible" width="11.4" height="11.4" viewBox="0 0 12 12"><g fill="#222" stroke="#222"><path d="M2 11 L8 5" stroke-width="1.4"/><path d="M8 2 L10 4" stroke-width="2.6"/></g></svg><svg style="left:4.5px;top:257.3px;overflow:visible" width="11.4" height="11.4" viewBox="0 0 12 12"><g fill="#222" stroke="#222"><path d="M3 6 V3 Q4 2 5 3 V2 Q6 1 7 2 V3 Q8 2 9 3 V8 Q9 11 6 11 Q3 11 2 8 Z" fill="#fff" stroke-width="1"/></g></svg><svg style="left:19.3px;top:257.3px;overflow:visible" width="11.4" height="11.4" viewBox="0 0 12 12"><g fill="#222" stroke="#222"><circle cx="5" cy="5" r="3.3" fill="#fff" stroke-width="1.2"/><path d="M7.5 7.5 L11 11" stroke-width="1.8"/></g></svg><div style="left:3.0px;top:270.0px;width:28.0px;height:1.0px;background:#cfccba"></div><div style="left:3.0px;top:271.0px;width:28.0px;height:1.0px;background:#fff"></div><div style="left:4.5px;top:214.0px;width:11.9px;height:12.0px;border:1px solid #8a887a;background:rgba(255,255,255,.5)"></div><div style="left:12.6px;top:283.0px;width:15.0px;height:17.0px;background:#fff;border:1px solid #c8c8c8"></div><div style="left:7.1px;top:277.0px;width:13.6px;height:14.5px;background:#7b7b7b;border:1px solid #d8d8d8"></div><div style="left:4.4px;top:295.0px;width:3.8px;height:3.8px;background:#000;border-right:1px solid #fff"></div><svg style="left:22.4px;top:274.0px" width="7" height="7" viewBox="0 0 7 7"><path d="M1 2 Q5 1 5.5 6" stroke="#222" fill="none" stroke-width="1"/><path d="M0 2 L2 0 L2 4 Z M4 5 L7 5 L5.5 7Z" fill="#222"/></svg><div style="left:3.0px;top:305.0px;width:28.0px;height:1.0px;background:#cfccba"></div><div style="left:5.1px;top:309.0px;width:10.9px;height:11.0px;background:#f4f4f4;border:1px solid #777"></div><div style="left:7.5px;top:311.5px;width:6px;height:6px;border-radius:50%;border:1px solid #333;background:#fff"></div><div style="left:18.0px;top:309.0px;width:10.9px;height:11.0px;background:linear-gradient(#555,#aaa)"></div><div style="left:20.5px;top:311.5px;width:6px;height:6px;border-radius:50%;background:#fff"></div><div style="left:3.0px;top:323.0px;width:28.0px;height:1.0px;background:#cfccba"></div><div style="left:5.1px;top:326.0px;width:6.8px;height:9.0px;background:linear-gradient(#69c,#c56);border:1px solid #666"></div><div style="left:13.4px;top:326.0px;width:6.8px;height:9.0px;background:linear-gradient(#eee,#999);border:1px solid #666"></div><div style="left:21.8px;top:326.0px;width:6.8px;height:9.0px;background:linear-gradient(#ddd,#777);border:1px solid #666"></div><div style="left:3.0px;top:337.0px;width:28.0px;height:1.0px;background:#cfccba"></div><svg style="left:5.1px;top:339.0px" width="23.8" height="12.0" viewBox="0 0 24 12" preserveAspectRatio="none"><path d="M1 5 L8 2 L13 4 L13 10 L3 11 Z" fill="#eee" stroke="#222" stroke-width="1"/><path d="M10 6 L15 6 L15 4 L18 7 L15 10 L15 8 L10 8Z" fill="#222"/><path d="M17 2 L22 4 L23 11 L18 11 Z" fill="#ccc" stroke="#222" stroke-width="1"/></svg>
<div style="left:31px;top:28px;width:97px;height:189.5px;background:#fff;border:1px solid #9d9d92;box-shadow:2px 2px 1px rgba(0,0,0,.35)"></div>
<div class="t" style="left:39.0px;top:31.1px;color:#000;font-size:7.2px;transform-origin:0 0;transform:scaleX(0.86)">Mode</div>
<div style="left:119px;top:32.2px;width:0;height:0;border-left:3px solid #000;border-top:3px solid transparent;border-bottom:3px solid transparent"></div>
<div style="left:34.0px;top:42.0px;width:91.0px;height:1.0px;background:#c5c2b2"></div>
<div style="left:34.0px;top:43.0px;width:91.0px;height:1.0px;background:#fff"></div>
<div style="left:33.0px;top:46.0px;width:93.0px;height:10.0px;background:#316ac5"></div>
<div class="t" style="left:39.0px;top:47.5px;color:#fff;font-size:7.2px;transform-origin:0 0;transform:scaleX(0.86)">Adjustments</div>
<div style="left:119px;top:48.6px;width:0;height:0;border-left:3px solid #fff;border-top:3px solid transparent;border-bottom:3px solid transparent"></div>
<div style="left:34.0px;top:59.0px;width:91.0px;height:1.0px;background:#c5c2b2"></div>
<div style="left:34.0px;top:60.0px;width:91.0px;height:1.0px;background:#fff"></div>
<div class="t" style="left:39.0px;top:63.9px;color:#000;font-size:7.2px;transform-origin:0 0;transform:scaleX(0.86)">Duplicate...</div>
<div class="t" style="left:39.0px;top:74.3px;color:#000;font-size:7.2px;transform-origin:0 0;transform:scaleX(0.86)">Apply Image...</div>
<div class="t" style="left:39.0px;top:84.7px;color:#000;font-size:7.2px;transform-origin:0 0;transform:scaleX(0.86)">Calculations...</div>
<div style="left:34.0px;top:96.0px;width:91.0px;height:1.0px;background:#c5c2b2"></div>
<div style="left:34.0px;top:97.0px;width:91.0px;height:1.0px;background:#fff"></div>
<div class="t" style="left:39.0px;top:101.1px;color:#000;font-size:7.2px;transform-origin:0 0;transform:scaleX(0.86)">Image Size...</div>
<div class="t" style="left:120.0px;top:101.1px;color:#000;font-size:7.2px;transform-origin:100% 0;transform:translateX(-100%) scaleX(0.86)">Alt+Ctrl+I</div>
<div class="t" style="left:39.0px;top:111.5px;color:#000;font-size:7.2px;transform-origin:0 0;transform:scaleX(0.86)">Canvas Size...</div>
<div class="t" style="left:120.0px;top:111.5px;color:#000;font-size:7.2px;transform-origin:100% 0;transform:translateX(-100%) scaleX(0.86)">Alt+Ctrl+C</div>
<div class="t" style="left:39.0px;top:121.9px;color:#000;font-size:7.2px;transform-origin:0 0;transform:scaleX(0.86)">Pixel Aspect Ratio</div>
<div style="left:119px;top:123.0px;width:0;height:0;border-left:3px solid #000;border-top:3px solid transparent;border-bottom:3px solid transparent"></div>
<div class="t" style="left:39.0px;top:132.3px;color:#000;font-size:7.2px;transform-origin:0 0;transform:scaleX(0.86)">Rotate Canvas</div>
<div style="left:119px;top:133.4px;width:0;height:0;border-left:3px solid #000;border-top:3px solid transparent;border-bottom:3px solid transparent"></div>
<div class="t" style="left:39.0px;top:142.7px;color:#a8a797;font-size:7.2px;transform-origin:0 0;transform:scaleX(0.86)">Crop</div>
<div class="t" style="left:39.0px;top:153.1px;color:#000;font-size:7.2px;transform-origin:0 0;transform:scaleX(0.86)">Trim...</div>
<div class="t" style="left:39.0px;top:163.5px;color:#000;font-size:7.2px;transform-origin:0 0;transform:scaleX(0.86)">Reveal All</div>
<div style="left:34.0px;top:175.0px;width:91.0px;height:1.0px;background:#c5c2b2"></div>
<div style="left:34.0px;top:176.0px;width:91.0px;height:1.0px;background:#fff"></div>
<div class="t" style="left:39.0px;top:179.9px;color:#000;font-size:7.2px;transform-origin:0 0;transform:scaleX(0.86)">Variables</div>
<div style="left:119px;top:181.0px;width:0;height:0;border-left:3px solid #000;border-top:3px solid transparent;border-bottom:3px solid transparent"></div>
<div class="t" style="left:39.0px;top:190.3px;color:#a8a797;font-size:7.2px;transform-origin:0 0;transform:scaleX(0.86)">Apply Data Set...</div>
<div style="left:34.0px;top:202.0px;width:91.0px;height:1.0px;background:#c5c2b2"></div>
<div style="left:34.0px;top:203.0px;width:91.0px;height:1.0px;background:#fff"></div>
<div class="t" style="left:39.0px;top:206.7px;color:#a8a797;font-size:7.2px;transform-origin:0 0;transform:scaleX(0.86)">Trap...</div>
<div style="left:127px;top:44px;width:112px;height:250.8px;background:#fff;border:1px solid #9d9d92;box-shadow:2px 2px 1px rgba(0,0,0,.35)"></div>
<div class="t" style="left:135.0px;top:47.6px;color:#000;font-size:7.2px;transform-origin:0 0;transform:scaleX(0.86)">Levels...</div>
<div class="t" style="left:229.0px;top:47.6px;color:#000;font-size:7.2px;transform-origin:100% 0;transform:translateX(-100%) scaleX(0.86)">Ctrl+L</div>
<div class="t" style="left:135.0px;top:58.0px;color:#000;font-size:7.2px;transform-origin:0 0;transform:scaleX(0.86)">Auto Levels</div>
<div class="t" style="left:229.0px;top:58.0px;color:#000;font-size:7.2px;transform-origin:100% 0;transform:translateX(-100%) scaleX(0.86)">Shift+Ctrl+L</div>
<div class="t" style="left:135.0px;top:68.4px;color:#000;font-size:7.2px;transform-origin:0 0;transform:scaleX(0.86)">Auto Contrast</div>
<div class="t" style="left:229.0px;top:68.4px;color:#000;font-size:7.2px;transform-origin:100% 0;transform:translateX(-100%) scaleX(0.86)">Alt+Shift+Ctrl+L</div>
<div class="t" style="left:135.0px;top:78.8px;color:#000;font-size:7.2px;transform-origin:0 0;transform:scaleX(0.86)">Auto Color</div>
<div class="t" style="left:229.0px;top:78.8px;color:#000;font-size:7.2px;transform-origin:100% 0;transform:translateX(-100%) scaleX(0.86)">Shift+Ctrl+B</div>
<div class="t" style="left:135.0px;top:89.2px;color:#000;font-size:7.2px;transform-origin:0 0;transform:scaleX(0.86)">Curves...</div>
<div class="t" style="left:229.0px;top:89.2px;color:#000;font-size:7.2px;transform-origin:100% 0;transform:translateX(-100%) scaleX(0.86)">Ctrl+M</div>
<div class="t" style="left:135.0px;top:99.6px;color:#000;font-size:7.2px;transform-origin:0 0;transform:scaleX(0.86)">Color Balance...</div>
<div class="t" style="left:229.0px;top:99.6px;color:#000;font-size:7.2px;transform-origin:100% 0;transform:translateX(-100%) scaleX(0.86)">Ctrl+B</div>
<div class="t" style="left:135.0px;top:110.0px;color:#000;font-size:7.2px;transform-origin:0 0;transform:scaleX(0.86)">Brightness/Contrast...</div>
<div style="left:130.0px;top:121.0px;width:106.0px;height:1.0px;background:#c5c2b2"></div>
<div style="left:130.0px;top:122.0px;width:106.0px;height:1.0px;background:#fff"></div>
<div class="t" style="left:135.0px;top:126.4px;color:#000;font-size:7.2px;transform-origin:0 0;transform:scaleX(0.86)">Hue/Saturation...</div>
<div class="t" style="left:229.0px;top:126.4px;color:#000;font-size:7.2px;transform-origin:100% 0;transform:translateX(-100%) scaleX(0.86)">Ctrl+U</div>
<div class="t" style="left:135.0px;top:136.8px;color:#000;font-size:7.2px;transform-origin:0 0;transform:scaleX(0.86)">Desaturate</div>
<div class="t" style="left:229.0px;top:136.8px;color:#000;font-size:7.2px;transform-origin:100% 0;transform:translateX(-100%) scaleX(0.86)">Shift+Ctrl+U</div>
<div class="t" style="left:135.0px;top:147.2px;color:#000;font-size:7.2px;transform-origin:0 0;transform:scaleX(0.86)">Match Color...</div>
<div class="t" style="left:135.0px;top:157.6px;color:#000;font-size:7.2px;transform-origin:0 0;transform:scaleX(0.86)">Replace Color...</div>
<div class="t" style="left:135.0px;top:168.0px;color:#000;font-size:7.2px;transform-origin:0 0;transform:scaleX(0.86)">Selective Color...</div>
<div class="t" style="left:135.0px;top:178.4px;color:#000;font-size:7.2px;transform-origin:0 0;transform:scaleX(0.86)">Channel Mixer...</div>
<div class="t" style="left:135.0px;top:188.8px;color:#000;font-size:7.2px;transform-origin:0 0;transform:scaleX(0.86)">Gradient Map...</div>
<div class="t" style="left:135.0px;top:199.2px;color:#000;font-size:7.2px;transform-origin:0 0;transform:scaleX(0.86)">Photo Filter...</div>
<div style="left:129.0px;top:209.0px;width:108.0px;height:10.0px;background:#316ac5"></div>
<div class="t" style="left:135.0px;top:209.6px;color:#fff;font-size:7.2px;transform-origin:0 0;transform:scaleX(0.86)">Shadow/Highlight...</div>
<div class="t" style="left:135.0px;top:220.0px;color:#000;font-size:7.2px;transform-origin:0 0;transform:scaleX(0.86)">Exposure...</div>
<div style="left:130.0px;top:231.0px;width:106.0px;height:1.0px;background:#c5c2b2"></div>
<div style="left:130.0px;top:232.0px;width:106.0px;height:1.0px;background:#fff"></div>
<div class="t" style="left:135.0px;top:236.4px;color:#000;font-size:7.2px;transform-origin:0 0;transform:scaleX(0.86)">Invert</div>
<div class="t" style="left:229.0px;top:236.4px;color:#000;font-size:7.2px;transform-origin:100% 0;transform:translateX(-100%) scaleX(0.86)">Ctrl+I</div>
<div class="t" style="left:135.0px;top:246.8px;color:#000;font-size:7.2px;transform-origin:0 0;transform:scaleX(0.86)">Equalize</div>
<div class="t" style="left:135.0px;top:257.2px;color:#000;font-size:7.2px;transform-origin:0 0;transform:scaleX(0.86)">Threshold...</div>
<div class="t" style="left:135.0px;top:267.6px;color:#000;font-size:7.2px;transform-origin:0 0;transform:scaleX(0.86)">Posterize...</div>
<div style="left:130.0px;top:279.0px;width:106.0px;height:1.0px;background:#c5c2b2"></div>
<div style="left:130.0px;top:280.0px;width:106.0px;height:1.0px;background:#fff"></div>
<div class="t" style="left:135.0px;top:284.0px;color:#000;font-size:7.2px;transform-origin:0 0;transform:scaleX(0.86)">Variations...</div>
</div>
<div style="left:571px;top:0;width:642px;height:362px;overflow:hidden;background:#7f7f7f">
<div style="left:0.0px;top:0.0px;width:642.0px;height:13.0px;background:linear-gradient(to bottom,#4a9cff 0%,#1a66ee 8%,#0050dc 22%,#0055e4 50%,#0866f0 78%,#0058e6 90%,#0040c4 100%)"></div>
<svg style="left:1.5px;top:2.5px" width="8" height="8" viewBox="0 0 10 10"><rect x=".5" y=".5" width="9" height="9" rx="2" fill="#e8f4f4" stroke="#9cc" stroke-width=".6"/><path d="M2 7 Q3 3 7 2 Q5 5 8 8 Q4 8 2 7Z" fill="#2a9a7a"/></svg>
<div class="t" style="left:11.0px;top:1.6px;color:#fff;font-weight:bold;font-size:8.6px;text-shadow:1px 1px 0 rgba(0,0,40,.45);transform-origin:0 0;transform:scaleX(0.77);">Adobe Photoshop</div>
<div style="left:0.0px;top:13.0px;width:642.0px;height:12.0px;background:#ece9d8"></div>
<div class="t" style="left:2.4px;top:14.7px;color:#000;font-size:7.4px;transform-origin:0 0;transform:scaleX(0.8)">File</div>
<div class="t" style="left:17.0px;top:14.7px;color:#000;font-size:7.4px;transform-origin:0 0;transform:scaleX(0.8)">Edit</div>
<div class="t" style="left:33.0px;top:14.7px;color:#000;font-size:7.4px;transform-origin:0 0;transform:scaleX(0.8)">Image</div>
<div class="t" style="left:56.0px;top:14.7px;color:#000;font-size:7.4px;transform-origin:0 0;transform:scaleX(0.8)">Layer</div>
<div class="t" style="left:76.0px;top:14.7px;color:#000;font-size:7.4px;transform-origin:0 0;transform:scaleX(0.8)">Select</div>
<div class="t" style="left:98.0px;top:14.7px;color:#000;font-size:7.4px;transform-origin:0 0;transform:scaleX(0.8)">Filter</div>
<div class="t" style="left:117.0px;top:14.7px;color:#000;font-size:7.4px;transform-origin:0 0;transform:scaleX(0.8)">View</div>
<div class="t" style="left:135.0px;top:14.7px;color:#000;font-size:7.4px;transform-origin:0 0;transform:scaleX(0.8)">Window</div>
<div class="t" style="left:162.0px;top:14.7px;color:#000;font-size:7.4px;transform-origin:0 0;transform:scaleX(0.8)">Help</div>
<div style="left:0.0px;top:25.0px;width:642.0px;height:22.0px;background:#ece9d8;border-top:1px solid #cdc9b5;box-shadow:inset 0 1px #fff;border-bottom:1px solid #a9a690"></div>
<div style="left:2px;top:28px;width:2px;height:16px;background:repeating-linear-gradient(#b8b5a2 0 1px,transparent 1px 3px)"></div>
<svg style="left:11.9px;top:30.9px;overflow:visible" width="10.2" height="10.2" viewBox="0 0 12 12"><g fill="#111" stroke="#111"><path d="M2 11 L8 5" stroke-width="1.4"/><path d="M8 2 L10 4" stroke-width="2.6"/></g></svg>
<div style="left:26px;top:35px;width:0;height:0;border-top:3px solid #111;border-left:2.5px solid transparent;border-right:2.5px solid transparent"></div>
<div style="left:33.0px;top:27.0px;width:1.0px;height:18.0px;background:#c0bda8"></div><div style="left:34.0px;top:27.0px;width:1.0px;height:18.0px;background:#fff"></div>
<div class="t" style="left:36.0px;top:32.5px;color:#000;font-size:6.5px;transform-origin:0 0;transform:scaleX(0.76)">Sample Size:</div>
<div style="left:68.0px;top:31.0px;width:58.0px;height:11.0px;background:#fafaf8;border:1px solid #d5d3c8"></div>
<div class="t" style="left:71.0px;top:33.0px;color:#c0c0c0;font-size:6.3px;transform-origin:0 0;transform:scaleX(0.8)">Point Sample</div>
<div style="left:115.0px;top:32.0px;width:10.0px;height:9.0px;background:#f0efe8;border:1px solid #ddd"></div>
<div style="left:130.0px;top:27.0px;width:1.0px;height:18.0px;background:#c0bda8"></div><div style="left:131.0px;top:27.0px;width:1.0px;height:18.0px;background:#fff"></div>
<svg style="left:427px;top:29px" width="14" height="13" viewBox="0 0 14 13"><rect x="1" y="2" width="9" height="10" fill="#fff" stroke="#333" stroke-width="1"/><path d="M3 5 h4 M3 7 h4 M3 9 h3" stroke="#333" stroke-width=".8"/><path d="M9 1 L13 5 L11 5 L11 8" fill="none" stroke="#111" stroke-width="1.2"/></svg>
<div style="left:443.0px;top:29.0px;width:199.0px;height:14.0px;background:linear-gradient(#b5b5b5,#a5a5a5)"></div><div style="left:447.0px;top:32.0px;width:1.0px;height:10.0px;background:#555"></div><div class="t" style="left:450.0px;top:33.5px;font-size:5.6px;color:#333">Brushes</div><svg style="left:469.0px;top:31.0px" width="6" height="12" viewBox="0 0 6 10" preserveAspectRatio="none"><path d="M0 0 L6 10" stroke="#555" stroke-width=".8"/></svg><div style="left:477.0px;top:32.0px;width:1.0px;height:10.0px;background:#555"></div><div class="t" style="left:480.0px;top:33.5px;font-size:5.6px;color:#333">Tool Presets</div><svg style="left:510.0px;top:31.0px" width="6" height="12" viewBox="0 0 6 10" preserveAspectRatio="none"><path d="M0 0 L6 10" stroke="#555" stroke-width=".8"/></svg><div style="left:518.0px;top:32.0px;width:1.0px;height:10.0px;background:#555"></div><div class="t" style="left:521.0px;top:33.5px;font-size:5.6px;color:#333">Layer Comps</div><svg style="left:554.0px;top:31.0px" width="6" height="12" viewBox="0 0 6 10" preserveAspectRatio="none"><path d="M0 0 L6 10" stroke="#555" stroke-width=".8"/></svg>
<div style="left:218.0px;top:49.0px;width:424.0px;height:21.0px;background:linear-gradient(to bottom,#4a9cff 0%,#1a66ee 8%,#0050dc 22%,#0055e4 50%,#0866f0 78%,#0058e6 90%,#0040c4 100%)"></div>
<svg style="left:220.5px;top:54px" width="9" height="11" viewBox="0 0 10 11"><rect x=".5" y=".5" width="9" height="10" fill="#e8f4f4" stroke="#9cc" stroke-width=".6"/><path d="M2 8 Q3 3 7 2 Q5 5 8 9 Q4 9 2 8Z" fill="#2a9a7a"/></svg>
<div class="t" style="left:231.0px;top:53.5px;color:#fff;font-size:8px;font-weight:bold;text-shadow:1px 1px 0 rgba(0,0,40,.4);transform-origin:0 0;transform:scaleX(.863)">gms7nnjjaxzvsrqwopi.jpg @ 30.1% (Background, RGB/8)</div>
<div style="left:604.0px;top:54.0px;width:11.0px;height:12.0px;background:linear-gradient(135deg,#7aa8f8,#2f6ae8 50%,#1a50d0);border:1px solid #fff;border-radius:2px"></div><div style="left:607.0px;top:62.0px;width:4.0px;height:1.5px;background:#fff"></div><div style="left:617.0px;top:54.0px;width:11.0px;height:12.0px;background:linear-gradient(135deg,#7aa8f8,#2f6ae8 50%,#1a50d0);border:1px solid #fff;border-radius:2px"></div><div style="left:619.5px;top:57.0px;width:6.0px;height:6.0px;border:1px solid #fff;border-top-width:2px"></div><div style="left:630.0px;top:54.0px;width:11.0px;height:12.0px;background:linear-gradient(135deg,#f19e83,#e25b35 45%,#c8401e);border:1px solid #fff;border-radius:2px"></div><svg style="left:630.0px;top:54.0px" width="11" height="12" viewBox="0 0 10 10"><path d="M2.8 2.8 L7.2 7.2 M7.2 2.8 L2.8 7.2" stroke="#fff" stroke-width="1.5"/></svg>
<div style="left:218.0px;top:70.0px;width:424.0px;height:292.0px;background:#1a55d8"></div>
<svg style="left:218px;top:70px" width="414" height="292" viewBox="0 0 414 292"><defs><linearGradient id="trlg" x1="0" y1="0" x2="0" y2="1"><stop offset="0" stop-color="#2b2e2e"/><stop offset="1" stop-color="#434440"/></linearGradient><radialGradient id="trrg" gradientUnits="userSpaceOnUse" cx="221" cy="238" r="175"><stop offset="0" stop-color="#aab6b0" stop-opacity="1"/><stop offset=".05" stop-color="#aab6b0" stop-opacity=".75"/><stop offset=".15" stop-color="#aab6b0" stop-opacity=".45"/><stop offset=".32" stop-color="#aab6b0" stop-opacity=".22"/><stop offset=".6" stop-color="#aab6b0" stop-opacity=".07"/><stop offset="1" stop-color="#aab6b0" stop-opacity="0"/></radialGradient><radialGradient id="trwg" gradientUnits="userSpaceOnUse" cx="40" cy="290" r="220"><stop offset="0" stop-color="#58544a" stop-opacity=".7"/><stop offset="1" stop-color="#58544a" stop-opacity="0"/></radialGradient><radialGradient id="trmg"><stop offset="0" stop-color="#fff"/><stop offset=".5" stop-color="#fff" stop-opacity=".97"/><stop offset=".75" stop-color="#fff" stop-opacity=".5"/><stop offset="1" stop-color="#fff" stop-opacity="0"/></radialGradient></defs><rect width="414" height="292" fill="url(#trlg)"/><rect width="414" height="292" fill="url(#trwg)"/><rect width="414" height="292" fill="url(#trrg)"/><g transform="translate(221,238) scale(0.833,0.979)"><use href="#tree" stroke="#121212" fill="#121212"/></g><circle cx="221" cy="238" r="9.8" fill="url(#trmg)"/></svg>
<div style="left:632.0px;top:70.0px;width:8.0px;height:292.0px;background:#fdfdfd"></div>
<div style="left:1.0px;top:83.0px;width:34.0px;height:276.1px;background:#1b47c6;border:2px solid #0c2fa0;border-top:none"></div><div style="left:1.0px;top:83.0px;width:34.0px;height:10.1px;background:linear-gradient(#3c7cf2,#1557e0 60%,#0d46c8)"></div><div style="left:3.5px;top:93.2px;width:29.0px;height:263.9px;background:#ece9d8"></div><div style="left:3.5px;top:93.2px;width:29.0px;height:13.2px;background:#fbfbfb"></div><svg style="left:3.5px;top:93.2px" width="29.0" height="13.2" viewBox="0 0 29 13" preserveAspectRatio="none"><path d="M1 4 Q8 -1 17 5 Q23 9 29 11 L29 13 Q20 12 12 9 Q4 7 1 4 Z" fill="#8c8c8c"/><path d="M3 4 Q12 4 28 12" stroke="#555" stroke-width=".6" fill="none"/></svg><div style="left:3.5px;top:106.3px;width:29.0px;height:1.0px;background:#c9c6b4"></div><svg style="left:5.5px;top:110.8px;overflow:visible" width="11.4" height="11.4" viewBox="0 0 12 12"><g fill="#222" stroke="#222"><circle cx="6" cy="6" r="4.2" fill="none" stroke-dasharray="1.4 1" stroke-width="1"/></g></svg><svg style="left:20.3px;top:110.8px;overflow:visible" width="11.4" height="11.4" viewBox="0 0 12 12"><g fill="#222" stroke="#222"><path d="M2 1 L2 9 L4.2 7 L5.6 10 L7 9.3 L5.7 6.5 L8.5 6.3 Z" stroke="none"/><path d="M8 8 h4 M10 6 v4" stroke-width="1"/></g></svg><svg style="left:5.5px;top:122.5px;overflow:visible" width="11.4" height="11.4" viewBox="0 0 12 12"><g fill="#222" stroke="#222"><path d="M3 3 Q6 0 9 3 Q10 6 6 7 Q3 7 3 4 M5 7 L4 11" fill="none" stroke-width="1.1"/></g></svg><svg style="left:20.3px;top:122.5px;overflow:visible" width="11.4" height="11.4" viewBox="0 0 12 12"><g fill="#222" stroke="#222"><path d="M2 11 L8 5" stroke-width="1.4"/><path d="M9 1 v3 M7.5 2.5 h3 M10 5 l1.5 1" stroke-width=".8"/></g></svg><svg style="left:5.5px;top:135.2px;overflow:visible" width="11.4" height="11.4" viewBox="0 0 12 12"><g fill="#222" stroke="#222"><path d="M3 1 V9 H11 M1 3 H9 V11" fill="none" stroke-width="1.3"/></g></svg><svg style="left:20.3px;top:135.2px;overflow:visible" width="11.4" height="11.4" viewBox="0 0 12 12"><g fill="#222" stroke="#222"><path d="M2 11 L9 3 L11 2 L10 5 Z" stroke="none"/></g></svg><div style="left:4.0px;top:152.0px;width:28.0px;height:1.0px;background:#cfccba"></div><div style="left:4.0px;top:153.0px;width:28.0px;height:1.0px;background:#fff"></div><svg style="left:5.5px;top:154.9px;overflow:visible" width="11.4" height="11.4" viewBox="0 0 12 12"><g fill="#222" stroke="#222"><path d="M2 9 L8 2 Q10 1 10.5 3.5 L4 10.5 Q2 11 2 9 Z" fill="#d8d8d0" stroke-width="1"/></g></svg><svg style="left:20.3px;top:154.9px;overflow:visible" width="11.4" height="11.4" viewBox="0 0 12 12"><g fill="#222" stroke="#222"><path d="M2 11 L4 8 L10 1.5 L10.5 2 L5 9 Z" stroke-width=".8"/></g></svg><svg style="left:5.5px;top:168.7px;overflow:visible" width="11.4" height="11.4" viewBox="0 0 12 12"><g fill="#222" stroke="#222"><path d="M5 2 h2 v3 h-2 z M3 6 h6 v2 h-6 z M2 9 h8 v2 h-8 z" stroke="none"/></g></svg><svg style="left:20.3px;top:168.7px;overflow:visible" width="11.4" height="11.4" viewBox="0 0 12 12"><g fill="#222" stroke="#222"><path d="M2 11 L10 3" stroke-width="1.3"/><path d="M3 3 Q1 6 4 8" fill="none" stroke-width=".9"/></g></svg><svg style="left:5.5px;top:181.8px;overflow:visible" width="11.4" height="11.4" viewBox="0 0 12 12"><g fill="#222" stroke="#222"><path d="M1 8 L6 3 L11 3 L6 8 Z" fill="#fff" stroke-width="1"/></g></svg><svg style="left:20.3px;top:181.8px;overflow:visible" width="11.4" height="11.4" viewBox="0 0 12 12"><g fill="#222" stroke="#222"><path d="M2 6 L6 2 L10 6 L6 10 Z" fill="#fff" stroke-width="1.1"/><path d="M10 7 v3" stroke-width="1.2"/></g></svg><svg style="left:5.5px;top:195.0px;overflow:visible" width="11.4" height="11.4" viewBox="0 0 12 12"><g fill="#222" stroke="#222"><path d="M6 1 Q9 6 9 8 Q9 11 6 11 Q3 11 3 8 Q3 6 6 1 Z" fill="#f0f0f0" stroke-width="1"/></g></svg><svg style="left:20.3px;top:195.0px;overflow:visible" width="11.4" height="11.4" viewBox="0 0 12 12"><g fill="#222" stroke="#222"><path d="M1 8 Q2 4 7 5 Q11 5 10 8 Q8 11 4 10 Z" fill="#ddd" stroke-width="1"/></g></svg><div style="left:4.0px;top:207.8px;width:28.0px;height:1.0px;background:#cfccba"></div><div style="left:4.0px;top:208.8px;width:28.0px;height:1.0px;background:#fff"></div><svg style="left:5.5px;top:214.3px;overflow:visible" width="11.4" height="11.4" viewBox="0 0 12 12"><g fill="#222" stroke="#222"><path d="M3 1 L3 11 L5.5 8.5 L7 11.5 L8.5 10.8 L7.2 8 L10 8 Z" stroke="none"/></g></svg><svg style="left:20.3px;top:214.3px;overflow:visible" width="11.4" height="11.4" viewBox="0 0 12 12"><g fill="#222" stroke="#222"><path d="M2 2 h8 v2 M6 2 v9 M4.5 11 h3 M2 2 v2" fill="none" stroke-width="1.5"/></g></svg><svg style="left:5.5px;top:228.5px;overflow:visible" width="11.4" height="11.4" viewBox="0 0 12 12"><g fill="#222" stroke="#222"><path d="M6 1 L9 6 L7 11 L5 11 L3 6 Z" fill="#fff" stroke-width="1"/><path d="M6 5 v3" stroke-width=".8"/></g></svg><svg style="left:20.3px;top:228.5px;overflow:visible" width="11.4" height="11.4" viewBox="0 0 12 12"><g fill="#222" stroke="#222"><path d="M1 1 L11 11" stroke-width="1.2"/></g></svg><div style="left:4.0px;top:242.4px;width:28.0px;height:1.0px;background:#cfccba"></div><div style="left:4.0px;top:243.4px;width:28.0px;height:1.0px;background:#fff"></div><svg style="left:5.5px;top:244.8px;overflow:visible" width="11.4" height="11.4" viewBox="0 0 12 12"><g fill="#222" stroke="#222"><path d="M2 1 h6 l2 2 v8 h-8 z" fill="#ddd" stroke-width="1"/></g></svg><svg style="left:20.3px;top:244.8px;overflow:visible" width="11.4" height="11.4" viewBox="0 0 12 12"><g fill="#222" stroke="#222"><path d="M2 11 L8 5" stroke-width="1.4"/><path d="M8 2 L10 4" stroke-width="2.6"/></g></svg><svg style="left:5.5px;top:258.0px;overflow:visible" width="11.4" height="11.4" viewBox="0 0 12 12"><g fill="#222" stroke="#222"><path d="M3 6 V3 Q4 2 5 3 V2 Q6 1 7 2 V3 Q8 2 9 3 V8 Q9 11 6 11 Q3 11 2 8 Z" fill="#fff" stroke-width="1"/></g></svg><svg style="left:20.3px;top:258.0px;overflow:visible" width="11.4" height="11.4" viewBox="0 0 12 12"><g fill="#222" stroke="#222"><circle cx="5" cy="5" r="3.3" fill="#fff" stroke-width="1.2"/><path d="M7.5 7.5 L11 11" stroke-width="1.8"/></g></svg><div style="left:4.0px;top:270.8px;width:28.0px;height:1.0px;background:#cfccba"></div><div style="left:4.0px;top:271.8px;width:28.0px;height:1.0px;background:#fff"></div><div style="left:5.5px;top:213.9px;width:11.9px;height:12.2px;border:1px solid #8a887a;background:rgba(255,255,255,.5)"></div><div style="left:13.6px;top:284.0px;width:15.0px;height:17.3px;background:#fff;border:1px solid #c8c8c8"></div><div style="left:8.1px;top:277.9px;width:13.6px;height:14.7px;background:#7b7b7b;border:1px solid #d8d8d8"></div><div style="left:5.4px;top:296.1px;width:3.8px;height:3.8px;background:#000;border-right:1px solid #fff"></div><svg style="left:23.4px;top:274.8px" width="7" height="7" viewBox="0 0 7 7"><path d="M1 2 Q5 1 5.5 6" stroke="#222" fill="none" stroke-width="1"/><path d="M0 2 L2 0 L2 4 Z M4 5 L7 5 L5.5 7Z" fill="#222"/></svg><div style="left:4.0px;top:306.3px;width:28.0px;height:1.0px;background:#cfccba"></div><div style="left:6.1px;top:310.4px;width:10.9px;height:11.2px;background:#f4f4f4;border:1px solid #777"></div><div style="left:8.5px;top:312.9px;width:6px;height:6px;border-radius:50%;border:1px solid #333;background:#fff"></div><div style="left:19.0px;top:310.4px;width:10.9px;height:11.2px;background:linear-gradient(#555,#aaa)"></div><div style="left:21.5px;top:312.9px;width:6px;height:6px;border-radius:50%;background:#fff"></div><div style="left:4.0px;top:324.6px;width:28.0px;height:1.0px;background:#cfccba"></div><div style="left:6.1px;top:327.6px;width:6.8px;height:9.1px;background:linear-gradient(#69c,#c56);border:1px solid #666"></div><div style="left:14.4px;top:327.6px;width:6.8px;height:9.1px;background:linear-gradient(#eee,#999);border:1px solid #666"></div><div style="left:22.8px;top:327.6px;width:6.8px;height:9.1px;background:linear-gradient(#ddd,#777);border:1px solid #666"></div><div style="left:4.0px;top:338.8px;width:28.0px;height:1.0px;background:#cfccba"></div><svg style="left:6.1px;top:340.8px" width="23.8" height="12.2" viewBox="0 0 24 12" preserveAspectRatio="none"><path d="M1 5 L8 2 L13 4 L13 10 L3 11 Z" fill="#eee" stroke="#222" stroke-width="1"/><path d="M10 6 L15 6 L15 4 L18 7 L15 10 L15 8 L10 8Z" fill="#222"/><path d="M17 2 L22 4 L23 11 L18 11 Z" fill="#ccc" stroke="#222" stroke-width="1"/></svg>
<div style="left:19.0px;top:63.0px;width:199.0px;height:299.0px;background:#0a4ed8;border-radius:6px 6px 0 0"></div>
<div style="left:19.0px;top:63.0px;width:199.0px;height:18.0px;background:linear-gradient(to bottom,#4a9cff 0%,#1a66ee 8%,#0050dc 22%,#0055e4 50%,#0866f0 78%,#0058e6 90%,#0040c4 100%);border-radius:6px 6px 0 0"></div>
<div class="t" style="left:24.0px;top:66.5px;color:#fff;font-weight:bold;font-size:8.2px;text-shadow:1px 1px 0 rgba(0,0,40,.5);transform-origin:0 0;transform:scaleX(.825)">Shadow/Highlight</div>
<div style="left:204.5px;top:66.5px;width:11.0px;height:12.0px;background:linear-gradient(135deg,#f19e83,#e25b35 45%,#c8401e);border:1px solid #fff;border-radius:2px"></div><svg style="left:204.5px;top:66.5px" width="11" height="12" viewBox="0 0 10 10"><path d="M2.8 2.8 L7.2 7.2 M7.2 2.8 L2.8 7.2" stroke="#fff" stroke-width="1.5"/></svg>
<div style="left:22.0px;top:81.0px;width:194.0px;height:281.0px;background:#ece9d8"></div>
<div style="left:26.6px;top:92.7px;width:137.0px;height:92.3px;border:1px solid #d0d0bf;border-radius:3px"></div><div style="left:33.0px;top:88.7px;width:29.2px;height:8.0px;background:#ece9d8"></div><div class="t" style="left:35.0px;top:88.7px;font-size:7px;color:#0046d5">Shadows</div>
<div style="left:26.6px;top:198.3px;width:137.0px;height:92.7px;border:1px solid #d0d0bf;border-radius:3px"></div><div style="left:32.0px;top:194.3px;width:40.0px;height:8.0px;background:#ece9d8"></div><div class="t" style="left:34.0px;top:194.3px;font-size:7px;color:#0046d5">Highlights</div>
<div style="left:26.6px;top:304.2px;width:137.0px;height:80.0px;border:1px solid #d0d0bf;border-radius:3px"></div><div style="left:32.0px;top:300.2px;width:43.6px;height:8.0px;background:#ece9d8"></div><div class="t" style="left:34.0px;top:300.2px;font-size:7px;color:#0046d5">Adjustments</div>
<div class="t" style="left:30.0px;top:103.5px;color:#000;font-size:7.2px;transform-origin:0 0;transform:scaleX(0.9)">Amount:</div>
<div style="left:127.6px;top:101.5px;width:22.0px;height:13.0px;background:#fff;border:1px solid #7f9db9"></div><div class="t" style="left:130.6px;top:103.9px;font-size:7.2px">71</div>
<div class="t" style="left:152.0px;top:103.5px;color:#000;font-size:7.2px;transform-origin:0 0;transform:scaleX(0.9)">%</div>
<div style="left:34.0px;top:120.4px;width:115.0px;height:2.0px;border-top:1px solid #a5a395;border-bottom:1px solid #fff"></div><svg style="left:113.7px;top:116.4px" width="7" height="8" viewBox="0 0 7 8"><path d="M0.5 3 L3.5 0.5 L6.5 3 L6.5 7.5 L0.5 7.5 Z" fill="#f4f4f0" stroke="#5d9c63" stroke-width="1"/><path d="M1 7 h5" stroke="#21a121" stroke-width="1.2"/></svg>
<div class="t" style="left:30.0px;top:131.5px;color:#000;font-size:7.2px;transform-origin:0 0;transform:scaleX(0.9)">Tonal Width:</div>
<div style="left:127.6px;top:129.5px;width:22.0px;height:13.0px;background:#fff;border:1px solid #7f9db9"></div><div class="t" style="left:130.6px;top:131.9px;font-size:7.2px">48</div>
<div class="t" style="left:152.0px;top:131.5px;color:#000;font-size:7.2px;transform-origin:0 0;transform:scaleX(0.9)">%</div>
<div style="left:34.0px;top:149.0px;width:115.0px;height:2.0px;border-top:1px solid #a5a395;border-bottom:1px solid #fff"></div><svg style="left:86.8px;top:145.0px" width="7" height="8" viewBox="0 0 7 8"><path d="M0.5 3 L3.5 0.5 L6.5 3 L6.5 7.5 L0.5 7.5 Z" fill="#f4f4f0" stroke="#5d9c63" stroke-width="1"/><path d="M1 7 h5" stroke="#21a121" stroke-width="1.2"/></svg>
<div class="t" style="left:30.0px;top:160.5px;color:#000;font-size:7.2px;transform-origin:0 0;transform:scaleX(0.9)">Radius:</div>
<div style="left:127.6px;top:158.5px;width:22.0px;height:13.0px;background:#fff;border:1px solid #7f9db9"></div><div style="left:129.6px;top:160.5px;width:10.0px;height:9.0px;background:#316ac5"></div><div class="t" style="left:130.6px;top:160.9px;font-size:7.2px;color:#fff">30</div>
<div class="t" style="left:152.0px;top:160.5px;color:#000;font-size:7.2px;transform-origin:0 0;transform:scaleX(0.9)">px</div>
<div style="left:34.0px;top:178.0px;width:115.0px;height:2.0px;border-top:1px solid #a5a395;border-bottom:1px solid #fff"></div><svg style="left:53.7px;top:174.0px" width="7" height="8" viewBox="0 0 7 8"><path d="M0.5 3 L3.5 0.5 L6.5 3 L6.5 7.5 L0.5 7.5 Z" fill="#f4f4f0" stroke="#5d9c63" stroke-width="1"/><path d="M1 7 h5" stroke="#21a121" stroke-width="1.2"/></svg>
<div class="t" style="left:30.0px;top:208.7px;color:#000;font-size:7.2px;transform-origin:0 0;transform:scaleX(0.9)">Amount:</div>
<div style="left:127.6px;top:206.7px;width:22.0px;height:13.0px;background:#fff;border:1px solid #7f9db9"></div><div class="t" style="left:130.6px;top:209.1px;font-size:7.2px">57</div>
<div class="t" style="left:152.0px;top:208.7px;color:#000;font-size:7.2px;transform-origin:0 0;transform:scaleX(0.9)">%</div>
<div style="left:34.0px;top:226.4px;width:115.0px;height:2.0px;border-top:1px solid #a5a395;border-bottom:1px solid #fff"></div><svg style="left:97.8px;top:222.4px" width="7" height="8" viewBox="0 0 7 8"><path d="M0.5 3 L3.5 0.5 L6.5 3 L6.5 7.5 L0.5 7.5 Z" fill="#f4f4f0" stroke="#5d9c63" stroke-width="1"/><path d="M1 7 h5" stroke="#21a121" stroke-width="1.2"/></svg>
<div class="t" style="left:30.0px;top:237.5px;color:#000;font-size:7.2px;transform-origin:0 0;transform:scaleX(0.9)">Tonal Width:</div>
<div style="left:127.6px;top:235.5px;width:22.0px;height:13.0px;background:#fff;border:1px solid #7f9db9"></div><div class="t" style="left:130.6px;top:237.9px;font-size:7.2px">46</div>
<div class="t" style="left:152.0px;top:237.5px;color:#000;font-size:7.2px;transform-origin:0 0;transform:scaleX(0.9)">%</div>
<div style="left:34.0px;top:255.3px;width:115.0px;height:2.0px;border-top:1px solid #a5a395;border-bottom:1px solid #fff"></div><svg style="left:84.6px;top:251.3px" width="7" height="8" viewBox="0 0 7 8"><path d="M0.5 3 L3.5 0.5 L6.5 3 L6.5 7.5 L0.5 7.5 Z" fill="#f4f4f0" stroke="#5d9c63" stroke-width="1"/><path d="M1 7 h5" stroke="#21a121" stroke-width="1.2"/></svg>
<div class="t" style="left:30.0px;top:266.2px;color:#000;font-size:7.2px;transform-origin:0 0;transform:scaleX(0.9)">Radius:</div>
<div style="left:127.6px;top:264.2px;width:22.0px;height:13.0px;background:#fff;border:1px solid #7f9db9"></div><div class="t" style="left:130.6px;top:266.6px;font-size:7.2px">32</div>
<div class="t" style="left:152.0px;top:266.2px;color:#000;font-size:7.2px;transform-origin:0 0;transform:scaleX(0.9)">px</div>
<div style="left:34.0px;top:283.6px;width:115.0px;height:2.0px;border-top:1px solid #a5a395;border-bottom:1px solid #fff"></div><svg style="left:49.0px;top:279.6px" width="7" height="8" viewBox="0 0 7 8"><path d="M0.5 3 L3.5 0.5 L6.5 3 L6.5 7.5 L0.5 7.5 Z" fill="#f4f4f0" stroke="#5d9c63" stroke-width="1"/><path d="M1 7 h5" stroke="#21a121" stroke-width="1.2"/></svg>
<div class="t" style="left:30.0px;top:314.9px;color:#000;font-size:7.2px;transform-origin:0 0;transform:scaleX(0.9)">Color Correction:</div>
<div style="left:127.6px;top:312.9px;width:22.0px;height:13.0px;background:#fff;border:1px solid #7f9db9"></div><div class="t" style="left:130.6px;top:315.3px;font-size:7.2px">+20</div>
<div style="left:34.0px;top:332.3px;width:115.0px;height:2.0px;border-top:1px solid #a5a395;border-bottom:1px solid #fff"></div><svg style="left:101.0px;top:328.3px" width="7" height="8" viewBox="0 0 7 8"><path d="M0.5 3 L3.5 0.5 L6.5 3 L6.5 7.5 L0.5 7.5 Z" fill="#f4f4f0" stroke="#5d9c63" stroke-width="1"/><path d="M1 7 h5" stroke="#21a121" stroke-width="1.2"/></svg>
<div class="t" style="left:30.0px;top:342.9px;color:#000;font-size:7.2px;transform-origin:0 0;transform:scaleX(0.9)">Midtone Contrast:</div>
<div style="left:127.6px;top:340.9px;width:22.0px;height:13.0px;background:#fff;border:1px solid #7f9db9"></div><div class="t" style="left:130.6px;top:343.3px;font-size:7.2px">0</div>
<div style="left:34.0px;top:360.5px;width:115.0px;height:2.0px;border-top:1px solid #a5a395;border-bottom:1px solid #fff"></div><svg style="left:89.5px;top:356.5px" width="7" height="8" viewBox="0 0 7 8"><path d="M0.5 3 L3.5 0.5 L6.5 3 L6.5 7.5 L0.5 7.5 Z" fill="#f4f4f0" stroke="#5d9c63" stroke-width="1"/><path d="M1 7 h5" stroke="#21a121" stroke-width="1.2"/></svg>
<div style="left:173.0px;top:91.8px;width:38.0px;height:11.0px;background:linear-gradient(#fff,#f3f3ee 60%,#dcdad0);border:1px solid #003c74;border-radius:2px;box-shadow:inset 0 0 0 1px #8cb4f2"></div><div class="t" style="left:173.0px;top:91.8px;width:38.0px;height:11.0px;line-height:11.0px;text-align:center;font-size:7.2px">OK</div>
<div style="left:173.0px;top:109.4px;width:38.0px;height:11.0px;background:linear-gradient(#fff,#f3f3ee 60%,#dcdad0);border:1px solid #003c74;border-radius:2px"></div><div class="t" style="left:173.0px;top:109.4px;width:38.0px;height:11.0px;line-height:11.0px;text-align:center;font-size:7.2px">Cancel</div>
<div style="left:173.0px;top:130.8px;width:38.0px;height:11.4px;background:linear-gradient(#fff,#f3f3ee 60%,#dcdad0);border:1px solid #003c74;border-radius:2px"></div><div class="t" style="left:173.0px;top:130.8px;width:38.0px;height:11.4px;line-height:11.4px;text-align:center;font-size:7.2px">Load...</div>
<div style="left:173.0px;top:148.8px;width:38.0px;height:11.2px;background:linear-gradient(#fff,#f3f3ee 60%,#dcdad0);border:1px solid #003c74;border-radius:2px"></div><div class="t" style="left:173.0px;top:148.8px;width:38.0px;height:11.2px;line-height:11.2px;text-align:center;font-size:7.2px">Save...</div>
<div style="left:173.0px;top:169.2px;width:9.0px;height:9.0px;background:#fff;border:1px solid #1c5180"></div>
<svg style="left:174px;top:170px" width="7" height="7" viewBox="0 0 7 7"><path d="M1 3.5 L3 5.5 L6 1.5" stroke="#21a121" stroke-width="1.6" fill="none"/></svg>
<div class="t" style="left:183.0px;top:169.0px;color:#000;font-size:7.2px;transform-origin:0 0;transform:scaleX(0.9)">Preview</div>
</div>
<div style="left:0;top:362px;width:454px;height:365px;overflow:hidden;background:#34353d">
<div style="left:0.0px;top:0.0px;width:454.0px;height:16.0px;background:linear-gradient(to bottom,#8eaaf0 0%,#7d9ce6 15%,#7b9ae2 50%,#7c9ce4 85%,#6f8ed8 100%)"></div>
<div class="t" style="left:15.0px;top:2.8px;color:#fff;font-weight:bold;font-size:9px;text-shadow:1px 1px 0 rgba(0,0,40,.45);transform-origin:0 0;transform:scaleX(1.0);font-weight:normal;letter-spacing:.4px;color:#eef2ff;text-shadow:.35px 0 0 #eef2ff">Iris - Version 5.58 - c:\documents and settings\andris\my documents\my pictures\halo\gms7nnjjaxzv</div>
<div style="left:3.0px;top:3.0px;width:10.0px;height:10.0px;background:#d22;border:1px solid #fff;box-shadow:0 0 0 1px #456"></div>
<div style="left:0.0px;top:16.0px;width:454.0px;height:14.0px;background:#ece9d8"></div>
<div class="t" style="left:4.0px;top:18.7px;color:#aca899;font-size:7.4px;transform-origin:0 0;transform:scaleX(1.0)">File</div>
<div class="t" style="left:23.0px;top:18.7px;color:#aca899;font-size:7.4px;transform-origin:0 0;transform:scaleX(1.0)">View</div>
<div class="t" style="left:47.0px;top:18.7px;color:#aca899;font-size:7.4px;transform-origin:0 0;transform:scaleX(1.0)">Geometry</div>
<div class="t" style="left:88.0px;top:18.7px;color:#aca899;font-size:7.4px;transform-origin:0 0;transform:scaleX(1.0)">Preprocessing</div>
<div class="t" style="left:143.0px;top:18.7px;color:#aca899;font-size:7.4px;transform-origin:0 0;transform:scaleX(1.0)">Processing</div>
<div class="t" style="left:187.0px;top:18.7px;color:#aca899;font-size:7.4px;transform-origin:0 0;transform:scaleX(1.0)">Spectro</div>
<div class="t" style="left:222.0px;top:18.7px;color:#aca899;font-size:7.4px;transform-origin:0 0;transform:scaleX(1.0)">Analysis</div>
<div class="t" style="left:257.0px;top:18.7px;color:#aca899;font-size:7.4px;transform-origin:0 0;transform:scaleX(1.0)">Data Base</div>
<div class="t" style="left:300.0px;top:18.7px;color:#aca899;font-size:7.4px;transform-origin:0 0;transform:scaleX(1.0)">Digital photo</div>
<div class="t" style="left:350.0px;top:18.7px;color:#aca899;font-size:7.4px;transform-origin:0 0;transform:scaleX(1.0)">Video</div>
<div class="t" style="left:373.0px;top:18.7px;color:#aca899;font-size:7.4px;transform-origin:0 0;transform:scaleX(1.0)">Help</div>
<div style="left:0.0px;top:30.0px;width:454.0px;height:20.0px;background:#ece9d8;border-top:1px solid #fff;border-bottom:1px solid #a9a690"></div>
<div style="left:5.0px;top:33.0px;width:14.0px;height:14.0px;background:#ece9d8;border:1px solid;border-color:#fff #716f64 #716f64 #fff"></div>
<svg style="left:7px;top:35px" width="10" height="10" viewBox="0 0 10 10"><path d="M1 3 h3 l1 1 h4 v5 h-8z" fill="#e8c040" stroke="#333" stroke-width=".8"/></svg>
<div style="left:20.0px;top:33.0px;width:14.0px;height:14.0px;background:#ece9d8;border:1px solid;border-color:#fff #716f64 #716f64 #fff"></div>
<svg style="left:22px;top:35px" width="10" height="10" viewBox="0 0 10 10"><rect x="1" y="1" width="8" height="8" fill="#222"/><rect x="3" y="1.5" width="4" height="3" fill="#ddd"/></svg>
<div style="left:40.0px;top:33.0px;width:14.0px;height:14.0px;background:#ece9d8;border:1px solid;border-color:#fff #716f64 #716f64 #fff"></div>
<svg style="left:42px;top:35px" width="10" height="10" viewBox="0 0 10 10"><path d="M3 3 Q8 2 8 6 Q8 9 4 8" fill="none" stroke="#aaa" stroke-width="1"/></svg>
<div style="left:62.0px;top:33.0px;width:14.0px;height:14.0px;background:#ece9d8;border:1px solid;border-color:#fff #716f64 #716f64 #fff"></div>
<svg style="left:64px;top:35px" width="10" height="10" viewBox="0 0 10 10"><path d="M1 3 h8 M1 7 h8 M3 2 v2 M6 6 v2" stroke="#666" stroke-width="1"/></svg>
<div style="left:83.0px;top:33.0px;width:14.0px;height:14.0px;background:#ece9d8;border:1px solid;border-color:#fff #716f64 #716f64 #fff"></div>
<svg style="left:85px;top:35px" width="10" height="10" viewBox="0 0 10 10"><rect x="1" y="1" width="8" height="8" fill="#fff" stroke="#0030a0" stroke-width="1.2"/><path d="M5 2 v6 M2 5 h6" stroke="#0030a0" stroke-width="1.4"/></svg>
<div style="left:98.0px;top:33.0px;width:14.0px;height:14.0px;background:#ece9d8;border:1px solid;border-color:#fff #716f64 #716f64 #fff"></div>
<svg style="left:100px;top:35px" width="10" height="10" viewBox="0 0 10 10"><path d="M5 0.5 L7 3 H6 V4 H4 V3 H3 Z M5 9.5 L7 7 H6 V6 H4 V7 H3 Z M0.5 5 L3 3 V7 Z M9.5 5 L7 3 V7 Z" fill="#0030c0"/><rect x="3.5" y="3.5" width="3" height="3" fill="#0030c0"/></svg>
<div style="left:114.0px;top:33.0px;width:14.0px;height:14.0px;background:#ece9d8;border:1px solid;border-color:#fff #716f64 #716f64 #fff"></div>
<div class="t" style="left:116.0px;top:35.0px;font-size:8px;font-weight:bold;color:#0020a0;font-family:"Liberation Serif",serif">x1</div>
<div style="left:135.0px;top:33.0px;width:14.0px;height:14.0px;background:#ece9d8;border:1px solid;border-color:#fff #716f64 #716f64 #fff"></div>
<svg style="left:137px;top:35px" width="10" height="10" viewBox="0 0 10 10"><path d="M1.5 5 Q1.5 1.5 5 1.5 Q8.5 1.5 8.5 4 M8.5 5 Q8.5 8.5 5 8.5 Q1.5 8.5 1.5 6 M3 5 h4" fill="none" stroke="#e02020" stroke-width="1.4"/></svg>
<div style="left:150.0px;top:33.0px;width:14.0px;height:14.0px;background:#ece9d8;border:1px solid;border-color:#fff #716f64 #716f64 #fff"></div>
<div style="left:153.0px;top:36.0px;width:8.0px;height:8.0px;background:#f0a020;border:1px solid #604000"></div>
<div style="left:166.0px;top:33.0px;width:14.0px;height:14.0px;background:#ece9d8;border:1px solid;border-color:#fff #716f64 #716f64 #fff"></div>
<div class="t" style="left:169.5px;top:35.0px;font-size:8.5px;color:#aaa;font-family:"Liberation Serif",serif">H</div>
<div style="left:187.0px;top:33.0px;width:14.0px;height:14.0px;background:#ece9d8;border:1px solid;border-color:#fff #716f64 #716f64 #fff"></div>
<svg style="left:189px;top:35px" width="10" height="10" viewBox="0 0 10 10"><path d="M4 2 h5 M4 5 h5 M4 8 h5" stroke="#222" stroke-width="1.6"/><path d="M1 1 l2 1.5 l-2 1.5" fill="none" stroke="#222" stroke-width=".7"/></svg>
<div style="left:208.0px;top:33.0px;width:14.0px;height:14.0px;background:#ece9d8;border:1px solid;border-color:#fff #716f64 #716f64 #fff"></div>
<svg style="left:210px;top:35px" width="10" height="10" viewBox="0 0 10 10"><rect x="1" y="3" width="8" height="5.5" fill="none" stroke="#222" stroke-width="1.1"/><circle cx="5" cy="5.8" r="1.6" fill="none" stroke="#222" stroke-width="1"/><rect x="3.5" y="1.8" width="3" height="1.3" fill="#222"/></svg>
<div style="left:228.0px;top:33.0px;width:14.0px;height:14.0px;background:#ece9d8;border:1px solid;border-color:#fff #716f64 #716f64 #fff"></div>
<svg style="left:230px;top:35px" width="10" height="10" viewBox="0 0 10 10"><path d="M5 1.5 L8.5 5 L5 8.5 L1.5 5 Z" fill="#0050e0"/><circle cx="5" cy="5" r="1.2" fill="#fff"/></svg>
<div style="left:248.0px;top:33.0px;width:14.0px;height:14.0px;background:#ece9d8;border:1px solid;border-color:#fff #716f64 #716f64 #fff"></div>
<svg style="left:250px;top:35px" width="10" height="10" viewBox="0 0 10 10"><path d="M5 1.5 L8.5 5 L5 8.5 L1.5 5 Z" fill="#e01010"/></svg>
<div style="left:264.0px;top:31.0px;width:1.0px;height:18.0px;background:#c0bda8"></div><div style="left:265.0px;top:31.0px;width:1.0px;height:18.0px;background:#fff"></div>
<svg style="left:1px;top:50px" width="453" height="315" viewBox="0 0 453 315"><defs><linearGradient id="bllg" x1="0" y1="0" x2="0" y2="1"><stop offset="0" stop-color="#2b2c32"/><stop offset="1" stop-color="#5e5656"/></linearGradient><radialGradient id="blrg" gradientUnits="userSpaceOnUse" cx="239.8" cy="208.20000000000005" r="160"><stop offset="0" stop-color="#c4c8dc" stop-opacity="1"/><stop offset=".05" stop-color="#c4c8dc" stop-opacity=".75"/><stop offset=".15" stop-color="#c4c8dc" stop-opacity=".45"/><stop offset=".32" stop-color="#c4c8dc" stop-opacity=".22"/><stop offset=".6" stop-color="#c4c8dc" stop-opacity=".07"/><stop offset="1" stop-color="#c4c8dc" stop-opacity="0"/></radialGradient><radialGradient id="blwg" gradientUnits="userSpaceOnUse" cx="0" cy="250" r="130"><stop offset="0" stop-color="#6e5a55" stop-opacity=".7"/><stop offset="1" stop-color="#6e5a55" stop-opacity="0"/></radialGradient><radialGradient id="blmg"><stop offset="0" stop-color="#fff"/><stop offset=".5" stop-color="#fff" stop-opacity=".97"/><stop offset=".75" stop-color="#fff" stop-opacity=".5"/><stop offset="1" stop-color="#fff" stop-opacity="0"/></radialGradient></defs><rect width="453" height="315" fill="url(#bllg)"/><rect width="453" height="315" fill="url(#blwg)"/><rect width="453" height="315" fill="url(#blrg)"/><g transform="translate(239.8,208.20000000000005) scale(0.926,0.858)"><use href="#tree" stroke="#141214" fill="#141214"/></g><circle cx="239.8" cy="208.20000000000005" r="9.0" fill="url(#blmg)"/><path d="M-2 283 L15 272 L72 280 L76 300 L-2 300 Z" fill="#2b2624"/><path d="M-2 290 L20 287 L76 294 L76 315 L-2 315 Z" fill="#3b3a3a"/><path d="M70 262 Q90 255 120 258 Q150 254 175 257 L200 250 Q215 246 230 253 Q245 250 260 258 L300 262 L300 315 L72 315 Z" fill="#191514"/></svg>
<div style="left:0.0px;top:50.0px;width:1.5px;height:315.0px;background:#ccd"></div>
<div style="left:286.0px;top:288.0px;width:167.0px;height:77.0px;background:#0a4ed8;border-radius:6px 6px 0 0"></div>
<div style="left:286.0px;top:288.0px;width:167.0px;height:19.0px;background:linear-gradient(to bottom,#4a9cff 0%,#1a66ee 8%,#0050dc 22%,#0055e4 50%,#0866f0 78%,#0058e6 90%,#0040c4 100%);border-radius:6px 6px 0 0"></div>
<div class="t" style="left:291.0px;top:292.5px;color:#fff;font-weight:bold;font-size:8.6px;text-shadow:1px 1px 0 rgba(0,0,40,.5);transform-origin:0 0;transform:scaleX(1.04)">Selective gaussian filter</div>
<div style="left:435.0px;top:291.4px;width:15.0px;height:13.3px;background:linear-gradient(135deg,#f19e83,#e25b35 45%,#c8401e);border:1px solid #fff;border-radius:2px"></div><svg style="left:435.0px;top:291.4px" width="15" height="13.3" viewBox="0 0 10 10"><path d="M2.8 2.8 L7.2 7.2 M7.2 2.8 L2.8 7.2" stroke="#fff" stroke-width="1.5"/></svg>
<div style="left:289.0px;top:307.0px;width:161.0px;height:58.0px;background:#ece9d8"></div>
<div class="t" style="left:297.0px;top:319.5px;color:#000;font-size:7.8px;transform-origin:0 0;transform:scaleX(0.92)">Radius :</div>
<div class="t" style="left:297.0px;top:341.0px;color:#000;font-size:7.8px;transform-origin:0 0;transform:scaleX(0.92)">Threshold :</div>
<div style="left:339.0px;top:318.0px;width:36.0px;height:11.2px;background:#fff;border:1px solid;border-color:#808080 #fff #fff #808080"></div>
<div class="t" style="left:341.0px;top:318.8px;color:#000;font-size:8.2px;transform-origin:0 0;transform:scaleX(0.92)">5.0</div>
<div style="left:339.0px;top:339.0px;width:36.0px;height:12.0px;background:#fff;border:1px solid;border-color:#808080 #fff #fff #808080"></div>
<div class="t" style="left:341.0px;top:340.3px;color:#000;font-size:8.2px;transform-origin:0 0;transform:scaleX(0.92)">30.0</div>
<div style="left:386.8px;top:317.3px;width:52.2px;height:14.7px;background:#ece9d8;border:1px solid #222;box-shadow:inset -1px -1px #808080,inset 1px 1px #fff"></div>
<div class="t" style="left:386.8px;top:320.6px;width:52px;text-align:center;font-size:7.6px">OK</div>
<div style="left:386.8px;top:337.3px;width:52.2px;height:14.7px;background:#ece9d8;border:1px solid;border-color:#fff #555 #555 #fff"></div>
<div class="t" style="left:386.8px;top:340.6px;width:52px;text-align:center;font-size:7.6px">Cancel</div>
<div style="left:453.0px;top:0.0px;width:1.0px;height:365.0px;background:#d8d8e0"></div>
</div>
<div style="left:454px;top:362px;width:759px;height:365px;overflow:hidden;background:#7f7f7f">
<div style="left:0.0px;top:0.0px;width:759.0px;height:16.0px;background:linear-gradient(to bottom,#4a9cff 0%,#1a66ee 8%,#0050dc 22%,#0055e4 50%,#0866f0 78%,#0058e6 90%,#0040c4 100%)"></div>
<svg style="left:1.5px;top:3.8px" width="8.5" height="8.5" viewBox="0 0 10 10"><rect x=".5" y=".5" width="9" height="9" rx="2" fill="#e8f4f4" stroke="#9cc" stroke-width=".6"/><path d="M2 7 Q3 3 7 2 Q5 5 8 8 Q4 8 2 7Z" fill="#2a9a7a"/></svg>
<div class="t" style="left:13.5px;top:2.9px;color:#fff;font-weight:bold;font-size:8.8px;text-shadow:1px 1px 0 rgba(0,0,40,.45);transform-origin:0 0;transform:scaleX(0.877);">Adobe Photoshop</div>
<div style="left:0.0px;top:16.0px;width:759.0px;height:13.0px;background:#ece9d8"></div>
<div class="t" style="left:3.0px;top:18.1px;color:#000;font-size:7.6px;transform-origin:0 0;transform:scaleX(0.92)">File</div>
<div class="t" style="left:21.0px;top:18.1px;color:#000;font-size:7.6px;transform-origin:0 0;transform:scaleX(0.92)">Edit</div>
<div class="t" style="left:40.0px;top:18.1px;color:#000;font-size:7.6px;transform-origin:0 0;transform:scaleX(0.92)">Image</div>
<div class="t" style="left:66.0px;top:18.1px;color:#000;font-size:7.6px;transform-origin:0 0;transform:scaleX(0.92)">Layer</div>
<div class="t" style="left:91.0px;top:18.1px;color:#000;font-size:7.6px;transform-origin:0 0;transform:scaleX(0.92)">Select</div>
<div style="left:114.0px;top:16.0px;width:22.0px;height:13.0px;background:#316ac5"></div>
<div class="t" style="left:117.0px;top:18.1px;color:#fff;font-size:7.6px;transform-origin:0 0;transform:scaleX(0.92)">Filter</div>
<div class="t" style="left:139.0px;top:18.1px;color:#000;font-size:7.6px;transform-origin:0 0;transform:scaleX(0.92)">View</div>
<div class="t" style="left:161.0px;top:18.1px;color:#000;font-size:7.6px;transform-origin:0 0;transform:scaleX(0.92)">Window</div>
<div class="t" style="left:191.0px;top:18.1px;color:#000;font-size:7.6px;transform-origin:0 0;transform:scaleX(0.92)">Help</div>
<div style="left:0.0px;top:29.0px;width:759.0px;height:22.0px;background:#ece9d8;border-top:1px solid #cdc9b5;box-shadow:inset 0 1px #fff;border-bottom:1px solid #a9a690"></div>
<div style="left:3px;top:32px;width:2px;height:16px;background:repeating-linear-gradient(#b8b5a2 0 1px,transparent 1px 3px)"></div>
<svg style="left:10.3px;top:34.3px;overflow:visible" width="11.4" height="11.4" viewBox="0 0 12 12"><g fill="#111" stroke="#111"><path d="M3 1 L3 11 L5.5 8.5 L7 11.5 L8.5 10.8 L7.2 8 L10 8 Z" stroke="none"/></g></svg>
<div style="left:29px;top:39px;width:0;height:0;border-top:3px solid #111;border-left:2.5px solid transparent;border-right:2.5px solid transparent"></div>
<div style="left:39.0px;top:31.0px;width:1.0px;height:18.0px;background:#c0bda8"></div><div style="left:40.0px;top:31.0px;width:1.0px;height:18.0px;background:#fff"></div>
<div style="left:43.0px;top:35.5px;width:8.0px;height:8.5px;background:linear-gradient(135deg,#dcdcd4,#fff);border:1px solid #7b8da8"></div>
<div class="t" style="left:51.5px;top:35.5px;color:#000;font-size:7.4px;transform-origin:0 0;transform:scaleX(0.885)">Show Bounding Box</div>
<svg style="left:257.9px;top:34.9px" width="10.2" height="10.2" viewBox="0 0 12 12"><g fill="none" stroke="#5e5e55" transform="scale(1)" style="stroke-width:1.5"><path d="M1 1 h10 M3 3 v7 M8 3 v5" stroke-width="1.2"/></g></svg><svg style="left:276.9px;top:34.9px" width="10.2" height="10.2" viewBox="0 0 12 12"><g fill="none" stroke="#5e5e55" transform="scale(1)" style="stroke-width:1.5"><path d="M1 1 v10 M3 3 h7 M3 8 h5" stroke-width="1.2"/></g></svg><svg style="left:288.9px;top:34.9px" width="10.2" height="10.2" viewBox="0 0 12 12"><g fill="none" stroke="#5e5e55" transform="scale(1)" style="stroke-width:1.5"><path d="M6 1 v10 M2 3 h8 M3 8 h6" stroke-width="1.2"/></g></svg><svg style="left:300.9px;top:34.9px" width="10.2" height="10.2" viewBox="0 0 12 12"><g fill="none" stroke="#5e5e55" transform="scale(1)" style="stroke-width:1.5"><path d="M11 1 v10 M2 3 h8 M5 8 h5" stroke-width="1.2"/></g></svg><svg style="left:326.9px;top:34.9px" width="10.2" height="10.2" viewBox="0 0 12 12"><g fill="none" stroke="#5e5e55" transform="scale(1)" style="stroke-width:1.5"><path d="M1 2 h10 M1 6 h10 M1 10 h10 M3 2 v8" stroke-width="1"/></g></svg><svg style="left:337.9px;top:34.9px" width="10.2" height="10.2" viewBox="0 0 12 12"><g fill="none" stroke="#5e5e55" transform="scale(1)" style="stroke-width:1.5"><path d="M1 2 h10 M1 6 h10 M1 10 h10 M6 2 v8" stroke-width="1"/></g></svg><svg style="left:347.9px;top:34.9px" width="10.2" height="10.2" viewBox="0 0 12 12"><g fill="none" stroke="#5e5e55" transform="scale(1)" style="stroke-width:1.5"><path d="M1 2 h10 M1 6 h10 M1 10 h10 M9 2 v8" stroke-width="1"/></g></svg><svg style="left:366.9px;top:34.9px" width="10.2" height="10.2" viewBox="0 0 12 12"><g fill="none" stroke="#5e5e55" transform="scale(1)" style="stroke-width:1.5"><path d="M2 1 v10 M6 1 v10 M10 1 v10 M2 3 h8" stroke-width="1"/></g></svg><svg style="left:377.9px;top:34.9px" width="10.2" height="10.2" viewBox="0 0 12 12"><g fill="none" stroke="#5e5e55" transform="scale(1)" style="stroke-width:1.5"><path d="M2 1 v10 M6 1 v10 M10 1 v10 M2 6 h8" stroke-width="1"/></g></svg><svg style="left:388.9px;top:34.9px" width="10.2" height="10.2" viewBox="0 0 12 12"><g fill="none" stroke="#5e5e55" transform="scale(1)" style="stroke-width:1.5"><path d="M2 1 v10 M6 1 v10 M10 1 v10 M2 9 h8" stroke-width="1"/></g></svg>
<div style="left:317.0px;top:31.0px;width:1.0px;height:18.0px;background:#c0bda8"></div><div style="left:318.0px;top:31.0px;width:1.0px;height:18.0px;background:#fff"></div>
<div style="left:406.0px;top:31.0px;width:1.0px;height:18.0px;background:#c0bda8"></div><div style="left:407.0px;top:31.0px;width:1.0px;height:18.0px;background:#fff"></div>
<div style="left:504.0px;top:31.0px;width:1.0px;height:18.0px;background:#c0bda8"></div><div style="left:505.0px;top:31.0px;width:1.0px;height:18.0px;background:#fff"></div>
<svg style="left:508px;top:33px" width="14" height="13" viewBox="0 0 14 13"><rect x="1" y="2" width="9" height="10" fill="#fff" stroke="#333" stroke-width="1"/><path d="M3 5 h4 M3 7 h4 M3 9 h3" stroke="#333" stroke-width=".8"/><path d="M9 1 L13 5 L11 5 L11 8" fill="none" stroke="#111" stroke-width="1.2"/></svg>
<div style="left:528.0px;top:33.0px;width:231.0px;height:14.0px;background:linear-gradient(#b5b5b5,#a5a5a5)"></div><div style="left:533.0px;top:36.0px;width:1.0px;height:10.0px;background:#555"></div><div class="t" style="left:536.0px;top:37.5px;font-size:5.6px;color:#333">Brushes</div><svg style="left:558.0px;top:35.0px" width="6" height="12" viewBox="0 0 6 10" preserveAspectRatio="none"><path d="M0 0 L6 10" stroke="#555" stroke-width=".8"/></svg><div style="left:569.0px;top:36.0px;width:1.0px;height:10.0px;background:#555"></div><div class="t" style="left:572.0px;top:37.5px;font-size:5.6px;color:#333">Tool Presets</div><svg style="left:606.0px;top:35.0px" width="6" height="12" viewBox="0 0 6 10" preserveAspectRatio="none"><path d="M0 0 L6 10" stroke="#555" stroke-width=".8"/></svg><div style="left:617.0px;top:36.0px;width:1.0px;height:10.0px;background:#555"></div><div class="t" style="left:620.0px;top:37.5px;font-size:5.6px;color:#333">Layer Comps</div><svg style="left:656.0px;top:35.0px" width="6" height="12" viewBox="0 0 6 10" preserveAspectRatio="none"><path d="M0 0 L6 10" stroke="#555" stroke-width=".8"/></svg>
<div style="left:259.0px;top:54.0px;width:500.0px;height:20.0px;background:linear-gradient(to bottom,#4a9cff 0%,#1a66ee 8%,#0050dc 22%,#0055e4 50%,#0866f0 78%,#0058e6 90%,#0040c4 100%)"></div>
<svg style="left:263px;top:59.5px" width="10" height="11" viewBox="0 0 10 11"><rect x=".5" y=".5" width="9" height="10" fill="#e8f4f4" stroke="#9cc" stroke-width=".6"/><path d="M2 8 Q3 3 7 2 Q5 5 8 9 Q4 9 2 8Z" fill="#2a9a7a"/></svg>
<div class="t" style="left:275.0px;top:58.5px;color:#fff;font-size:8.6px;font-weight:bold;text-shadow:1px 1px 0 rgba(0,0,40,.4);transform-origin:0 0;transform:scaleX(.954)">gms7nnjjaxzvsrqwopi.jpg @ 30.1% (Background copy 4, RGB/8)</div>
<div style="left:719.0px;top:58.0px;width:12.0px;height:13.0px;background:linear-gradient(135deg,#7aa8f8,#2f6ae8 50%,#1a50d0);border:1px solid #fff;border-radius:2px"></div><div style="left:722.0px;top:67.0px;width:4.0px;height:1.5px;background:#fff"></div><div style="left:733.0px;top:58.0px;width:12.0px;height:13.0px;background:linear-gradient(135deg,#7aa8f8,#2f6ae8 50%,#1a50d0);border:1px solid #fff;border-radius:2px"></div><div style="left:735.5px;top:61.0px;width:7.0px;height:7.0px;border:1px solid #fff;border-top-width:2px"></div><div style="left:747.0px;top:58.0px;width:12.0px;height:13.0px;background:linear-gradient(135deg,#f19e83,#e25b35 45%,#c8401e);border:1px solid #fff;border-radius:2px"></div><svg style="left:747.0px;top:58.0px" width="12" height="13" viewBox="0 0 10 10"><path d="M2.8 2.8 L7.2 7.2 M7.2 2.8 L2.8 7.2" stroke="#fff" stroke-width="1.5"/></svg>
<div style="left:259.0px;top:74.0px;width:500.0px;height:291.0px;background:#1a55d8"></div>
<svg style="left:262px;top:74px" width="491" height="291" viewBox="0 0 491 291"><defs><linearGradient id="brlg" x1="0" y1="0" x2="0" y2="1"><stop offset="0" stop-color="#2c2d32"/><stop offset="1" stop-color="#46434a"/></linearGradient><radialGradient id="brrg" gradientUnits="userSpaceOnUse" cx="259.20000000000005" cy="242.70000000000005" r="200"><stop offset="0" stop-color="#c4c4d0" stop-opacity="1"/><stop offset=".05" stop-color="#c4c4d0" stop-opacity=".75"/><stop offset=".15" stop-color="#c4c4d0" stop-opacity=".45"/><stop offset=".32" stop-color="#c4c4d0" stop-opacity=".22"/><stop offset=".6" stop-color="#c4c4d0" stop-opacity=".07"/><stop offset="1" stop-color="#c4c4d0" stop-opacity="0"/></radialGradient><radialGradient id="brwg" gradientUnits="userSpaceOnUse" cx="20" cy="291" r="220"><stop offset="0" stop-color="#6e5e55" stop-opacity=".7"/><stop offset="1" stop-color="#6e5e55" stop-opacity="0"/></radialGradient><radialGradient id="brmg"><stop offset="0" stop-color="#fff"/><stop offset=".5" stop-color="#fff" stop-opacity=".97"/><stop offset=".75" stop-color="#fff" stop-opacity=".5"/><stop offset="1" stop-color="#fff" stop-opacity="0"/></radialGradient></defs><rect width="491" height="291" fill="url(#brlg)"/><rect width="491" height="291" fill="url(#brwg)"/><rect width="491" height="291" fill="url(#brrg)"/><g transform="translate(259.20000000000005,242.70000000000005) scale(1,1)"><use href="#tree" stroke="#161519" fill="#161519"/></g><circle cx="259.20000000000005" cy="242.70000000000005" r="11.2" fill="url(#brmg)"/></svg>
<div style="left:753.0px;top:74.0px;width:6.0px;height:291.0px;background:#fdfdfd"></div>
<div style="left:1.0px;top:87.0px;width:40.0px;height:277.4px;background:#1b47c6;border:2px solid #0c2fa0;border-top:none"></div><div style="left:1.0px;top:87.0px;width:40.0px;height:10.2px;background:linear-gradient(#3c7cf2,#1557e0 60%,#0d46c8)"></div><div style="left:3.5px;top:97.2px;width:35.0px;height:265.2px;background:#ece9d8"></div><div style="left:3.5px;top:97.2px;width:35.0px;height:13.3px;background:#fbfbfb"></div><svg style="left:3.5px;top:97.2px" width="35.0" height="13.3" viewBox="0 0 29 13" preserveAspectRatio="none"><path d="M1 4 Q8 -1 17 5 Q23 9 29 11 L29 13 Q20 12 12 9 Q4 7 1 4 Z" fill="#8c8c8c"/><path d="M3 4 Q12 4 28 12" stroke="#555" stroke-width=".6" fill="none"/></svg><div style="left:3.5px;top:110.5px;width:35.0px;height:1.0px;background:#c9c6b4"></div><svg style="left:6.3px;top:114.0px;overflow:visible" width="13.4" height="13.4" viewBox="0 0 12 12"><g fill="#222" stroke="#222"><circle cx="6" cy="6" r="4.2" fill="none" stroke-dasharray="1.4 1" stroke-width="1"/></g></svg><svg style="left:23.7px;top:114.0px;overflow:visible" width="13.4" height="13.4" viewBox="0 0 12 12"><g fill="#222" stroke="#222"><path d="M2 1 L2 9 L4.2 7 L5.6 10 L7 9.3 L5.7 6.5 L8.5 6.3 Z" stroke="none"/><path d="M8 8 h4 M10 6 v4" stroke-width="1"/></g></svg><svg style="left:6.3px;top:125.7px;overflow:visible" width="13.4" height="13.4" viewBox="0 0 12 12"><g fill="#222" stroke="#222"><path d="M3 3 Q6 0 9 3 Q10 6 6 7 Q3 7 3 4 M5 7 L4 11" fill="none" stroke-width="1.1"/></g></svg><svg style="left:23.7px;top:125.7px;overflow:visible" width="13.4" height="13.4" viewBox="0 0 12 12"><g fill="#222" stroke="#222"><path d="M2 11 L8 5" stroke-width="1.4"/><path d="M9 1 v3 M7.5 2.5 h3 M10 5 l1.5 1" stroke-width=".8"/></g></svg><svg style="left:6.3px;top:138.4px;overflow:visible" width="13.4" height="13.4" viewBox="0 0 12 12"><g fill="#222" stroke="#222"><path d="M3 1 V9 H11 M1 3 H9 V11" fill="none" stroke-width="1.3"/></g></svg><svg style="left:23.7px;top:138.4px;overflow:visible" width="13.4" height="13.4" viewBox="0 0 12 12"><g fill="#222" stroke="#222"><path d="M2 11 L9 3 L11 2 L10 5 Z" stroke="none"/></g></svg><div style="left:4.0px;top:156.4px;width:34.0px;height:1.0px;background:#cfccba"></div><div style="left:4.0px;top:157.4px;width:34.0px;height:1.0px;background:#fff"></div><svg style="left:6.3px;top:158.3px;overflow:visible" width="13.4" height="13.4" viewBox="0 0 12 12"><g fill="#222" stroke="#222"><path d="M2 9 L8 2 Q10 1 10.5 3.5 L4 10.5 Q2 11 2 9 Z" fill="#d8d8d0" stroke-width="1"/></g></svg><svg style="left:23.7px;top:158.3px;overflow:visible" width="13.4" height="13.4" viewBox="0 0 12 12"><g fill="#222" stroke="#222"><path d="M2 11 L4 8 L10 1.5 L10.5 2 L5 9 Z" stroke-width=".8"/></g></svg><svg style="left:6.3px;top:172.1px;overflow:visible" width="13.4" height="13.4" viewBox="0 0 12 12"><g fill="#222" stroke="#222"><path d="M5 2 h2 v3 h-2 z M3 6 h6 v2 h-6 z M2 9 h8 v2 h-8 z" stroke="none"/></g></svg><svg style="left:23.7px;top:172.1px;overflow:visible" width="13.4" height="13.4" viewBox="0 0 12 12"><g fill="#222" stroke="#222"><path d="M2 11 L10 3" stroke-width="1.3"/><path d="M3 3 Q1 6 4 8" fill="none" stroke-width=".9"/></g></svg><svg style="left:6.3px;top:185.4px;overflow:visible" width="13.4" height="13.4" viewBox="0 0 12 12"><g fill="#222" stroke="#222"><path d="M1 8 L6 3 L11 3 L6 8 Z" fill="#fff" stroke-width="1"/></g></svg><svg style="left:23.7px;top:185.4px;overflow:visible" width="13.4" height="13.4" viewBox="0 0 12 12"><g fill="#222" stroke="#222"><path d="M2 6 L6 2 L10 6 L6 10 Z" fill="#fff" stroke-width="1.1"/><path d="M10 7 v3" stroke-width="1.2"/></g></svg><svg style="left:6.3px;top:198.6px;overflow:visible" width="13.4" height="13.4" viewBox="0 0 12 12"><g fill="#222" stroke="#222"><path d="M6 1 Q9 6 9 8 Q9 11 6 11 Q3 11 3 8 Q3 6 6 1 Z" fill="#f0f0f0" stroke-width="1"/></g></svg><svg style="left:23.7px;top:198.6px;overflow:visible" width="13.4" height="13.4" viewBox="0 0 12 12"><g fill="#222" stroke="#222"><path d="M1 8 Q2 4 7 5 Q11 5 10 8 Q8 11 4 10 Z" fill="#ddd" stroke-width="1"/></g></svg><div style="left:4.0px;top:212.5px;width:34.0px;height:1.0px;background:#cfccba"></div><div style="left:4.0px;top:213.5px;width:34.0px;height:1.0px;background:#fff"></div><svg style="left:6.3px;top:218.0px;overflow:visible" width="13.4" height="13.4" viewBox="0 0 12 12"><g fill="#222" stroke="#222"><path d="M3 1 L3 11 L5.5 8.5 L7 11.5 L8.5 10.8 L7.2 8 L10 8 Z" stroke="none"/></g></svg><svg style="left:23.7px;top:218.0px;overflow:visible" width="13.4" height="13.4" viewBox="0 0 12 12"><g fill="#222" stroke="#222"><path d="M2 2 h8 v2 M6 2 v9 M4.5 11 h3 M2 2 v2" fill="none" stroke-width="1.5"/></g></svg><svg style="left:6.3px;top:232.3px;overflow:visible" width="13.4" height="13.4" viewBox="0 0 12 12"><g fill="#222" stroke="#222"><path d="M6 1 L9 6 L7 11 L5 11 L3 6 Z" fill="#fff" stroke-width="1"/><path d="M6 5 v3" stroke-width=".8"/></g></svg><svg style="left:23.7px;top:232.3px;overflow:visible" width="13.4" height="13.4" viewBox="0 0 12 12"><g fill="#222" stroke="#222"><path d="M1 1 L11 11" stroke-width="1.2"/></g></svg><div style="left:4.0px;top:247.1px;width:34.0px;height:1.0px;background:#cfccba"></div><div style="left:4.0px;top:248.1px;width:34.0px;height:1.0px;background:#fff"></div><svg style="left:6.3px;top:248.6px;overflow:visible" width="13.4" height="13.4" viewBox="0 0 12 12"><g fill="#222" stroke="#222"><path d="M2 1 h6 l2 2 v8 h-8 z" fill="#ddd" stroke-width="1"/></g></svg><svg style="left:23.7px;top:248.6px;overflow:visible" width="13.4" height="13.4" viewBox="0 0 12 12"><g fill="#222" stroke="#222"><path d="M2 11 L8 5" stroke-width="1.4"/><path d="M8 2 L10 4" stroke-width="2.6"/></g></svg><svg style="left:6.3px;top:261.9px;overflow:visible" width="13.4" height="13.4" viewBox="0 0 12 12"><g fill="#222" stroke="#222"><path d="M3 6 V3 Q4 2 5 3 V2 Q6 1 7 2 V3 Q8 2 9 3 V8 Q9 11 6 11 Q3 11 2 8 Z" fill="#fff" stroke-width="1"/></g></svg><svg style="left:23.7px;top:261.9px;overflow:visible" width="13.4" height="13.4" viewBox="0 0 12 12"><g fill="#222" stroke="#222"><circle cx="5" cy="5" r="3.3" fill="#fff" stroke-width="1.2"/><path d="M7.5 7.5 L11 11" stroke-width="1.8"/></g></svg><div style="left:4.0px;top:275.7px;width:34.0px;height:1.0px;background:#cfccba"></div><div style="left:4.0px;top:276.7px;width:34.0px;height:1.0px;background:#fff"></div><div style="left:6.3px;top:218.6px;width:14.0px;height:12.2px;border:1px solid #8a887a;background:rgba(255,255,255,.5)"></div><div style="left:15.8px;top:289.0px;width:17.6px;height:17.3px;background:#fff;border:1px solid #c8c8c8"></div><div style="left:9.4px;top:282.8px;width:16.0px;height:14.8px;background:#7b7b7b;border:1px solid #d8d8d8"></div><div style="left:6.2px;top:301.2px;width:4.5px;height:4.5px;background:#000;border-right:1px solid #fff"></div><svg style="left:27.4px;top:279.8px" width="7" height="7" viewBox="0 0 7 7"><path d="M1 2 Q5 1 5.5 6" stroke="#222" fill="none" stroke-width="1"/><path d="M0 2 L2 0 L2 4 Z M4 5 L7 5 L5.5 7Z" fill="#222"/></svg><div style="left:4.0px;top:311.4px;width:34.0px;height:1.0px;background:#cfccba"></div><div style="left:7.0px;top:315.5px;width:12.8px;height:11.2px;background:#f4f4f4;border:1px solid #777"></div><div style="left:10.4px;top:318.0px;width:6px;height:6px;border-radius:50%;border:1px solid #333;background:#fff"></div><div style="left:22.2px;top:315.5px;width:12.8px;height:11.2px;background:linear-gradient(#555,#aaa)"></div><div style="left:25.6px;top:318.0px;width:6px;height:6px;border-radius:50%;background:#fff"></div><div style="left:4.0px;top:329.8px;width:34.0px;height:1.0px;background:#cfccba"></div><div style="left:7.0px;top:332.8px;width:8.0px;height:9.2px;background:linear-gradient(#69c,#c56);border:1px solid #666"></div><div style="left:16.8px;top:332.8px;width:8.0px;height:9.2px;background:linear-gradient(#eee,#999);border:1px solid #666"></div><div style="left:26.6px;top:332.8px;width:8.0px;height:9.2px;background:linear-gradient(#ddd,#777);border:1px solid #666"></div><div style="left:4.0px;top:344.0px;width:34.0px;height:1.0px;background:#cfccba"></div><svg style="left:7.0px;top:346.1px" width="28.0" height="12.2" viewBox="0 0 24 12" preserveAspectRatio="none"><path d="M1 5 L8 2 L13 4 L13 10 L3 11 Z" fill="#eee" stroke="#222" stroke-width="1"/><path d="M10 6 L15 6 L15 4 L18 7 L15 10 L15 8 L10 8Z" fill="#222"/><path d="M17 2 L22 4 L23 11 L18 11 Z" fill="#ccc" stroke="#222" stroke-width="1"/></svg>
<div style="left:114px;top:29px;width:144px;height:256.4px;background:#fff;border:1px solid #9d9d92;box-shadow:2px 2px 1px rgba(0,0,0,.35)"></div>
<div class="t" style="left:124.0px;top:31.5px;color:#000;font-size:7.6px;transform-origin:0 0;transform:scaleX(0.92)">Reduce Noise</div>
<div class="t" style="left:249.0px;top:31.5px;color:#000;font-size:7.6px;transform-origin:100% 0;transform:translateX(-100%) scaleX(0.92)">Ctrl+F</div>
<div style="left:117.0px;top:43.0px;width:138.0px;height:1.0px;background:#c5c2b2"></div>
<div style="left:117.0px;top:44.0px;width:138.0px;height:1.0px;background:#fff"></div>
<div class="t" style="left:124.0px;top:48.2px;color:#000;font-size:7.6px;transform-origin:0 0;transform:scaleX(0.92)">Extract...</div>
<div class="t" style="left:249.0px;top:48.2px;color:#000;font-size:7.6px;transform-origin:100% 0;transform:translateX(-100%) scaleX(0.92)">Alt+Ctrl+X</div>
<div class="t" style="left:124.0px;top:58.9px;color:#000;font-size:7.6px;transform-origin:0 0;transform:scaleX(0.92)">Filter Gallery...</div>
<div class="t" style="left:124.0px;top:69.6px;color:#000;font-size:7.6px;transform-origin:0 0;transform:scaleX(0.92)">Liquify...</div>
<div class="t" style="left:249.0px;top:69.6px;color:#000;font-size:7.6px;transform-origin:100% 0;transform:translateX(-100%) scaleX(0.92)">Shift+Ctrl+X</div>
<div class="t" style="left:124.0px;top:80.3px;color:#000;font-size:7.6px;transform-origin:0 0;transform:scaleX(0.92)">Pattern Maker...</div>
<div class="t" style="left:249.0px;top:80.3px;color:#000;font-size:7.6px;transform-origin:100% 0;transform:translateX(-100%) scaleX(0.92)">Alt+Shift+Ctrl+X</div>
<div class="t" style="left:124.0px;top:91.0px;color:#000;font-size:7.6px;transform-origin:0 0;transform:scaleX(0.92)">Vanishing Point...</div>
<div class="t" style="left:249.0px;top:91.0px;color:#000;font-size:7.6px;transform-origin:100% 0;transform:translateX(-100%) scaleX(0.92)">Alt+Ctrl+V</div>
<div style="left:117.0px;top:103.0px;width:138.0px;height:1.0px;background:#c5c2b2"></div>
<div style="left:117.0px;top:104.0px;width:138.0px;height:1.0px;background:#fff"></div>
<div class="t" style="left:124.0px;top:107.7px;color:#000;font-size:7.6px;transform-origin:0 0;transform:scaleX(0.92)">Artistic</div>
<div style="left:249px;top:109.1px;width:0;height:0;border-left:3px solid #000;border-top:3px solid transparent;border-bottom:3px solid transparent"></div>
<div class="t" style="left:124.0px;top:118.4px;color:#000;font-size:7.6px;transform-origin:0 0;transform:scaleX(0.92)">Blur</div>
<div style="left:249px;top:119.8px;width:0;height:0;border-left:3px solid #000;border-top:3px solid transparent;border-bottom:3px solid transparent"></div>
<div class="t" style="left:124.0px;top:129.1px;color:#000;font-size:7.6px;transform-origin:0 0;transform:scaleX(0.92)">Brush Strokes</div>
<div style="left:249px;top:130.5px;width:0;height:0;border-left:3px solid #000;border-top:3px solid transparent;border-bottom:3px solid transparent"></div>
<div class="t" style="left:124.0px;top:139.8px;color:#000;font-size:7.6px;transform-origin:0 0;transform:scaleX(0.92)">Distort</div>
<div style="left:249px;top:141.2px;width:0;height:0;border-left:3px solid #000;border-top:3px solid transparent;border-bottom:3px solid transparent"></div>
<div style="left:116.0px;top:150.0px;width:140.0px;height:11.0px;background:#316ac5"></div>
<div class="t" style="left:124.0px;top:150.5px;color:#fff;font-size:7.6px;transform-origin:0 0;transform:scaleX(0.92)">Noise</div>
<div style="left:249px;top:151.8px;width:0;height:0;border-left:3px solid #fff;border-top:3px solid transparent;border-bottom:3px solid transparent"></div>
<div class="t" style="left:124.0px;top:161.2px;color:#000;font-size:7.6px;transform-origin:0 0;transform:scaleX(0.92)">Pixelate</div>
<div style="left:249px;top:162.5px;width:0;height:0;border-left:3px solid #000;border-top:3px solid transparent;border-bottom:3px solid transparent"></div>
<div class="t" style="left:124.0px;top:171.9px;color:#000;font-size:7.6px;transform-origin:0 0;transform:scaleX(0.92)">Render</div>
<div style="left:249px;top:173.2px;width:0;height:0;border-left:3px solid #000;border-top:3px solid transparent;border-bottom:3px solid transparent"></div>
<div class="t" style="left:124.0px;top:182.6px;color:#000;font-size:7.6px;transform-origin:0 0;transform:scaleX(0.92)">Sharpen</div>
<div style="left:249px;top:183.9px;width:0;height:0;border-left:3px solid #000;border-top:3px solid transparent;border-bottom:3px solid transparent"></div>
<div class="t" style="left:124.0px;top:193.3px;color:#000;font-size:7.6px;transform-origin:0 0;transform:scaleX(0.92)">Sketch</div>
<div style="left:249px;top:194.6px;width:0;height:0;border-left:3px solid #000;border-top:3px solid transparent;border-bottom:3px solid transparent"></div>
<div class="t" style="left:124.0px;top:204.0px;color:#000;font-size:7.6px;transform-origin:0 0;transform:scaleX(0.92)">Stylize</div>
<div style="left:249px;top:205.3px;width:0;height:0;border-left:3px solid #000;border-top:3px solid transparent;border-bottom:3px solid transparent"></div>
<div class="t" style="left:124.0px;top:214.7px;color:#000;font-size:7.6px;transform-origin:0 0;transform:scaleX(0.92)">Texture</div>
<div style="left:249px;top:216.0px;width:0;height:0;border-left:3px solid #000;border-top:3px solid transparent;border-bottom:3px solid transparent"></div>
<div class="t" style="left:124.0px;top:225.4px;color:#000;font-size:7.6px;transform-origin:0 0;transform:scaleX(0.92)">Video</div>
<div style="left:249px;top:226.7px;width:0;height:0;border-left:3px solid #000;border-top:3px solid transparent;border-bottom:3px solid transparent"></div>
<div class="t" style="left:124.0px;top:236.1px;color:#000;font-size:7.6px;transform-origin:0 0;transform:scaleX(0.92)">Other</div>
<div style="left:249px;top:237.4px;width:0;height:0;border-left:3px solid #000;border-top:3px solid transparent;border-bottom:3px solid transparent"></div>
<div style="left:117.0px;top:248.0px;width:138.0px;height:1.0px;background:#c5c2b2"></div>
<div style="left:117.0px;top:249.0px;width:138.0px;height:1.0px;background:#fff"></div>
<div class="t" style="left:124.0px;top:252.8px;color:#000;font-size:7.6px;transform-origin:0 0;transform:scaleX(0.92)">Digimarc</div>
<div style="left:249px;top:254.1px;width:0;height:0;border-left:3px solid #000;border-top:3px solid transparent;border-bottom:3px solid transparent"></div>
<div class="t" style="left:124.0px;top:263.5px;color:#000;font-size:7.6px;transform-origin:0 0;transform:scaleX(0.92)">PictureCode</div>
<div style="left:249px;top:264.8px;width:0;height:0;border-left:3px solid #000;border-top:3px solid transparent;border-bottom:3px solid transparent"></div>
<div class="t" style="left:124.0px;top:274.2px;color:#000;font-size:7.6px;transform-origin:0 0;transform:scaleX(0.92)">RC-Astro</div>
<div style="left:249px;top:275.5px;width:0;height:0;border-left:3px solid #000;border-top:3px solid transparent;border-bottom:3px solid transparent"></div>
<div style="left:255px;top:147px;width:80px;height:56.5px;background:#fff;border:1px solid #9d9d92;box-shadow:2px 2px 1px rgba(0,0,0,.35)"></div>
<div class="t" style="left:265.0px;top:149.5px;color:#000;font-size:7.6px;transform-origin:0 0;transform:scaleX(0.92)">Add Noise...</div>
<div class="t" style="left:265.0px;top:160.2px;color:#000;font-size:7.6px;transform-origin:0 0;transform:scaleX(0.92)">Despeckle</div>
<div class="t" style="left:265.0px;top:170.9px;color:#000;font-size:7.6px;transform-origin:0 0;transform:scaleX(0.92)">Dust &amp; Scratches...</div>
<div class="t" style="left:265.0px;top:181.6px;color:#000;font-size:7.6px;transform-origin:0 0;transform:scaleX(0.92)">Median...</div>
<div style="left:257.0px;top:191.0px;width:76.0px;height:11.0px;background:#316ac5"></div>
<div class="t" style="left:265.0px;top:192.3px;color:#fff;font-size:7.6px;transform-origin:0 0;transform:scaleX(0.92)">Reduce Noise...</div>
</div>
</body></html>
